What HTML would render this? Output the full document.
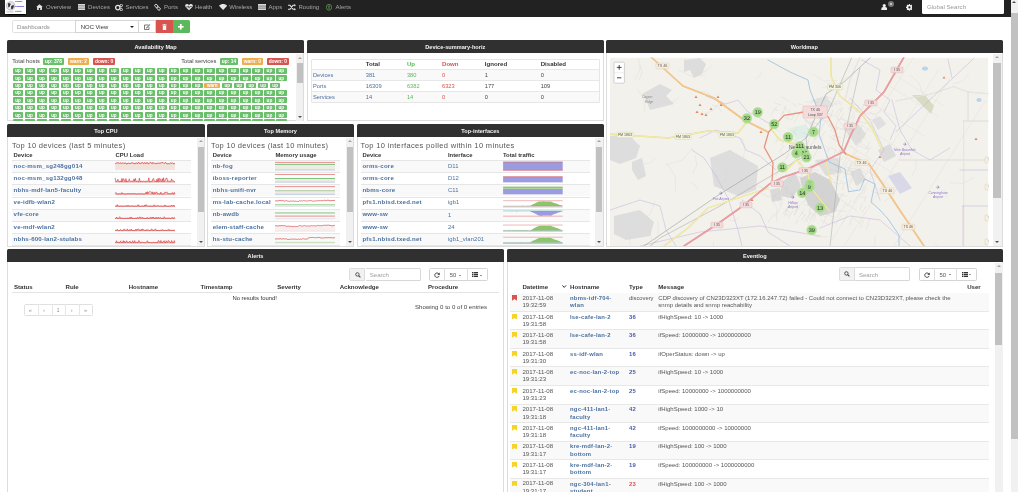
<!DOCTYPE html>
<html><head><meta charset="utf-8">
<style>
*{box-sizing:border-box;margin:0;padding:0}
html,body{width:1024px;height:499px;overflow:hidden;background:#fff;font-family:"Liberation Sans",sans-serif;color:#333}
.a{position:absolute}
.t{position:absolute;line-height:0;white-space:nowrap}
#nav{left:0;top:0;width:1010.5px;height:17px;background:#222}
.nv{position:absolute;top:3.6px;font-size:6px;color:#a8a8a8;white-space:nowrap;line-height:7px}
.ph{position:absolute;background:#303030;border-radius:1.5px 1.5px 0 0}
.pb{position:absolute;background:#fff;border:1px solid #dcdcdc;border-top:none;overflow:hidden}
.sb{position:absolute;background:#f1f1f1}
.sbt{position:absolute;background:#c1c1c1}
.arr{position:absolute;width:0;height:0;border-left:2px solid transparent;border-right:2px solid transparent}
.bd{position:absolute;color:#fff;font-weight:bold;text-align:center;border-radius:1px;white-space:nowrap}
.tl{position:absolute;height:5.6px;border-radius:0.8px}
.tt{position:absolute;line-height:0;color:#fff;font-weight:bold;font-size:4.6px;white-space:nowrap}
</style></head><body><div class="a" style="left:0;top:0;width:1024px;height:499px;will-change:transform">
<!-- NAV -->
<div id="nav" class="a">
<div class="a" style="left:5px;top:0;width:20.7px;height:13.8px;background:#fdfdfd;box-shadow:0 0.6px 1px #000"></div>
<svg class="a" style="left:5px;top:0" width="21" height="14" viewBox="0 0 21 14">
<circle cx="5.65" cy="5.8" r="4.1" fill="#e8e8ea" stroke="#8ea0c8" stroke-width="0.6"/>
<path d="M3 3.5 C4 2.6 5 3 5.6 4 L4.6 6.8 L3.4 7.6 Z" fill="#2a2a2a"/>
<path d="M6.2 6 L8.6 4.8 L8.8 7 L7.2 9.4 L6 8.6 Z" fill="#333"/>
<path d="M4.3 4.4 L5.6 3.8 L5.8 4.6 Z" fill="#d05040"/>
<path d="M3.6 3.2 L4.6 2.8 L4.4 4.4 Z" fill="#5080b0"/>
<rect x="1.5" y="10.8" width="7" height="1.8" fill="#d8d8d8"/>
<rect x="10" y="1.1" width="1.3" height="0.8" fill="#e06060"/><rect x="11.3" y="1.1" width="5.9" height="0.8" fill="#7070d0"/>
<rect x="10" y="6.0" width="1.3" height="0.9" fill="#e06060"/><rect x="11.3" y="6.0" width="7.8" height="0.9" fill="#7878d8"/>
<rect x="10" y="10.9" width="1.3" height="0.8" fill="#e06060"/><rect x="11.3" y="10.9" width="5.2" height="0.8" fill="#7070d0"/>
</svg>
<!-- home -->
<svg class="a" style="left:36px;top:4.2px" width="7" height="6" viewBox="0 0 7 6"><path d="M0.2 3.1 L3.5 0.2 L6.8 3.1 L5.9 3.1 L5.9 5.9 L4.2 5.9 L4.2 4 L2.8 4 L2.8 5.9 L1.1 5.9 L1.1 3.1 Z" fill="#e6e6e6"/></svg>
<div class="nv" style="left:46px">Overview</div>
<!-- devices -->
<svg class="a" style="left:77.6px;top:4.2px" width="7.5" height="6" viewBox="0 0 7.5 6"><rect x="0" y="0" width="7.5" height="1.7" fill="#d8d8d8"/><rect x="0" y="2.15" width="7.5" height="1.7" fill="#d8d8d8"/><rect x="0" y="4.3" width="7.5" height="1.7" fill="#d8d8d8"/></svg>
<div class="nv" style="left:88px;letter-spacing:0.1px">Devices</div>
<!-- services -->
<svg class="a" style="left:115px;top:3.8px" width="8" height="7" viewBox="0 0 8 7"><circle cx="2.8" cy="3.6" r="2.2" fill="none" stroke="#e6e6e6" stroke-width="1.3"/><circle cx="6.3" cy="1.5" r="1.2" fill="none" stroke="#e6e6e6" stroke-width="0.9"/><circle cx="6.3" cy="5.6" r="1.2" fill="none" stroke="#e6e6e6" stroke-width="0.9"/></svg>
<div class="nv" style="left:125.4px">Services</div>
<!-- ports -->
<svg class="a" style="left:154.4px;top:4px" width="7" height="6.5" viewBox="0 0 7 6.5"><rect x="0.6" y="0.6" width="3.4" height="2.6" rx="1.3" transform="rotate(40 2.3 1.9)" fill="none" stroke="#e6e6e6" stroke-width="0.9"/><rect x="3" y="3.3" width="3.4" height="2.6" rx="1.3" transform="rotate(40 4.7 4.6)" fill="none" stroke="#e6e6e6" stroke-width="0.9"/></svg>
<div class="nv" style="left:164px">Ports</div>
<!-- health -->
<svg class="a" style="left:185px;top:4px" width="8" height="6.5" viewBox="0 0 8 6.5"><path d="M4 6.3 L0.6 3 C-0.4 1.8 0.4 0.1 2 0.1 C3 0.1 3.6 0.7 4 1.3 C4.4 0.7 5 0.1 6 0.1 C7.6 0.1 8.4 1.8 7.4 3 Z" fill="#e6e6e6"/><path d="M0.8 3 L2.6 3 L3.2 1.9 L4 4.2 L4.7 2.6 L7.2 2.6" stroke="#222" stroke-width="0.6" fill="none"/></svg>
<div class="nv" style="left:195px">Health</div>
<!-- wireless -->
<svg class="a" style="left:218.8px;top:4px" width="8.2" height="6" viewBox="0 0 8.2 6"><path d="M0 1.8 C2.4 -0.5 5.8 -0.5 8.2 1.8 L4.1 6 Z" fill="#e6e6e6"/></svg>
<div class="nv" style="left:229.2px">Wireless</div>
<!-- apps -->
<svg class="a" style="left:258px;top:4.2px" width="8" height="6" viewBox="0 0 8 6"><rect x="0" y="0" width="8" height="6" fill="#d8d8d8"/><rect x="0" y="1.8" width="8" height="0.5" fill="#222"/><rect x="0" y="3.8" width="8" height="0.5" fill="#222"/></svg>
<div class="nv" style="left:268.6px">Apps</div>
<!-- routing -->
<svg class="a" style="left:288.2px;top:4px" width="8" height="6.5" viewBox="0 0 8 6.5"><path d="M0 1.2 L2 1.2 L5 5.3 L6.8 5.3 M0 5.3 L2 5.3 L5 1.2 L6.8 1.2" stroke="#e6e6e6" stroke-width="1.1" fill="none"/><path d="M6.3 0 L8 1.2 L6.3 2.4 Z M6.3 4.1 L8 5.3 L6.3 6.5 Z" fill="#e6e6e6"/></svg>
<div class="nv" style="left:298.5px">Routing</div>
<!-- alerts -->
<svg class="a" style="left:326.2px;top:4px" width="6" height="6.5" viewBox="0 0 6 6.5"><ellipse cx="3" cy="3.25" rx="2.6" ry="3" fill="none" stroke="#5d8c4a" stroke-width="0.9"/><rect x="2.6" y="1.5" width="0.8" height="2.3" fill="#8bc87a"/><rect x="2.6" y="4.3" width="0.8" height="0.8" fill="#8bc87a"/></svg>
<div class="nv" style="left:335.6px">Alerts</div>
<!-- right -->
<svg class="a" style="left:880.5px;top:3.6px" width="6.5" height="6.4" viewBox="0 0 6.5 6.4"><circle cx="3.25" cy="1.6" r="1.6" fill="#eee"/><path d="M0.2 6.4 L0.5 4 C0.8 3.3 1.8 3.1 3.25 3.1 C4.7 3.1 5.7 3.3 6 4 L6.3 6.4 Z" fill="#eee"/></svg>
<div class="a" style="left:888px;top:0.8px;width:6.4px;height:6.2px;border-radius:50%;background:#777"></div>
<div class="a" style="left:890.2px;top:2.9px;width:2px;height:2px;border-radius:50%;background:#ddd"></div>
<svg class="a" style="left:905.6px;top:4.2px" width="6.8" height="6.8" viewBox="0 0 6.8 6.8"><circle cx="3.4" cy="3.4" r="2.7" fill="#f2f2f2"/><path d="M3.4 0 L3.4 6.8 M0 3.4 L6.8 3.4 M1 1 L5.8 5.8 M5.8 1 L1 5.8" stroke="#f2f2f2" stroke-width="1.1"/><circle cx="3.4" cy="3.4" r="1.1" fill="#222"/></svg>
<div class="a" style="left:921.7px;top:0;width:82.3px;height:13.7px;background:#fff;border-radius:0 0 1.5px 1.5px"></div>
<div class="nv" style="left:926.9px;top:2.7px;color:#9a9a9a;font-size:6.2px">Global Search</div>
</div>
<!-- browser scrollbar -->

<div class="sb" style="left:1010.5px;top:0;width:7.7px;height:492px"></div>
<div class="sbt" style="left:1010.8px;top:13.2px;width:7.2px;height:426px"></div>
<div class="arr" style="left:1012.2px;top:0.9px;border-bottom:2.2px solid #505050;border-left-width:2.3px;border-right-width:2.3px"></div>
<div class="a" style="left:11.60px;top:20.30px;width:64.00px;height:13.20px;background:#fff;border:0.8px solid #e0e0e0;border-radius:1.5px 0 0 1.5px"></div>
<div class="t" style="left:17.00px;top:26.99px;font-size:6.10px;color:#8c8c8c">Dashboards</div>
<div class="a" style="left:75.30px;top:20.30px;width:63.40px;height:13.20px;background:#fff;border:0.8px solid #d4d4d4"></div>
<div class="t" style="left:80.80px;top:27.06px;font-size:5.90px;color:#3a3034">NOC View</div>
<div class="arr" style="left:129.9px;top:26.0px;border-top:2.6px solid #222;border-left-width:2.1px;border-right-width:2.1px"></div>
<div class="a" style="left:138.50px;top:20.30px;width:17.30px;height:13.20px;background:#fff;border:0.8px solid #d4d4d4;border-left:none"></div>
<svg class="a" style="left:144px;top:23.8px" width="6.5" height="6" viewBox="0 0 6.5 6"><path d="M4.6 1 L0.5 1 L0.5 5.5 L5 5.5 L5 3" fill="none" stroke="#444" stroke-width="0.7"/><path d="M2.2 3.8 L5.8 0.3 L6.3 0.8 L2.7 4.3 L1.9 4.5 Z" fill="#444"/></svg>
<div class="a" style="left:155.70px;top:20.30px;width:16.90px;height:13.20px;background:#d9534f;"></div>
<svg class="a" style="left:161.9px;top:23.9px" width="5" height="6.2" viewBox="0 0 5 6.2"><rect x="0.3" y="0.6" width="4.4" height="0.8" fill="#fff"/><rect x="1.8" y="0" width="1.4" height="0.8" fill="#fff"/><rect x="0.8" y="1.7" width="3.4" height="4.5" fill="#fff"/></svg>
<div class="a" style="left:172.50px;top:20.30px;width:17.50px;height:13.20px;background:#5cb85c;border-radius:0 1.5px 1.5px 0"></div>
<svg class="a" style="left:178.3px;top:24px" width="5.6" height="5.6" viewBox="0 0 6 6"><rect x="2.1" y="0" width="1.8" height="6" fill="#fff"/><rect x="0" y="2.1" width="6" height="1.8" fill="#fff"/></svg>
<div class="ph" style="left:7.10px;top:39.90px;width:296.90px;height:13.10px"></div>
<div class="pb" style="left:7.10px;top:53.00px;width:296.90px;height:68.20px;"></div>
<div class="t" style="left:155.55px;top:47.06px;font-size:5.60px;color:#f2f2f2;font-weight:bold;transform:translateX(-50%)">Availability Map</div>
<div class="ph" style="left:306.50px;top:39.90px;width:297.50px;height:13.10px"></div>
<div class="pb" style="left:306.50px;top:53.00px;width:297.50px;height:68.20px;"></div>
<div class="t" style="left:455.25px;top:47.06px;font-size:5.60px;color:#f2f2f2;font-weight:bold;transform:translateX(-50%)">Device-summary-horiz</div>
<div class="ph" style="left:606.00px;top:39.90px;width:396.50px;height:13.10px"></div>
<div class="pb" style="left:606.00px;top:53.00px;width:396.50px;height:193.60px;"></div>
<div class="t" style="left:804.25px;top:47.06px;font-size:5.60px;color:#f2f2f2;font-weight:bold;transform:translateX(-50%)">Worldmap</div>
<div class="ph" style="left:7.10px;top:124.00px;width:197.70px;height:12.80px"></div>
<div class="pb" style="left:7.10px;top:136.80px;width:197.70px;height:109.80px;"></div>
<div class="t" style="left:105.95px;top:131.16px;font-size:5.60px;color:#f2f2f2;font-weight:bold;transform:translateX(-50%)">Top CPU</div>
<div class="ph" style="left:207.00px;top:124.00px;width:147.00px;height:12.80px"></div>
<div class="pb" style="left:207.00px;top:136.80px;width:147.00px;height:109.80px;"></div>
<div class="t" style="left:280.50px;top:131.16px;font-size:5.60px;color:#f2f2f2;font-weight:bold;transform:translateX(-50%)">Top Memory</div>
<div class="ph" style="left:356.60px;top:124.00px;width:247.40px;height:12.80px"></div>
<div class="pb" style="left:356.60px;top:136.80px;width:247.40px;height:109.80px;"></div>
<div class="t" style="left:480.30px;top:131.16px;font-size:5.60px;color:#f2f2f2;font-weight:bold;transform:translateX(-50%)">Top-interfaces</div>
<div class="ph" style="left:7.10px;top:248.90px;width:496.90px;height:13.40px"></div>
<div class="pb" style="left:7.10px;top:262.30px;width:496.90px;height:229.50px;border-bottom:none"></div>
<div class="t" style="left:255.55px;top:256.06px;font-size:5.60px;color:#f2f2f2;font-weight:bold;transform:translateX(-50%)">Alerts</div>
<div class="ph" style="left:506.50px;top:248.90px;width:496.50px;height:13.40px"></div>
<div class="pb" style="left:506.50px;top:262.30px;width:496.50px;height:229.70px;border-bottom:none"></div>
<div class="t" style="left:754.75px;top:256.06px;font-size:5.60px;color:#f2f2f2;font-weight:bold;transform:translateX(-50%)">Eventlog</div>
<div class="t" style="left:12.20px;top:60.59px;font-size:5.80px;color:#444">Total hosts</div>
<div class="a" style="left:43.00px;top:58.20px;width:21.00px;height:6.70px;background:#6abf6b;border-radius:1px"></div>
<div class="t" style="left:53.50px;top:61.60px;font-size:4.90px;color:#fff;font-weight:bold;transform:translateX(-50%)">up: 378</div>
<div class="a" style="left:68.00px;top:58.20px;width:21.00px;height:6.70px;background:#f0ad4e;border-radius:1px"></div>
<div class="t" style="left:78.50px;top:61.60px;font-size:4.90px;color:#fff;font-weight:bold;transform:translateX(-50%)">warn: 2</div>
<div class="a" style="left:93.10px;top:58.20px;width:21.90px;height:6.70px;background:#d9534f;border-radius:1px"></div>
<div class="t" style="left:104.05px;top:61.64px;font-size:4.80px;color:#fff;font-weight:bold;transform:translateX(-50%)">down: 0</div>
<div class="t" style="left:181.20px;top:60.59px;font-size:5.80px;color:#444">Total services</div>
<div class="a" style="left:220.00px;top:58.20px;width:18.00px;height:6.70px;background:#6abf6b;border-radius:1px"></div>
<div class="t" style="left:229.00px;top:61.60px;font-size:4.90px;color:#fff;font-weight:bold;transform:translateX(-50%)">up: 14</div>
<div class="a" style="left:241.70px;top:58.20px;width:21.30px;height:6.70px;background:#f0ad4e;border-radius:1px"></div>
<div class="t" style="left:252.35px;top:61.60px;font-size:4.90px;color:#fff;font-weight:bold;transform:translateX(-50%)">warn: 0</div>
<div class="a" style="left:266.70px;top:58.20px;width:22.10px;height:6.70px;background:#d9534f;border-radius:1px"></div>
<div class="t" style="left:277.75px;top:61.64px;font-size:4.80px;color:#fff;font-weight:bold;transform:translateX(-50%)">down: 0</div>
<div class="a" style="left:8px;top:54px;width:288px;height:67px;overflow:hidden"><div class="a" style="left:-8px;top:-54px;width:1024px;height:499px">
<div class="tl" style="left:12.90px;top:68.00px;width:10.30px;background:#6abf6b"></div>
<div class="tt" style="left:18.05px;top:71.41px;transform:translateX(-50%)">up</div>
<div class="tl" style="left:24.87px;top:68.00px;width:10.30px;background:#6abf6b"></div>
<div class="tt" style="left:30.02px;top:71.41px;transform:translateX(-50%)">up</div>
<div class="tl" style="left:36.84px;top:68.00px;width:10.30px;background:#6abf6b"></div>
<div class="tt" style="left:41.99px;top:71.41px;transform:translateX(-50%)">up</div>
<div class="tl" style="left:48.81px;top:68.00px;width:10.30px;background:#6abf6b"></div>
<div class="tt" style="left:53.96px;top:71.41px;transform:translateX(-50%)">up</div>
<div class="tl" style="left:60.78px;top:68.00px;width:10.30px;background:#6abf6b"></div>
<div class="tt" style="left:65.93px;top:71.41px;transform:translateX(-50%)">up</div>
<div class="tl" style="left:72.75px;top:68.00px;width:10.30px;background:#6abf6b"></div>
<div class="tt" style="left:77.90px;top:71.41px;transform:translateX(-50%)">up</div>
<div class="tl" style="left:84.72px;top:68.00px;width:10.30px;background:#6abf6b"></div>
<div class="tt" style="left:89.87px;top:71.41px;transform:translateX(-50%)">up</div>
<div class="tl" style="left:96.69px;top:68.00px;width:10.30px;background:#6abf6b"></div>
<div class="tt" style="left:101.84px;top:71.41px;transform:translateX(-50%)">up</div>
<div class="tl" style="left:108.66px;top:68.00px;width:10.30px;background:#6abf6b"></div>
<div class="tt" style="left:113.81px;top:71.41px;transform:translateX(-50%)">up</div>
<div class="tl" style="left:120.63px;top:68.00px;width:10.30px;background:#6abf6b"></div>
<div class="tt" style="left:125.78px;top:71.41px;transform:translateX(-50%)">up</div>
<div class="tl" style="left:132.60px;top:68.00px;width:10.30px;background:#6abf6b"></div>
<div class="tt" style="left:137.75px;top:71.41px;transform:translateX(-50%)">up</div>
<div class="tl" style="left:144.57px;top:68.00px;width:10.30px;background:#6abf6b"></div>
<div class="tt" style="left:149.72px;top:71.41px;transform:translateX(-50%)">up</div>
<div class="tl" style="left:156.54px;top:68.00px;width:10.30px;background:#6abf6b"></div>
<div class="tt" style="left:161.69px;top:71.41px;transform:translateX(-50%)">up</div>
<div class="tl" style="left:168.51px;top:68.00px;width:10.30px;background:#6abf6b"></div>
<div class="tt" style="left:173.66px;top:71.41px;transform:translateX(-50%)">up</div>
<div class="tl" style="left:180.48px;top:68.00px;width:10.30px;background:#6abf6b"></div>
<div class="tt" style="left:185.63px;top:71.41px;transform:translateX(-50%)">up</div>
<div class="tl" style="left:192.45px;top:68.00px;width:10.30px;background:#6abf6b"></div>
<div class="tt" style="left:197.60px;top:71.41px;transform:translateX(-50%)">up</div>
<div class="tl" style="left:204.42px;top:68.00px;width:10.30px;background:#6abf6b"></div>
<div class="tt" style="left:209.57px;top:71.41px;transform:translateX(-50%)">up</div>
<div class="tl" style="left:216.39px;top:68.00px;width:10.30px;background:#6abf6b"></div>
<div class="tt" style="left:221.54px;top:71.41px;transform:translateX(-50%)">up</div>
<div class="tl" style="left:228.36px;top:68.00px;width:10.30px;background:#6abf6b"></div>
<div class="tt" style="left:233.51px;top:71.41px;transform:translateX(-50%)">up</div>
<div class="tl" style="left:240.33px;top:68.00px;width:10.30px;background:#6abf6b"></div>
<div class="tt" style="left:245.48px;top:71.41px;transform:translateX(-50%)">up</div>
<div class="tl" style="left:252.30px;top:68.00px;width:10.30px;background:#6abf6b"></div>
<div class="tt" style="left:257.45px;top:71.41px;transform:translateX(-50%)">up</div>
<div class="tl" style="left:264.27px;top:68.00px;width:10.30px;background:#6abf6b"></div>
<div class="tt" style="left:269.42px;top:71.41px;transform:translateX(-50%)">up</div>
<div class="tl" style="left:276.24px;top:68.00px;width:10.30px;background:#6abf6b"></div>
<div class="tt" style="left:281.39px;top:71.41px;transform:translateX(-50%)">up</div>
<div class="tl" style="left:12.90px;top:75.35px;width:10.30px;background:#6abf6b"></div>
<div class="tt" style="left:18.05px;top:78.76px;transform:translateX(-50%)">up</div>
<div class="tl" style="left:24.87px;top:75.35px;width:10.30px;background:#6abf6b"></div>
<div class="tt" style="left:30.02px;top:78.76px;transform:translateX(-50%)">up</div>
<div class="tl" style="left:36.84px;top:75.35px;width:10.30px;background:#6abf6b"></div>
<div class="tt" style="left:41.99px;top:78.76px;transform:translateX(-50%)">up</div>
<div class="tl" style="left:48.81px;top:75.35px;width:10.30px;background:#6abf6b"></div>
<div class="tt" style="left:53.96px;top:78.76px;transform:translateX(-50%)">up</div>
<div class="tl" style="left:60.78px;top:75.35px;width:10.30px;background:#6abf6b"></div>
<div class="tt" style="left:65.93px;top:78.76px;transform:translateX(-50%)">up</div>
<div class="tl" style="left:72.75px;top:75.35px;width:10.30px;background:#6abf6b"></div>
<div class="tt" style="left:77.90px;top:78.76px;transform:translateX(-50%)">up</div>
<div class="tl" style="left:84.72px;top:75.35px;width:10.30px;background:#6abf6b"></div>
<div class="tt" style="left:89.87px;top:78.76px;transform:translateX(-50%)">up</div>
<div class="tl" style="left:96.69px;top:75.35px;width:10.30px;background:#6abf6b"></div>
<div class="tt" style="left:101.84px;top:78.76px;transform:translateX(-50%)">up</div>
<div class="tl" style="left:108.66px;top:75.35px;width:10.30px;background:#6abf6b"></div>
<div class="tt" style="left:113.81px;top:78.76px;transform:translateX(-50%)">up</div>
<div class="tl" style="left:120.63px;top:75.35px;width:10.30px;background:#6abf6b"></div>
<div class="tt" style="left:125.78px;top:78.76px;transform:translateX(-50%)">up</div>
<div class="tl" style="left:132.60px;top:75.35px;width:10.30px;background:#6abf6b"></div>
<div class="tt" style="left:137.75px;top:78.76px;transform:translateX(-50%)">up</div>
<div class="tl" style="left:144.57px;top:75.35px;width:10.30px;background:#6abf6b"></div>
<div class="tt" style="left:149.72px;top:78.76px;transform:translateX(-50%)">up</div>
<div class="tl" style="left:156.54px;top:75.35px;width:10.30px;background:#6abf6b"></div>
<div class="tt" style="left:161.69px;top:78.76px;transform:translateX(-50%)">up</div>
<div class="tl" style="left:168.51px;top:75.35px;width:10.30px;background:#6abf6b"></div>
<div class="tt" style="left:173.66px;top:78.76px;transform:translateX(-50%)">up</div>
<div class="tl" style="left:180.48px;top:75.35px;width:10.30px;background:#6abf6b"></div>
<div class="tt" style="left:185.63px;top:78.76px;transform:translateX(-50%)">up</div>
<div class="tl" style="left:192.45px;top:75.35px;width:10.30px;background:#6abf6b"></div>
<div class="tt" style="left:197.60px;top:78.76px;transform:translateX(-50%)">up</div>
<div class="tl" style="left:204.42px;top:75.35px;width:10.30px;background:#6abf6b"></div>
<div class="tt" style="left:209.57px;top:78.76px;transform:translateX(-50%)">up</div>
<div class="tl" style="left:216.39px;top:75.35px;width:10.30px;background:#6abf6b"></div>
<div class="tt" style="left:221.54px;top:78.76px;transform:translateX(-50%)">up</div>
<div class="tl" style="left:228.36px;top:75.35px;width:10.30px;background:#6abf6b"></div>
<div class="tt" style="left:233.51px;top:78.76px;transform:translateX(-50%)">up</div>
<div class="tl" style="left:240.33px;top:75.35px;width:10.30px;background:#6abf6b"></div>
<div class="tt" style="left:245.48px;top:78.76px;transform:translateX(-50%)">up</div>
<div class="tl" style="left:252.30px;top:75.35px;width:10.30px;background:#6abf6b"></div>
<div class="tt" style="left:257.45px;top:78.76px;transform:translateX(-50%)">up</div>
<div class="tl" style="left:264.27px;top:75.35px;width:10.30px;background:#6abf6b"></div>
<div class="tt" style="left:269.42px;top:78.76px;transform:translateX(-50%)">up</div>
<div class="tl" style="left:276.24px;top:75.35px;width:10.30px;background:#6abf6b"></div>
<div class="tt" style="left:281.39px;top:78.76px;transform:translateX(-50%)">up</div>
<div class="tl" style="left:12.90px;top:82.70px;width:10.30px;background:#6abf6b"></div>
<div class="tt" style="left:18.05px;top:86.11px;transform:translateX(-50%)">up</div>
<div class="tl" style="left:24.87px;top:82.70px;width:10.30px;background:#6abf6b"></div>
<div class="tt" style="left:30.02px;top:86.11px;transform:translateX(-50%)">up</div>
<div class="tl" style="left:36.84px;top:82.70px;width:10.30px;background:#6abf6b"></div>
<div class="tt" style="left:41.99px;top:86.11px;transform:translateX(-50%)">up</div>
<div class="tl" style="left:48.81px;top:82.70px;width:10.30px;background:#6abf6b"></div>
<div class="tt" style="left:53.96px;top:86.11px;transform:translateX(-50%)">up</div>
<div class="tl" style="left:60.78px;top:82.70px;width:10.30px;background:#6abf6b"></div>
<div class="tt" style="left:65.93px;top:86.11px;transform:translateX(-50%)">up</div>
<div class="tl" style="left:72.75px;top:82.70px;width:10.30px;background:#6abf6b"></div>
<div class="tt" style="left:77.90px;top:86.11px;transform:translateX(-50%)">up</div>
<div class="tl" style="left:84.72px;top:82.70px;width:10.30px;background:#6abf6b"></div>
<div class="tt" style="left:89.87px;top:86.11px;transform:translateX(-50%)">up</div>
<div class="tl" style="left:96.69px;top:82.70px;width:10.30px;background:#6abf6b"></div>
<div class="tt" style="left:101.84px;top:86.11px;transform:translateX(-50%)">up</div>
<div class="tl" style="left:108.66px;top:82.70px;width:10.30px;background:#6abf6b"></div>
<div class="tt" style="left:113.81px;top:86.11px;transform:translateX(-50%)">up</div>
<div class="tl" style="left:120.63px;top:82.70px;width:10.30px;background:#6abf6b"></div>
<div class="tt" style="left:125.78px;top:86.11px;transform:translateX(-50%)">up</div>
<div class="tl" style="left:132.60px;top:82.70px;width:10.30px;background:#6abf6b"></div>
<div class="tt" style="left:137.75px;top:86.11px;transform:translateX(-50%)">up</div>
<div class="tl" style="left:144.57px;top:82.70px;width:10.30px;background:#6abf6b"></div>
<div class="tt" style="left:149.72px;top:86.11px;transform:translateX(-50%)">up</div>
<div class="tl" style="left:156.54px;top:82.70px;width:10.30px;background:#6abf6b"></div>
<div class="tt" style="left:161.69px;top:86.11px;transform:translateX(-50%)">up</div>
<div class="tl" style="left:168.51px;top:82.70px;width:10.30px;background:#6abf6b"></div>
<div class="tt" style="left:173.66px;top:86.11px;transform:translateX(-50%)">up</div>
<div class="tl" style="left:180.48px;top:82.70px;width:10.30px;background:#6abf6b"></div>
<div class="tt" style="left:185.63px;top:86.11px;transform:translateX(-50%)">up</div>
<div class="tl" style="left:192.45px;top:82.70px;width:10.30px;background:#6abf6b"></div>
<div class="tt" style="left:197.60px;top:86.11px;transform:translateX(-50%)">up</div>
<div class="tl" style="left:204.42px;top:82.70px;width:15.70px;background:#f0ad4e"></div>
<div class="tt" style="left:212.27px;top:86.11px;transform:translateX(-50%)">warn</div>
<div class="tl" style="left:222.12px;top:82.70px;width:10.30px;background:#6abf6b"></div>
<div class="tt" style="left:227.27px;top:86.11px;transform:translateX(-50%)">up</div>
<div class="tl" style="left:234.09px;top:82.70px;width:10.30px;background:#6abf6b"></div>
<div class="tt" style="left:239.24px;top:86.11px;transform:translateX(-50%)">up</div>
<div class="tl" style="left:246.06px;top:82.70px;width:10.30px;background:#6abf6b"></div>
<div class="tt" style="left:251.21px;top:86.11px;transform:translateX(-50%)">up</div>
<div class="tl" style="left:258.03px;top:82.70px;width:10.30px;background:#6abf6b"></div>
<div class="tt" style="left:263.18px;top:86.11px;transform:translateX(-50%)">up</div>
<div class="tl" style="left:270.00px;top:82.70px;width:10.30px;background:#6abf6b"></div>
<div class="tt" style="left:275.15px;top:86.11px;transform:translateX(-50%)">up</div>
<div class="tl" style="left:12.90px;top:90.05px;width:10.30px;background:#6abf6b"></div>
<div class="tt" style="left:18.05px;top:93.46px;transform:translateX(-50%)">up</div>
<div class="tl" style="left:24.87px;top:90.05px;width:10.30px;background:#6abf6b"></div>
<div class="tt" style="left:30.02px;top:93.46px;transform:translateX(-50%)">up</div>
<div class="tl" style="left:36.84px;top:90.05px;width:10.30px;background:#6abf6b"></div>
<div class="tt" style="left:41.99px;top:93.46px;transform:translateX(-50%)">up</div>
<div class="tl" style="left:48.81px;top:90.05px;width:10.30px;background:#6abf6b"></div>
<div class="tt" style="left:53.96px;top:93.46px;transform:translateX(-50%)">up</div>
<div class="tl" style="left:60.78px;top:90.05px;width:10.30px;background:#6abf6b"></div>
<div class="tt" style="left:65.93px;top:93.46px;transform:translateX(-50%)">up</div>
<div class="tl" style="left:72.75px;top:90.05px;width:10.30px;background:#6abf6b"></div>
<div class="tt" style="left:77.90px;top:93.46px;transform:translateX(-50%)">up</div>
<div class="tl" style="left:84.72px;top:90.05px;width:10.30px;background:#6abf6b"></div>
<div class="tt" style="left:89.87px;top:93.46px;transform:translateX(-50%)">up</div>
<div class="tl" style="left:96.69px;top:90.05px;width:10.30px;background:#6abf6b"></div>
<div class="tt" style="left:101.84px;top:93.46px;transform:translateX(-50%)">up</div>
<div class="tl" style="left:108.66px;top:90.05px;width:10.30px;background:#6abf6b"></div>
<div class="tt" style="left:113.81px;top:93.46px;transform:translateX(-50%)">up</div>
<div class="tl" style="left:120.63px;top:90.05px;width:10.30px;background:#6abf6b"></div>
<div class="tt" style="left:125.78px;top:93.46px;transform:translateX(-50%)">up</div>
<div class="tl" style="left:132.60px;top:90.05px;width:10.30px;background:#6abf6b"></div>
<div class="tt" style="left:137.75px;top:93.46px;transform:translateX(-50%)">up</div>
<div class="tl" style="left:144.57px;top:90.05px;width:10.30px;background:#6abf6b"></div>
<div class="tt" style="left:149.72px;top:93.46px;transform:translateX(-50%)">up</div>
<div class="tl" style="left:156.54px;top:90.05px;width:10.30px;background:#6abf6b"></div>
<div class="tt" style="left:161.69px;top:93.46px;transform:translateX(-50%)">up</div>
<div class="tl" style="left:168.51px;top:90.05px;width:10.30px;background:#6abf6b"></div>
<div class="tt" style="left:173.66px;top:93.46px;transform:translateX(-50%)">up</div>
<div class="tl" style="left:180.48px;top:90.05px;width:10.30px;background:#6abf6b"></div>
<div class="tt" style="left:185.63px;top:93.46px;transform:translateX(-50%)">up</div>
<div class="tl" style="left:192.45px;top:90.05px;width:10.30px;background:#6abf6b"></div>
<div class="tt" style="left:197.60px;top:93.46px;transform:translateX(-50%)">up</div>
<div class="tl" style="left:204.42px;top:90.05px;width:10.30px;background:#6abf6b"></div>
<div class="tt" style="left:209.57px;top:93.46px;transform:translateX(-50%)">up</div>
<div class="tl" style="left:216.39px;top:90.05px;width:10.30px;background:#6abf6b"></div>
<div class="tt" style="left:221.54px;top:93.46px;transform:translateX(-50%)">up</div>
<div class="tl" style="left:228.36px;top:90.05px;width:10.30px;background:#6abf6b"></div>
<div class="tt" style="left:233.51px;top:93.46px;transform:translateX(-50%)">up</div>
<div class="tl" style="left:240.33px;top:90.05px;width:10.30px;background:#6abf6b"></div>
<div class="tt" style="left:245.48px;top:93.46px;transform:translateX(-50%)">up</div>
<div class="tl" style="left:252.30px;top:90.05px;width:10.30px;background:#6abf6b"></div>
<div class="tt" style="left:257.45px;top:93.46px;transform:translateX(-50%)">up</div>
<div class="tl" style="left:264.27px;top:90.05px;width:10.30px;background:#6abf6b"></div>
<div class="tt" style="left:269.42px;top:93.46px;transform:translateX(-50%)">up</div>
<div class="tl" style="left:276.24px;top:90.05px;width:10.30px;background:#6abf6b"></div>
<div class="tt" style="left:281.39px;top:93.46px;transform:translateX(-50%)">up</div>
<div class="tl" style="left:12.90px;top:97.40px;width:10.30px;background:#6abf6b"></div>
<div class="tt" style="left:18.05px;top:100.81px;transform:translateX(-50%)">up</div>
<div class="tl" style="left:24.87px;top:97.40px;width:10.30px;background:#6abf6b"></div>
<div class="tt" style="left:30.02px;top:100.81px;transform:translateX(-50%)">up</div>
<div class="tl" style="left:36.84px;top:97.40px;width:10.30px;background:#6abf6b"></div>
<div class="tt" style="left:41.99px;top:100.81px;transform:translateX(-50%)">up</div>
<div class="tl" style="left:48.81px;top:97.40px;width:10.30px;background:#6abf6b"></div>
<div class="tt" style="left:53.96px;top:100.81px;transform:translateX(-50%)">up</div>
<div class="tl" style="left:60.78px;top:97.40px;width:10.30px;background:#6abf6b"></div>
<div class="tt" style="left:65.93px;top:100.81px;transform:translateX(-50%)">up</div>
<div class="tl" style="left:72.75px;top:97.40px;width:10.30px;background:#6abf6b"></div>
<div class="tt" style="left:77.90px;top:100.81px;transform:translateX(-50%)">up</div>
<div class="tl" style="left:84.72px;top:97.40px;width:10.30px;background:#6abf6b"></div>
<div class="tt" style="left:89.87px;top:100.81px;transform:translateX(-50%)">up</div>
<div class="tl" style="left:96.69px;top:97.40px;width:10.30px;background:#6abf6b"></div>
<div class="tt" style="left:101.84px;top:100.81px;transform:translateX(-50%)">up</div>
<div class="tl" style="left:108.66px;top:97.40px;width:10.30px;background:#6abf6b"></div>
<div class="tt" style="left:113.81px;top:100.81px;transform:translateX(-50%)">up</div>
<div class="tl" style="left:120.63px;top:97.40px;width:10.30px;background:#6abf6b"></div>
<div class="tt" style="left:125.78px;top:100.81px;transform:translateX(-50%)">up</div>
<div class="tl" style="left:132.60px;top:97.40px;width:10.30px;background:#6abf6b"></div>
<div class="tt" style="left:137.75px;top:100.81px;transform:translateX(-50%)">up</div>
<div class="tl" style="left:144.57px;top:97.40px;width:10.30px;background:#6abf6b"></div>
<div class="tt" style="left:149.72px;top:100.81px;transform:translateX(-50%)">up</div>
<div class="tl" style="left:156.54px;top:97.40px;width:10.30px;background:#6abf6b"></div>
<div class="tt" style="left:161.69px;top:100.81px;transform:translateX(-50%)">up</div>
<div class="tl" style="left:168.51px;top:97.40px;width:10.30px;background:#6abf6b"></div>
<div class="tt" style="left:173.66px;top:100.81px;transform:translateX(-50%)">up</div>
<div class="tl" style="left:180.48px;top:97.40px;width:10.30px;background:#6abf6b"></div>
<div class="tt" style="left:185.63px;top:100.81px;transform:translateX(-50%)">up</div>
<div class="tl" style="left:192.45px;top:97.40px;width:10.30px;background:#6abf6b"></div>
<div class="tt" style="left:197.60px;top:100.81px;transform:translateX(-50%)">up</div>
<div class="tl" style="left:204.42px;top:97.40px;width:10.30px;background:#6abf6b"></div>
<div class="tt" style="left:209.57px;top:100.81px;transform:translateX(-50%)">up</div>
<div class="tl" style="left:216.39px;top:97.40px;width:10.30px;background:#6abf6b"></div>
<div class="tt" style="left:221.54px;top:100.81px;transform:translateX(-50%)">up</div>
<div class="tl" style="left:228.36px;top:97.40px;width:10.30px;background:#6abf6b"></div>
<div class="tt" style="left:233.51px;top:100.81px;transform:translateX(-50%)">up</div>
<div class="tl" style="left:240.33px;top:97.40px;width:10.30px;background:#6abf6b"></div>
<div class="tt" style="left:245.48px;top:100.81px;transform:translateX(-50%)">up</div>
<div class="tl" style="left:252.30px;top:97.40px;width:10.30px;background:#6abf6b"></div>
<div class="tt" style="left:257.45px;top:100.81px;transform:translateX(-50%)">up</div>
<div class="tl" style="left:264.27px;top:97.40px;width:10.30px;background:#6abf6b"></div>
<div class="tt" style="left:269.42px;top:100.81px;transform:translateX(-50%)">up</div>
<div class="tl" style="left:276.24px;top:97.40px;width:10.30px;background:#6abf6b"></div>
<div class="tt" style="left:281.39px;top:100.81px;transform:translateX(-50%)">up</div>
<div class="tl" style="left:12.90px;top:104.75px;width:10.30px;background:#6abf6b"></div>
<div class="tt" style="left:18.05px;top:108.16px;transform:translateX(-50%)">up</div>
<div class="tl" style="left:24.87px;top:104.75px;width:10.30px;background:#6abf6b"></div>
<div class="tt" style="left:30.02px;top:108.16px;transform:translateX(-50%)">up</div>
<div class="tl" style="left:36.84px;top:104.75px;width:10.30px;background:#6abf6b"></div>
<div class="tt" style="left:41.99px;top:108.16px;transform:translateX(-50%)">up</div>
<div class="tl" style="left:48.81px;top:104.75px;width:10.30px;background:#6abf6b"></div>
<div class="tt" style="left:53.96px;top:108.16px;transform:translateX(-50%)">up</div>
<div class="tl" style="left:60.78px;top:104.75px;width:10.30px;background:#6abf6b"></div>
<div class="tt" style="left:65.93px;top:108.16px;transform:translateX(-50%)">up</div>
<div class="tl" style="left:72.75px;top:104.75px;width:10.30px;background:#6abf6b"></div>
<div class="tt" style="left:77.90px;top:108.16px;transform:translateX(-50%)">up</div>
<div class="tl" style="left:84.72px;top:104.75px;width:10.30px;background:#6abf6b"></div>
<div class="tt" style="left:89.87px;top:108.16px;transform:translateX(-50%)">up</div>
<div class="tl" style="left:96.69px;top:104.75px;width:10.30px;background:#6abf6b"></div>
<div class="tt" style="left:101.84px;top:108.16px;transform:translateX(-50%)">up</div>
<div class="tl" style="left:108.66px;top:104.75px;width:10.30px;background:#6abf6b"></div>
<div class="tt" style="left:113.81px;top:108.16px;transform:translateX(-50%)">up</div>
<div class="tl" style="left:120.63px;top:104.75px;width:10.30px;background:#6abf6b"></div>
<div class="tt" style="left:125.78px;top:108.16px;transform:translateX(-50%)">up</div>
<div class="tl" style="left:132.60px;top:104.75px;width:10.30px;background:#6abf6b"></div>
<div class="tt" style="left:137.75px;top:108.16px;transform:translateX(-50%)">up</div>
<div class="tl" style="left:144.57px;top:104.75px;width:10.30px;background:#6abf6b"></div>
<div class="tt" style="left:149.72px;top:108.16px;transform:translateX(-50%)">up</div>
<div class="tl" style="left:156.54px;top:104.75px;width:10.30px;background:#6abf6b"></div>
<div class="tt" style="left:161.69px;top:108.16px;transform:translateX(-50%)">up</div>
<div class="tl" style="left:168.51px;top:104.75px;width:10.30px;background:#6abf6b"></div>
<div class="tt" style="left:173.66px;top:108.16px;transform:translateX(-50%)">up</div>
<div class="tl" style="left:180.48px;top:104.75px;width:10.30px;background:#6abf6b"></div>
<div class="tt" style="left:185.63px;top:108.16px;transform:translateX(-50%)">up</div>
<div class="tl" style="left:192.45px;top:104.75px;width:10.30px;background:#6abf6b"></div>
<div class="tt" style="left:197.60px;top:108.16px;transform:translateX(-50%)">up</div>
<div class="tl" style="left:204.42px;top:104.75px;width:10.30px;background:#6abf6b"></div>
<div class="tt" style="left:209.57px;top:108.16px;transform:translateX(-50%)">up</div>
<div class="tl" style="left:216.39px;top:104.75px;width:10.30px;background:#6abf6b"></div>
<div class="tt" style="left:221.54px;top:108.16px;transform:translateX(-50%)">up</div>
<div class="tl" style="left:228.36px;top:104.75px;width:10.30px;background:#6abf6b"></div>
<div class="tt" style="left:233.51px;top:108.16px;transform:translateX(-50%)">up</div>
<div class="tl" style="left:240.33px;top:104.75px;width:10.30px;background:#6abf6b"></div>
<div class="tt" style="left:245.48px;top:108.16px;transform:translateX(-50%)">up</div>
<div class="tl" style="left:252.30px;top:104.75px;width:10.30px;background:#6abf6b"></div>
<div class="tt" style="left:257.45px;top:108.16px;transform:translateX(-50%)">up</div>
<div class="tl" style="left:264.27px;top:104.75px;width:10.30px;background:#6abf6b"></div>
<div class="tt" style="left:269.42px;top:108.16px;transform:translateX(-50%)">up</div>
<div class="tl" style="left:276.24px;top:104.75px;width:10.30px;background:#6abf6b"></div>
<div class="tt" style="left:281.39px;top:108.16px;transform:translateX(-50%)">up</div>
<div class="tl" style="left:12.90px;top:112.10px;width:10.30px;background:#6abf6b"></div>
<div class="tt" style="left:18.05px;top:115.51px;transform:translateX(-50%)">up</div>
<div class="tl" style="left:24.87px;top:112.10px;width:10.30px;background:#6abf6b"></div>
<div class="tt" style="left:30.02px;top:115.51px;transform:translateX(-50%)">up</div>
<div class="tl" style="left:36.84px;top:112.10px;width:10.30px;background:#6abf6b"></div>
<div class="tt" style="left:41.99px;top:115.51px;transform:translateX(-50%)">up</div>
<div class="tl" style="left:48.81px;top:112.10px;width:10.30px;background:#6abf6b"></div>
<div class="tt" style="left:53.96px;top:115.51px;transform:translateX(-50%)">up</div>
<div class="tl" style="left:60.78px;top:112.10px;width:10.30px;background:#6abf6b"></div>
<div class="tt" style="left:65.93px;top:115.51px;transform:translateX(-50%)">up</div>
<div class="tl" style="left:72.75px;top:112.10px;width:10.30px;background:#6abf6b"></div>
<div class="tt" style="left:77.90px;top:115.51px;transform:translateX(-50%)">up</div>
<div class="tl" style="left:84.72px;top:112.10px;width:10.30px;background:#6abf6b"></div>
<div class="tt" style="left:89.87px;top:115.51px;transform:translateX(-50%)">up</div>
<div class="tl" style="left:96.69px;top:112.10px;width:10.30px;background:#6abf6b"></div>
<div class="tt" style="left:101.84px;top:115.51px;transform:translateX(-50%)">up</div>
<div class="tl" style="left:108.66px;top:112.10px;width:10.30px;background:#6abf6b"></div>
<div class="tt" style="left:113.81px;top:115.51px;transform:translateX(-50%)">up</div>
<div class="tl" style="left:120.63px;top:112.10px;width:10.30px;background:#6abf6b"></div>
<div class="tt" style="left:125.78px;top:115.51px;transform:translateX(-50%)">up</div>
<div class="tl" style="left:132.60px;top:112.10px;width:10.30px;background:#6abf6b"></div>
<div class="tt" style="left:137.75px;top:115.51px;transform:translateX(-50%)">up</div>
<div class="tl" style="left:144.57px;top:112.10px;width:10.30px;background:#6abf6b"></div>
<div class="tt" style="left:149.72px;top:115.51px;transform:translateX(-50%)">up</div>
<div class="tl" style="left:156.54px;top:112.10px;width:10.30px;background:#6abf6b"></div>
<div class="tt" style="left:161.69px;top:115.51px;transform:translateX(-50%)">up</div>
<div class="tl" style="left:168.51px;top:112.10px;width:10.30px;background:#6abf6b"></div>
<div class="tt" style="left:173.66px;top:115.51px;transform:translateX(-50%)">up</div>
<div class="tl" style="left:180.48px;top:112.10px;width:10.30px;background:#6abf6b"></div>
<div class="tt" style="left:185.63px;top:115.51px;transform:translateX(-50%)">up</div>
<div class="tl" style="left:192.45px;top:112.10px;width:10.30px;background:#6abf6b"></div>
<div class="tt" style="left:197.60px;top:115.51px;transform:translateX(-50%)">up</div>
<div class="tl" style="left:204.42px;top:112.10px;width:10.30px;background:#6abf6b"></div>
<div class="tt" style="left:209.57px;top:115.51px;transform:translateX(-50%)">up</div>
<div class="tl" style="left:216.39px;top:112.10px;width:10.30px;background:#6abf6b"></div>
<div class="tt" style="left:221.54px;top:115.51px;transform:translateX(-50%)">up</div>
<div class="tl" style="left:228.36px;top:112.10px;width:10.30px;background:#6abf6b"></div>
<div class="tt" style="left:233.51px;top:115.51px;transform:translateX(-50%)">up</div>
<div class="tl" style="left:240.33px;top:112.10px;width:10.30px;background:#6abf6b"></div>
<div class="tt" style="left:245.48px;top:115.51px;transform:translateX(-50%)">up</div>
<div class="tl" style="left:252.30px;top:112.10px;width:10.30px;background:#6abf6b"></div>
<div class="tt" style="left:257.45px;top:115.51px;transform:translateX(-50%)">up</div>
<div class="tl" style="left:264.27px;top:112.10px;width:10.30px;background:#6abf6b"></div>
<div class="tt" style="left:269.42px;top:115.51px;transform:translateX(-50%)">up</div>
<div class="tl" style="left:276.24px;top:112.10px;width:10.30px;background:#6abf6b"></div>
<div class="tt" style="left:281.39px;top:115.51px;transform:translateX(-50%)">up</div>
<div class="tl" style="left:12.90px;top:119.45px;width:10.30px;background:#6abf6b"></div>
<div class="tt" style="left:18.05px;top:122.86px;transform:translateX(-50%)">up</div>
<div class="tl" style="left:24.87px;top:119.45px;width:10.30px;background:#6abf6b"></div>
<div class="tt" style="left:30.02px;top:122.86px;transform:translateX(-50%)">up</div>
<div class="tl" style="left:36.84px;top:119.45px;width:10.30px;background:#6abf6b"></div>
<div class="tt" style="left:41.99px;top:122.86px;transform:translateX(-50%)">up</div>
<div class="tl" style="left:48.81px;top:119.45px;width:10.30px;background:#6abf6b"></div>
<div class="tt" style="left:53.96px;top:122.86px;transform:translateX(-50%)">up</div>
<div class="tl" style="left:60.78px;top:119.45px;width:10.30px;background:#6abf6b"></div>
<div class="tt" style="left:65.93px;top:122.86px;transform:translateX(-50%)">up</div>
<div class="tl" style="left:72.75px;top:119.45px;width:10.30px;background:#6abf6b"></div>
<div class="tt" style="left:77.90px;top:122.86px;transform:translateX(-50%)">up</div>
<div class="tl" style="left:84.72px;top:119.45px;width:10.30px;background:#6abf6b"></div>
<div class="tt" style="left:89.87px;top:122.86px;transform:translateX(-50%)">up</div>
<div class="tl" style="left:96.69px;top:119.45px;width:10.30px;background:#6abf6b"></div>
<div class="tt" style="left:101.84px;top:122.86px;transform:translateX(-50%)">up</div>
<div class="tl" style="left:108.66px;top:119.45px;width:10.30px;background:#6abf6b"></div>
<div class="tt" style="left:113.81px;top:122.86px;transform:translateX(-50%)">up</div>
<div class="tl" style="left:120.63px;top:119.45px;width:10.30px;background:#6abf6b"></div>
<div class="tt" style="left:125.78px;top:122.86px;transform:translateX(-50%)">up</div>
<div class="tl" style="left:132.60px;top:119.45px;width:10.30px;background:#6abf6b"></div>
<div class="tt" style="left:137.75px;top:122.86px;transform:translateX(-50%)">up</div>
<div class="tl" style="left:144.57px;top:119.45px;width:10.30px;background:#6abf6b"></div>
<div class="tt" style="left:149.72px;top:122.86px;transform:translateX(-50%)">up</div>
<div class="tl" style="left:156.54px;top:119.45px;width:10.30px;background:#6abf6b"></div>
<div class="tt" style="left:161.69px;top:122.86px;transform:translateX(-50%)">up</div>
<div class="tl" style="left:168.51px;top:119.45px;width:10.30px;background:#6abf6b"></div>
<div class="tt" style="left:173.66px;top:122.86px;transform:translateX(-50%)">up</div>
<div class="tl" style="left:180.48px;top:119.45px;width:10.30px;background:#6abf6b"></div>
<div class="tt" style="left:185.63px;top:122.86px;transform:translateX(-50%)">up</div>
<div class="tl" style="left:192.45px;top:119.45px;width:10.30px;background:#6abf6b"></div>
<div class="tt" style="left:197.60px;top:122.86px;transform:translateX(-50%)">up</div>
<div class="tl" style="left:204.42px;top:119.45px;width:10.30px;background:#6abf6b"></div>
<div class="tt" style="left:209.57px;top:122.86px;transform:translateX(-50%)">up</div>
<div class="tl" style="left:216.39px;top:119.45px;width:10.30px;background:#6abf6b"></div>
<div class="tt" style="left:221.54px;top:122.86px;transform:translateX(-50%)">up</div>
<div class="tl" style="left:228.36px;top:119.45px;width:10.30px;background:#6abf6b"></div>
<div class="tt" style="left:233.51px;top:122.86px;transform:translateX(-50%)">up</div>
<div class="tl" style="left:240.33px;top:119.45px;width:10.30px;background:#6abf6b"></div>
<div class="tt" style="left:245.48px;top:122.86px;transform:translateX(-50%)">up</div>
<div class="tl" style="left:252.30px;top:119.45px;width:10.30px;background:#6abf6b"></div>
<div class="tt" style="left:257.45px;top:122.86px;transform:translateX(-50%)">up</div>
<div class="tl" style="left:264.27px;top:119.45px;width:10.30px;background:#6abf6b"></div>
<div class="tt" style="left:269.42px;top:122.86px;transform:translateX(-50%)">up</div>
<div class="tl" style="left:276.24px;top:119.45px;width:10.30px;background:#6abf6b"></div>
<div class="tt" style="left:281.39px;top:122.86px;transform:translateX(-50%)">up</div>
</div></div>
<div class="a" style="left:296.00px;top:54.30px;width:7.40px;height:66.30px;background:#f1f1f1;"></div>
<div class="a" style="left:296.50px;top:62.80px;width:6.40px;height:20.50px;background:#c1c1c1;"></div>
<div class="arr" style="left:297.70px;top:56.70px;border-bottom:2.2px solid #a3a3a3;border-left-width:2px;border-right-width:2px"></div>
<div class="arr" style="left:297.70px;top:115.60px;border-top:2.2px solid #505050;border-left-width:2px;border-right-width:2px"></div>
<div class="a" style="left:311.00px;top:58.80px;width:288.70px;height:43.80px;background:#fff;border:0.8px solid #e6e6e6;border-radius:1px"></div>
<div class="a" style="left:311.80px;top:69.20px;width:287.10px;height:11.00px;background:#f9f9f9;"></div>
<div class="a" style="left:311.80px;top:91.30px;width:287.10px;height:10.90px;background:#f9f9f9;"></div>
<div class="a" style="left:311.80px;top:69.20px;width:287.10px;height:0.70px;background:#e8e8e8;"></div>
<div class="a" style="left:311.80px;top:80.20px;width:287.10px;height:0.70px;background:#e8e8e8;"></div>
<div class="a" style="left:311.80px;top:91.30px;width:287.10px;height:0.70px;background:#e8e8e8;"></div>
<div class="t" style="left:365.80px;top:63.99px;font-size:6.10px;color:#333;font-weight:bold">Total</div>
<div class="t" style="left:406.90px;top:63.99px;font-size:6.10px;color:#5cb85c;font-weight:bold">Up</div>
<div class="t" style="left:442.00px;top:63.99px;font-size:6.10px;color:#d9534f;font-weight:bold">Down</div>
<div class="t" style="left:484.80px;top:63.99px;font-size:6.10px;color:#333;font-weight:bold">Ignored</div>
<div class="t" style="left:540.70px;top:63.99px;font-size:6.10px;color:#333;font-weight:bold">Disabled</div>
<div class="t" style="left:313.00px;top:75.12px;font-size:5.70px;color:#4a70a0">Devices</div>
<div class="t" style="left:365.80px;top:75.12px;font-size:5.70px;color:#4a70a0">381</div>
<div class="t" style="left:406.90px;top:75.12px;font-size:5.70px;color:#5cb85c">380</div>
<div class="t" style="left:442.00px;top:75.12px;font-size:5.70px;color:#d9534f">0</div>
<div class="t" style="left:484.80px;top:75.12px;font-size:5.70px;color:#444">1</div>
<div class="t" style="left:540.70px;top:75.12px;font-size:5.70px;color:#444">0</div>
<div class="t" style="left:313.00px;top:86.17px;font-size:5.70px;color:#4a70a0">Ports</div>
<div class="t" style="left:365.80px;top:86.17px;font-size:5.70px;color:#4a70a0">16309</div>
<div class="t" style="left:406.90px;top:86.17px;font-size:5.70px;color:#5cb85c">6382</div>
<div class="t" style="left:442.00px;top:86.17px;font-size:5.70px;color:#d9534f">6323</div>
<div class="t" style="left:484.80px;top:86.17px;font-size:5.70px;color:#444">177</div>
<div class="t" style="left:540.70px;top:86.17px;font-size:5.70px;color:#444">109</div>
<div class="t" style="left:313.00px;top:97.22px;font-size:5.70px;color:#4a70a0">Services</div>
<div class="t" style="left:365.80px;top:97.22px;font-size:5.70px;color:#4a70a0">14</div>
<div class="t" style="left:406.90px;top:97.22px;font-size:5.70px;color:#5cb85c">14</div>
<div class="t" style="left:442.00px;top:97.22px;font-size:5.70px;color:#d9534f">0</div>
<div class="t" style="left:484.80px;top:97.22px;font-size:5.70px;color:#444">0</div>
<div class="t" style="left:540.70px;top:97.22px;font-size:5.70px;color:#444">0</div>
<div class="t" style="left:11.90px;top:146.20px;font-size:7.50px;color:#555;letter-spacing:0.33px">Top 10 devices (last 5 minutes)</div>
<div class="t" style="left:13.60px;top:154.66px;font-size:5.90px;color:#333;font-weight:bold">Device</div>
<div class="t" style="left:115.60px;top:154.66px;font-size:5.90px;color:#333;font-weight:bold">CPU Load</div>
<div class="a" style="left:11.50px;top:160.00px;width:179.50px;height:12.17px;background:#f9f9f9;"></div>
<div class="a" style="left:11.50px;top:160.00px;width:179.50px;height:0.70px;background:#e6e6e6;"></div>
<div class="a" style="left:11.50px;top:172.17px;width:179.50px;height:0.70px;background:#e6e6e6;"></div>
<div class="a" style="left:11.50px;top:184.34px;width:179.50px;height:12.17px;background:#f9f9f9;"></div>
<div class="a" style="left:11.50px;top:184.34px;width:179.50px;height:0.70px;background:#e6e6e6;"></div>
<div class="a" style="left:11.50px;top:196.51px;width:179.50px;height:0.70px;background:#e6e6e6;"></div>
<div class="a" style="left:11.50px;top:208.68px;width:179.50px;height:12.17px;background:#f9f9f9;"></div>
<div class="a" style="left:11.50px;top:208.68px;width:179.50px;height:0.70px;background:#e6e6e6;"></div>
<div class="a" style="left:11.50px;top:220.85px;width:179.50px;height:0.70px;background:#e6e6e6;"></div>
<div class="a" style="left:11.50px;top:233.02px;width:179.50px;height:12.17px;background:#f9f9f9;"></div>
<div class="a" style="left:11.50px;top:233.02px;width:179.50px;height:0.70px;background:#e6e6e6;"></div>
<div class="a" style="left:11.50px;top:245.19px;width:179.50px;height:0.70px;background:#e6e6e6;"></div>
<div class="t" style="left:13.60px;top:165.79px;font-size:6.10px;color:#4a70a0;letter-spacing:0.20px;font-weight:600">noc-msm_sg248gg014</div>
<div class="t" style="left:13.60px;top:177.96px;font-size:6.10px;color:#4a70a0;letter-spacing:0.20px;font-weight:600">noc-msm_sg132gg048</div>
<div class="t" style="left:13.60px;top:190.13px;font-size:6.10px;color:#4a70a0;letter-spacing:0.20px;font-weight:600">nbhs-mdf-lan5-faculty</div>
<div class="t" style="left:13.60px;top:202.30px;font-size:6.10px;color:#4a70a0;letter-spacing:0.20px;font-weight:600">ve-idfb-wlan2</div>
<div class="t" style="left:13.60px;top:214.47px;font-size:6.10px;color:#4a70a0;letter-spacing:0.20px;font-weight:600">vfe-core</div>
<div class="t" style="left:13.60px;top:226.64px;font-size:6.10px;color:#4a70a0;letter-spacing:0.20px;font-weight:600">ve-mdf-wlan2</div>
<div class="t" style="left:13.60px;top:238.81px;font-size:6.10px;color:#4a70a0;letter-spacing:0.20px;font-weight:600">nbhs-600-lan2-stulabs</div>
<svg class="a" style="left:0;top:0" width="1024" height="499"><path d="M115.20 163.65 L115.87 163.51 L116.54 162.97 L117.22 162.71 L117.89 163.12 L118.56 162.95 L119.23 163.55 L119.90 162.79 L120.58 163.06 L121.25 163.23 L121.92 163.75 L122.59 163.11 L123.26 162.75 L123.93 163.51 L124.61 163.29 L125.28 162.70 L125.95 163.76 L126.62 163.87 L127.29 163.60 L127.97 163.74 L128.64 162.80 L129.31 163.47 L129.98 163.74 L130.65 163.39 L131.33 163.06 L132.00 162.46 L132.67 162.99 L133.34 163.28 L134.01 163.76 L134.69 163.85 L135.36 163.06 L136.03 163.68 L136.70 162.72 L137.37 163.59 L138.04 163.18 L138.72 162.32 L139.39 163.45 L140.06 162.94 L140.73 163.62 L141.40 163.37 L142.08 162.30 L142.75 163.09 L143.42 163.69 L144.09 162.69 L144.76 162.82 L145.44 163.69 L146.11 162.61 L146.78 163.21 L147.45 162.68 L148.12 163.85 L148.80 163.59 L149.47 163.02 L150.14 162.43 L150.81 162.81 L151.48 163.11 L152.16 163.79 L152.83 162.47 L153.50 163.18 L154.17 163.43 L154.84 163.18 L155.51 163.60 L156.19 163.16 L156.86 163.84 L157.53 163.27 L158.20 163.24 L158.87 163.01 L159.55 163.25 L160.22 162.92 L160.89 163.22 L161.56 162.76 L162.23 162.60 L162.91 162.60 L163.58 163.28 L164.25 163.35 L164.92 163.06 L165.59 162.44 L166.27 163.51 L166.94 163.70 L167.61 163.78 L168.28 163.65 L168.95 163.74 L169.62 163.78 L170.30 163.16 L170.97 162.93 L171.64 163.43 L172.31 162.74 L172.98 163.60 L173.66 163.66 L174.33 163.73 L175.00 163.24 L175.00 170.10 L115.20 170.10 Z" fill="#f2e2dc"/><path d="M115.20 163.65 L115.87 163.51 L116.54 162.97 L117.22 162.71 L117.89 163.12 L118.56 162.95 L119.23 163.55 L119.90 162.79 L120.58 163.06 L121.25 163.23 L121.92 163.75 L122.59 163.11 L123.26 162.75 L123.93 163.51 L124.61 163.29 L125.28 162.70 L125.95 163.76 L126.62 163.87 L127.29 163.60 L127.97 163.74 L128.64 162.80 L129.31 163.47 L129.98 163.74 L130.65 163.39 L131.33 163.06 L132.00 162.46 L132.67 162.99 L133.34 163.28 L134.01 163.76 L134.69 163.85 L135.36 163.06 L136.03 163.68 L136.70 162.72 L137.37 163.59 L138.04 163.18 L138.72 162.32 L139.39 163.45 L140.06 162.94 L140.73 163.62 L141.40 163.37 L142.08 162.30 L142.75 163.09 L143.42 163.69 L144.09 162.69 L144.76 162.82 L145.44 163.69 L146.11 162.61 L146.78 163.21 L147.45 162.68 L148.12 163.85 L148.80 163.59 L149.47 163.02 L150.14 162.43 L150.81 162.81 L151.48 163.11 L152.16 163.79 L152.83 162.47 L153.50 163.18 L154.17 163.43 L154.84 163.18 L155.51 163.60 L156.19 163.16 L156.86 163.84 L157.53 163.27 L158.20 163.24 L158.87 163.01 L159.55 163.25 L160.22 162.92 L160.89 163.22 L161.56 162.76 L162.23 162.60 L162.91 162.60 L163.58 163.28 L164.25 163.35 L164.92 163.06 L165.59 162.44 L166.27 163.51 L166.94 163.70 L167.61 163.78 L168.28 163.65 L168.95 163.74 L169.62 163.78 L170.30 163.16 L170.97 162.93 L171.64 163.43 L172.31 162.74 L172.98 163.60 L173.66 163.66 L174.33 163.73 L175.00 163.24" stroke="#d63030" stroke-width="0.8" fill="none"/><path d="M115.20 177.84 L115.87 181.69 L116.54 181.48 L117.22 181.10 L117.89 179.28 L118.56 181.49 L119.23 181.97 L119.90 181.18 L120.58 180.93 L121.25 181.94 L121.92 178.38 L122.59 181.55 L123.26 178.59 L123.93 178.94 L124.61 181.42 L125.28 181.72 L125.95 178.52 L126.62 181.95 L127.29 181.36 L127.97 181.77 L128.64 181.02 L129.31 178.74 L129.98 181.19 L130.65 181.51 L131.33 181.23 L132.00 181.32 L132.67 181.04 L133.34 181.32 L134.01 178.90 L134.69 181.51 L135.36 178.36 L136.03 181.23 L136.70 181.49 L137.37 181.11 L138.04 181.54 L138.72 181.94 L139.39 178.09 L140.06 181.32 L140.73 181.78 L141.40 180.89 L142.08 181.38 L142.75 181.71 L143.42 180.92 L144.09 181.46 L144.76 181.37 L145.44 181.96 L146.11 181.07 L146.78 181.16 L147.45 181.40 L148.12 181.50 L148.80 177.80 L149.47 181.75 L150.14 181.44 L150.81 181.59 L151.48 181.28 L152.16 181.47 L152.83 178.93 L153.50 178.30 L154.17 181.09 L154.84 181.07 L155.51 181.04 L156.19 181.88 L156.86 179.30 L157.53 181.70 L158.20 178.23 L158.87 181.89 L159.55 178.40 L160.22 178.85 L160.89 181.47 L161.56 181.45 L162.23 178.65 L162.91 181.76 L163.58 177.75 L164.25 181.74 L164.92 181.07 L165.59 179.30 L166.27 178.06 L166.94 178.09 L167.61 181.37 L168.28 180.90 L168.95 181.40 L169.62 181.26 L170.30 181.34 L170.97 181.28 L171.64 178.80 L172.31 181.01 L172.98 181.03 L173.66 180.94 L174.33 181.51 L175.00 181.96 L175.00 181.97 L115.20 181.97 Z" fill="#f5e4e0"/><path d="M115.20 177.84 L115.87 181.69 L116.54 181.48 L117.22 181.10 L117.89 179.28 L118.56 181.49 L119.23 181.97 L119.90 181.18 L120.58 180.93 L121.25 181.94 L121.92 178.38 L122.59 181.55 L123.26 178.59 L123.93 178.94 L124.61 181.42 L125.28 181.72 L125.95 178.52 L126.62 181.95 L127.29 181.36 L127.97 181.77 L128.64 181.02 L129.31 178.74 L129.98 181.19 L130.65 181.51 L131.33 181.23 L132.00 181.32 L132.67 181.04 L133.34 181.32 L134.01 178.90 L134.69 181.51 L135.36 178.36 L136.03 181.23 L136.70 181.49 L137.37 181.11 L138.04 181.54 L138.72 181.94 L139.39 178.09 L140.06 181.32 L140.73 181.78 L141.40 180.89 L142.08 181.38 L142.75 181.71 L143.42 180.92 L144.09 181.46 L144.76 181.37 L145.44 181.96 L146.11 181.07 L146.78 181.16 L147.45 181.40 L148.12 181.50 L148.80 177.80 L149.47 181.75 L150.14 181.44 L150.81 181.59 L151.48 181.28 L152.16 181.47 L152.83 178.93 L153.50 178.30 L154.17 181.09 L154.84 181.07 L155.51 181.04 L156.19 181.88 L156.86 179.30 L157.53 181.70 L158.20 178.23 L158.87 181.89 L159.55 178.40 L160.22 178.85 L160.89 181.47 L161.56 181.45 L162.23 178.65 L162.91 181.76 L163.58 177.75 L164.25 181.74 L164.92 181.07 L165.59 179.30 L166.27 178.06 L166.94 178.09 L167.61 181.37 L168.28 180.90 L168.95 181.40 L169.62 181.26 L170.30 181.34 L170.97 181.28 L171.64 178.80 L172.31 181.01 L172.98 181.03 L173.66 180.94 L174.33 181.51 L175.00 181.96" stroke="#d63030" stroke-width="0.6" fill="none"/><line x1="115.20" y1="181.97" x2="175.00" y2="181.97" stroke="#d63030" stroke-width="0.5"/><path d="M115.20 193.52 L115.87 192.49 L116.54 193.66 L117.22 193.94 L117.89 193.75 L118.56 194.04 L119.23 193.88 L119.90 193.49 L120.58 193.79 L121.25 193.97 L121.92 192.55 L122.59 193.93 L123.26 193.56 L123.93 193.78 L124.61 194.12 L125.28 194.05 L125.95 193.49 L126.62 194.02 L127.29 193.62 L127.97 193.55 L128.64 193.63 L129.31 193.50 L129.98 194.04 L130.65 193.68 L131.33 193.80 L132.00 193.54 L132.67 193.60 L133.34 193.57 L134.01 193.84 L134.69 193.54 L135.36 193.82 L136.03 193.93 L136.70 194.03 L137.37 193.97 L138.04 193.94 L138.72 193.68 L139.39 193.80 L140.06 193.76 L140.73 194.00 L141.40 193.53 L142.08 194.09 L142.75 193.67 L143.42 194.02 L144.09 194.10 L144.76 193.96 L145.44 193.57 L146.11 192.04 L146.78 193.98 L147.45 191.66 L148.12 193.67 L148.80 192.20 L149.47 191.88 L150.14 191.59 L150.81 191.82 L151.48 192.31 L152.16 194.04 L152.83 191.86 L153.50 194.11 L154.17 194.04 L154.84 192.22 L155.51 193.66 L156.19 192.23 L156.86 192.11 L157.53 193.66 L158.20 193.65 L158.87 193.68 L159.55 193.99 L160.22 193.93 L160.89 192.11 L161.56 194.06 L162.23 193.88 L162.91 194.05 L163.58 193.97 L164.25 193.87 L164.92 192.00 L165.59 192.52 L166.27 192.41 L166.94 191.92 L167.61 193.50 L168.28 193.49 L168.95 193.85 L169.62 193.76 L170.30 193.62 L170.97 193.97 L171.64 193.80 L172.31 192.54 L172.98 194.07 L173.66 193.98 L174.33 192.39 L175.00 194.00 L175.00 194.14 L115.20 194.14 Z" fill="#f5e4e0"/><path d="M115.20 193.52 L115.87 192.49 L116.54 193.66 L117.22 193.94 L117.89 193.75 L118.56 194.04 L119.23 193.88 L119.90 193.49 L120.58 193.79 L121.25 193.97 L121.92 192.55 L122.59 193.93 L123.26 193.56 L123.93 193.78 L124.61 194.12 L125.28 194.05 L125.95 193.49 L126.62 194.02 L127.29 193.62 L127.97 193.55 L128.64 193.63 L129.31 193.50 L129.98 194.04 L130.65 193.68 L131.33 193.80 L132.00 193.54 L132.67 193.60 L133.34 193.57 L134.01 193.84 L134.69 193.54 L135.36 193.82 L136.03 193.93 L136.70 194.03 L137.37 193.97 L138.04 193.94 L138.72 193.68 L139.39 193.80 L140.06 193.76 L140.73 194.00 L141.40 193.53 L142.08 194.09 L142.75 193.67 L143.42 194.02 L144.09 194.10 L144.76 193.96 L145.44 193.57 L146.11 192.04 L146.78 193.98 L147.45 191.66 L148.12 193.67 L148.80 192.20 L149.47 191.88 L150.14 191.59 L150.81 191.82 L151.48 192.31 L152.16 194.04 L152.83 191.86 L153.50 194.11 L154.17 194.04 L154.84 192.22 L155.51 193.66 L156.19 192.23 L156.86 192.11 L157.53 193.66 L158.20 193.65 L158.87 193.68 L159.55 193.99 L160.22 193.93 L160.89 192.11 L161.56 194.06 L162.23 193.88 L162.91 194.05 L163.58 193.97 L164.25 193.87 L164.92 192.00 L165.59 192.52 L166.27 192.41 L166.94 191.92 L167.61 193.50 L168.28 193.49 L168.95 193.85 L169.62 193.76 L170.30 193.62 L170.97 193.97 L171.64 193.80 L172.31 192.54 L172.98 194.07 L173.66 193.98 L174.33 192.39 L175.00 194.00" stroke="#d63030" stroke-width="0.6" fill="none"/><line x1="115.20" y1="194.14" x2="175.00" y2="194.14" stroke="#d63030" stroke-width="0.5"/><path d="M115.20 206.07 L115.87 206.04 L116.54 206.28 L117.22 204.63 L117.89 206.20 L118.56 206.10 L119.23 206.10 L119.90 206.24 L120.58 205.92 L121.25 205.98 L121.92 206.28 L122.59 206.04 L123.26 206.30 L123.93 206.10 L124.61 205.91 L125.28 205.90 L125.95 205.95 L126.62 205.89 L127.29 206.27 L127.97 205.07 L128.64 206.11 L129.31 206.17 L129.98 206.14 L130.65 206.05 L131.33 205.90 L132.00 205.89 L132.67 205.86 L133.34 206.24 L134.01 205.88 L134.69 206.05 L135.36 206.21 L136.03 206.05 L136.70 206.28 L137.37 205.86 L138.04 204.65 L138.72 206.24 L139.39 205.96 L140.06 206.29 L140.73 206.29 L141.40 206.16 L142.08 205.87 L142.75 205.86 L143.42 206.28 L144.09 206.30 L144.76 204.94 L145.44 206.24 L146.11 204.61 L146.78 205.88 L147.45 206.14 L148.12 206.08 L148.80 206.04 L149.47 206.03 L150.14 206.08 L150.81 205.99 L151.48 206.17 L152.16 206.08 L152.83 206.30 L153.50 206.05 L154.17 204.79 L154.84 206.28 L155.51 206.10 L156.19 206.15 L156.86 205.98 L157.53 205.19 L158.20 205.88 L158.87 206.10 L159.55 206.17 L160.22 206.17 L160.89 206.04 L161.56 206.14 L162.23 206.30 L162.91 205.98 L163.58 206.21 L164.25 206.20 L164.92 204.92 L165.59 206.26 L166.27 206.16 L166.94 206.11 L167.61 206.23 L168.28 206.02 L168.95 206.11 L169.62 206.26 L170.30 206.22 L170.97 205.93 L171.64 205.03 L172.31 206.02 L172.98 206.15 L173.66 205.02 L174.33 206.19 L175.00 206.12 L175.00 206.31 L115.20 206.31 Z" fill="#f5e4e0"/><path d="M115.20 206.07 L115.87 206.04 L116.54 206.28 L117.22 204.63 L117.89 206.20 L118.56 206.10 L119.23 206.10 L119.90 206.24 L120.58 205.92 L121.25 205.98 L121.92 206.28 L122.59 206.04 L123.26 206.30 L123.93 206.10 L124.61 205.91 L125.28 205.90 L125.95 205.95 L126.62 205.89 L127.29 206.27 L127.97 205.07 L128.64 206.11 L129.31 206.17 L129.98 206.14 L130.65 206.05 L131.33 205.90 L132.00 205.89 L132.67 205.86 L133.34 206.24 L134.01 205.88 L134.69 206.05 L135.36 206.21 L136.03 206.05 L136.70 206.28 L137.37 205.86 L138.04 204.65 L138.72 206.24 L139.39 205.96 L140.06 206.29 L140.73 206.29 L141.40 206.16 L142.08 205.87 L142.75 205.86 L143.42 206.28 L144.09 206.30 L144.76 204.94 L145.44 206.24 L146.11 204.61 L146.78 205.88 L147.45 206.14 L148.12 206.08 L148.80 206.04 L149.47 206.03 L150.14 206.08 L150.81 205.99 L151.48 206.17 L152.16 206.08 L152.83 206.30 L153.50 206.05 L154.17 204.79 L154.84 206.28 L155.51 206.10 L156.19 206.15 L156.86 205.98 L157.53 205.19 L158.20 205.88 L158.87 206.10 L159.55 206.17 L160.22 206.17 L160.89 206.04 L161.56 206.14 L162.23 206.30 L162.91 205.98 L163.58 206.21 L164.25 206.20 L164.92 204.92 L165.59 206.26 L166.27 206.16 L166.94 206.11 L167.61 206.23 L168.28 206.02 L168.95 206.11 L169.62 206.26 L170.30 206.22 L170.97 205.93 L171.64 205.03 L172.31 206.02 L172.98 206.15 L173.66 205.02 L174.33 206.19 L175.00 206.12" stroke="#d63030" stroke-width="0.6" fill="none"/><line x1="115.20" y1="206.31" x2="175.00" y2="206.31" stroke="#d63030" stroke-width="0.5"/><path d="M115.20 218.43 L115.87 218.41 L116.54 217.11 L117.22 218.12 L117.89 218.38 L118.56 218.36 L119.23 217.32 L119.90 216.73 L120.58 218.12 L121.25 218.39 L121.92 218.20 L122.59 218.10 L123.26 218.44 L123.93 218.18 L124.61 218.40 L125.28 218.44 L125.95 218.09 L126.62 218.34 L127.29 218.22 L127.97 218.10 L128.64 218.29 L129.31 218.29 L129.98 217.18 L130.65 218.46 L131.33 216.95 L132.00 218.24 L132.67 218.33 L133.34 218.39 L134.01 218.39 L134.69 218.36 L135.36 218.14 L136.03 218.23 L136.70 218.43 L137.37 217.24 L138.04 218.20 L138.72 218.33 L139.39 217.07 L140.06 216.90 L140.73 218.05 L141.40 218.05 L142.08 217.19 L142.75 218.13 L143.42 218.06 L144.09 218.11 L144.76 218.39 L145.44 218.42 L146.11 218.05 L146.78 218.48 L147.45 217.28 L148.12 218.32 L148.80 218.44 L149.47 218.29 L150.14 217.36 L150.81 217.28 L151.48 218.41 L152.16 217.05 L152.83 218.03 L153.50 217.02 L154.17 218.30 L154.84 218.27 L155.51 218.30 L156.19 217.10 L156.86 218.08 L157.53 218.26 L158.20 217.22 L158.87 218.39 L159.55 218.09 L160.22 217.36 L160.89 218.23 L161.56 218.30 L162.23 218.19 L162.91 218.14 L163.58 218.44 L164.25 216.77 L164.92 218.06 L165.59 218.18 L166.27 218.19 L166.94 218.24 L167.61 218.17 L168.28 218.06 L168.95 218.45 L169.62 218.05 L170.30 218.46 L170.97 218.42 L171.64 218.18 L172.31 217.28 L172.98 218.22 L173.66 218.06 L174.33 217.40 L175.00 218.47 L175.00 218.48 L115.20 218.48 Z" fill="#f5e4e0"/><path d="M115.20 218.43 L115.87 218.41 L116.54 217.11 L117.22 218.12 L117.89 218.38 L118.56 218.36 L119.23 217.32 L119.90 216.73 L120.58 218.12 L121.25 218.39 L121.92 218.20 L122.59 218.10 L123.26 218.44 L123.93 218.18 L124.61 218.40 L125.28 218.44 L125.95 218.09 L126.62 218.34 L127.29 218.22 L127.97 218.10 L128.64 218.29 L129.31 218.29 L129.98 217.18 L130.65 218.46 L131.33 216.95 L132.00 218.24 L132.67 218.33 L133.34 218.39 L134.01 218.39 L134.69 218.36 L135.36 218.14 L136.03 218.23 L136.70 218.43 L137.37 217.24 L138.04 218.20 L138.72 218.33 L139.39 217.07 L140.06 216.90 L140.73 218.05 L141.40 218.05 L142.08 217.19 L142.75 218.13 L143.42 218.06 L144.09 218.11 L144.76 218.39 L145.44 218.42 L146.11 218.05 L146.78 218.48 L147.45 217.28 L148.12 218.32 L148.80 218.44 L149.47 218.29 L150.14 217.36 L150.81 217.28 L151.48 218.41 L152.16 217.05 L152.83 218.03 L153.50 217.02 L154.17 218.30 L154.84 218.27 L155.51 218.30 L156.19 217.10 L156.86 218.08 L157.53 218.26 L158.20 217.22 L158.87 218.39 L159.55 218.09 L160.22 217.36 L160.89 218.23 L161.56 218.30 L162.23 218.19 L162.91 218.14 L163.58 218.44 L164.25 216.77 L164.92 218.06 L165.59 218.18 L166.27 218.19 L166.94 218.24 L167.61 218.17 L168.28 218.06 L168.95 218.45 L169.62 218.05 L170.30 218.46 L170.97 218.42 L171.64 218.18 L172.31 217.28 L172.98 218.22 L173.66 218.06 L174.33 217.40 L175.00 218.47" stroke="#d63030" stroke-width="0.6" fill="none"/><line x1="115.20" y1="218.48" x2="175.00" y2="218.48" stroke="#d63030" stroke-width="0.5"/><path d="M115.20 230.32 L115.87 230.23 L116.54 230.23 L117.22 229.23 L117.89 230.36 L118.56 230.60 L119.23 230.54 L119.90 230.39 L120.58 229.41 L121.25 230.24 L121.92 230.58 L122.59 230.59 L123.26 230.59 L123.93 228.94 L124.61 229.41 L125.28 230.26 L125.95 230.22 L126.62 230.34 L127.29 228.89 L127.97 230.22 L128.64 230.52 L129.31 230.58 L129.98 229.52 L130.65 230.38 L131.33 229.08 L132.00 230.51 L132.67 230.43 L133.34 230.43 L134.01 230.62 L134.69 230.64 L135.36 230.27 L136.03 229.00 L136.70 230.39 L137.37 229.54 L138.04 228.88 L138.72 229.03 L139.39 230.23 L140.06 230.49 L140.73 230.30 L141.40 229.03 L142.08 230.26 L142.75 228.89 L143.42 229.32 L144.09 230.24 L144.76 230.23 L145.44 230.51 L146.11 230.57 L146.78 229.46 L147.45 230.20 L148.12 229.54 L148.80 230.41 L149.47 230.54 L150.14 230.28 L150.81 230.46 L151.48 228.91 L152.16 229.21 L152.83 230.59 L153.50 230.22 L154.17 230.30 L154.84 229.26 L155.51 228.96 L156.19 230.45 L156.86 230.27 L157.53 230.45 L158.20 230.32 L158.87 230.52 L159.55 230.58 L160.22 230.21 L160.89 230.37 L161.56 230.50 L162.23 229.37 L162.91 230.26 L163.58 230.30 L164.25 230.34 L164.92 230.31 L165.59 230.33 L166.27 230.43 L166.94 230.34 L167.61 230.22 L168.28 230.39 L168.95 229.18 L169.62 230.35 L170.30 230.28 L170.97 230.29 L171.64 230.36 L172.31 230.28 L172.98 230.27 L173.66 230.34 L174.33 230.22 L175.00 230.41 L175.00 230.65 L115.20 230.65 Z" fill="#f5e4e0"/><path d="M115.20 230.32 L115.87 230.23 L116.54 230.23 L117.22 229.23 L117.89 230.36 L118.56 230.60 L119.23 230.54 L119.90 230.39 L120.58 229.41 L121.25 230.24 L121.92 230.58 L122.59 230.59 L123.26 230.59 L123.93 228.94 L124.61 229.41 L125.28 230.26 L125.95 230.22 L126.62 230.34 L127.29 228.89 L127.97 230.22 L128.64 230.52 L129.31 230.58 L129.98 229.52 L130.65 230.38 L131.33 229.08 L132.00 230.51 L132.67 230.43 L133.34 230.43 L134.01 230.62 L134.69 230.64 L135.36 230.27 L136.03 229.00 L136.70 230.39 L137.37 229.54 L138.04 228.88 L138.72 229.03 L139.39 230.23 L140.06 230.49 L140.73 230.30 L141.40 229.03 L142.08 230.26 L142.75 228.89 L143.42 229.32 L144.09 230.24 L144.76 230.23 L145.44 230.51 L146.11 230.57 L146.78 229.46 L147.45 230.20 L148.12 229.54 L148.80 230.41 L149.47 230.54 L150.14 230.28 L150.81 230.46 L151.48 228.91 L152.16 229.21 L152.83 230.59 L153.50 230.22 L154.17 230.30 L154.84 229.26 L155.51 228.96 L156.19 230.45 L156.86 230.27 L157.53 230.45 L158.20 230.32 L158.87 230.52 L159.55 230.58 L160.22 230.21 L160.89 230.37 L161.56 230.50 L162.23 229.37 L162.91 230.26 L163.58 230.30 L164.25 230.34 L164.92 230.31 L165.59 230.33 L166.27 230.43 L166.94 230.34 L167.61 230.22 L168.28 230.39 L168.95 229.18 L169.62 230.35 L170.30 230.28 L170.97 230.29 L171.64 230.36 L172.31 230.28 L172.98 230.27 L173.66 230.34 L174.33 230.22 L175.00 230.41" stroke="#d63030" stroke-width="0.6" fill="none"/><line x1="115.20" y1="230.65" x2="175.00" y2="230.65" stroke="#d63030" stroke-width="0.5"/><path d="M115.20 242.33 L115.87 242.66 L116.54 240.74 L117.22 242.36 L117.89 242.36 L118.56 242.34 L119.23 242.57 L119.90 242.41 L120.58 240.85 L121.25 242.66 L121.92 242.41 L122.59 242.62 L123.26 240.61 L123.93 242.55 L124.61 241.19 L125.28 242.65 L125.95 242.47 L126.62 240.75 L127.29 242.26 L127.97 242.51 L128.64 242.40 L129.31 242.23 L129.98 241.03 L130.65 242.64 L131.33 242.77 L132.00 242.50 L132.67 240.74 L133.34 242.70 L134.01 242.74 L134.69 240.55 L135.36 242.81 L136.03 242.81 L136.70 242.28 L137.37 242.64 L138.04 242.59 L138.72 240.42 L139.39 240.97 L140.06 242.58 L140.73 242.67 L141.40 242.28 L142.08 242.29 L142.75 242.32 L143.42 242.51 L144.09 242.40 L144.76 242.77 L145.44 242.66 L146.11 242.35 L146.78 241.36 L147.45 240.81 L148.12 242.67 L148.80 242.26 L149.47 242.57 L150.14 242.45 L150.81 242.54 L151.48 242.73 L152.16 242.64 L152.83 242.63 L153.50 242.24 L154.17 242.59 L154.84 242.63 L155.51 242.53 L156.19 242.26 L156.86 242.82 L157.53 242.79 L158.20 240.64 L158.87 240.69 L159.55 242.26 L160.22 242.78 L160.89 240.47 L161.56 242.57 L162.23 242.33 L162.91 242.54 L163.58 241.03 L164.25 240.78 L164.92 242.73 L165.59 242.76 L166.27 240.76 L166.94 242.28 L167.61 242.40 L168.28 240.58 L168.95 240.79 L169.62 242.28 L170.30 242.55 L170.97 242.35 L171.64 240.47 L172.31 242.56 L172.98 242.55 L173.66 242.39 L174.33 240.61 L175.00 242.65 L175.00 242.82 L115.20 242.82 Z" fill="#f5e4e0"/><path d="M115.20 242.33 L115.87 242.66 L116.54 240.74 L117.22 242.36 L117.89 242.36 L118.56 242.34 L119.23 242.57 L119.90 242.41 L120.58 240.85 L121.25 242.66 L121.92 242.41 L122.59 242.62 L123.26 240.61 L123.93 242.55 L124.61 241.19 L125.28 242.65 L125.95 242.47 L126.62 240.75 L127.29 242.26 L127.97 242.51 L128.64 242.40 L129.31 242.23 L129.98 241.03 L130.65 242.64 L131.33 242.77 L132.00 242.50 L132.67 240.74 L133.34 242.70 L134.01 242.74 L134.69 240.55 L135.36 242.81 L136.03 242.81 L136.70 242.28 L137.37 242.64 L138.04 242.59 L138.72 240.42 L139.39 240.97 L140.06 242.58 L140.73 242.67 L141.40 242.28 L142.08 242.29 L142.75 242.32 L143.42 242.51 L144.09 242.40 L144.76 242.77 L145.44 242.66 L146.11 242.35 L146.78 241.36 L147.45 240.81 L148.12 242.67 L148.80 242.26 L149.47 242.57 L150.14 242.45 L150.81 242.54 L151.48 242.73 L152.16 242.64 L152.83 242.63 L153.50 242.24 L154.17 242.59 L154.84 242.63 L155.51 242.53 L156.19 242.26 L156.86 242.82 L157.53 242.79 L158.20 240.64 L158.87 240.69 L159.55 242.26 L160.22 242.78 L160.89 240.47 L161.56 242.57 L162.23 242.33 L162.91 242.54 L163.58 241.03 L164.25 240.78 L164.92 242.73 L165.59 242.76 L166.27 240.76 L166.94 242.28 L167.61 242.40 L168.28 240.58 L168.95 240.79 L169.62 242.28 L170.30 242.55 L170.97 242.35 L171.64 240.47 L172.31 242.56 L172.98 242.55 L173.66 242.39 L174.33 240.61 L175.00 242.65" stroke="#d63030" stroke-width="0.6" fill="none"/><line x1="115.20" y1="242.82" x2="175.00" y2="242.82" stroke="#d63030" stroke-width="0.5"/></svg>
<div class="a" style="left:197.00px;top:137.50px;width:7.30px;height:108.50px;background:#f1f1f1;"></div>
<div class="a" style="left:197.50px;top:146.60px;width:6.30px;height:65.40px;background:#c1c1c1;"></div>
<div class="arr" style="left:198.65px;top:139.90px;border-bottom:2.2px solid #a3a3a3;border-left-width:2px;border-right-width:2px"></div>
<div class="arr" style="left:198.65px;top:241.00px;border-top:2.2px solid #505050;border-left-width:2px;border-right-width:2px"></div>
<div class="t" style="left:211.10px;top:146.20px;font-size:7.50px;color:#555;letter-spacing:0.30px">Top 10 devices (last 10 minutes)</div>
<div class="t" style="left:212.70px;top:154.66px;font-size:5.90px;color:#333;font-weight:bold">Device</div>
<div class="t" style="left:275.40px;top:154.66px;font-size:5.90px;color:#333;font-weight:bold">Memory usage</div>
<div class="a" style="left:211.00px;top:160.00px;width:129.00px;height:12.17px;background:#f9f9f9;"></div>
<div class="a" style="left:211.00px;top:160.00px;width:129.00px;height:0.70px;background:#e6e6e6;"></div>
<div class="a" style="left:211.00px;top:172.17px;width:129.00px;height:0.70px;background:#e6e6e6;"></div>
<div class="a" style="left:211.00px;top:184.34px;width:129.00px;height:12.17px;background:#f9f9f9;"></div>
<div class="a" style="left:211.00px;top:184.34px;width:129.00px;height:0.70px;background:#e6e6e6;"></div>
<div class="a" style="left:211.00px;top:196.51px;width:129.00px;height:0.70px;background:#e6e6e6;"></div>
<div class="a" style="left:211.00px;top:208.68px;width:129.00px;height:12.17px;background:#f9f9f9;"></div>
<div class="a" style="left:211.00px;top:208.68px;width:129.00px;height:0.70px;background:#e6e6e6;"></div>
<div class="a" style="left:211.00px;top:220.85px;width:129.00px;height:0.70px;background:#e6e6e6;"></div>
<div class="a" style="left:211.00px;top:233.02px;width:129.00px;height:12.17px;background:#f9f9f9;"></div>
<div class="a" style="left:211.00px;top:233.02px;width:129.00px;height:0.70px;background:#e6e6e6;"></div>
<div class="a" style="left:211.00px;top:245.19px;width:129.00px;height:0.70px;background:#e6e6e6;"></div>
<div class="t" style="left:212.70px;top:165.79px;font-size:6.10px;color:#4a70a0;letter-spacing:0.20px;font-weight:600">nb-fog</div>
<div class="t" style="left:212.70px;top:177.96px;font-size:6.10px;color:#4a70a0;letter-spacing:0.20px;font-weight:600">iboss-reporter</div>
<div class="t" style="left:212.70px;top:190.13px;font-size:6.10px;color:#4a70a0;letter-spacing:0.20px;font-weight:600">nbhs-unifi-nvr</div>
<div class="t" style="left:212.70px;top:202.30px;font-size:6.10px;color:#4a70a0;letter-spacing:0.20px;font-weight:600">ms-lab-cache.local</div>
<div class="t" style="left:212.70px;top:214.47px;font-size:6.10px;color:#4a70a0;letter-spacing:0.20px;font-weight:600">nb-awdb</div>
<div class="t" style="left:212.70px;top:226.64px;font-size:6.10px;color:#4a70a0;letter-spacing:0.20px;font-weight:600">elem-staff-cache</div>
<div class="t" style="left:212.70px;top:238.81px;font-size:6.10px;color:#4a70a0;letter-spacing:0.20px;font-weight:600">hs-stu-cache</div>
<svg class="a" style="left:0;top:0" width="1024" height="499"><rect x="275.00" y="164.40" width="60.00" height="5.60" fill="#eeeae6"/><line x1="275.00" y1="162.40" x2="335.00" y2="162.40" stroke="#e06060" stroke-width="0.70" stroke-opacity="1.00"/><line x1="275.00" y1="164.40" x2="335.00" y2="164.40" stroke="#5cb85c" stroke-width="0.80" stroke-opacity="1.00"/><line x1="275.00" y1="170.00" x2="335.00" y2="170.00" stroke="#a9bedb" stroke-width="0.70" stroke-opacity="1.00"/><rect x="275.00" y="178.47" width="60.00" height="3.70" fill="#eeeae6"/><line x1="275.00" y1="174.47" x2="335.00" y2="174.47" stroke="#e06060" stroke-width="0.70" stroke-opacity="1.00"/><line x1="275.00" y1="178.47" x2="335.00" y2="178.47" stroke="#5cb85c" stroke-width="0.80" stroke-opacity="1.00"/><line x1="275.00" y1="182.17" x2="335.00" y2="182.17" stroke="#a9bedb" stroke-width="0.70" stroke-opacity="1.00"/><rect x="275.00" y="190.64" width="60.00" height="3.70" fill="#eeeae6"/><line x1="275.00" y1="186.64" x2="335.00" y2="186.64" stroke="#e06060" stroke-width="0.70" stroke-opacity="1.00"/><line x1="275.00" y1="190.64" x2="335.00" y2="190.64" stroke="#5cb85c" stroke-width="0.80" stroke-opacity="1.00"/><line x1="275.00" y1="194.34" x2="335.00" y2="194.34" stroke="#a9bedb" stroke-width="0.70" stroke-opacity="1.00"/><line x1="275.00" y1="190.34" x2="335.00" y2="190.34" stroke="#f3dede" stroke-width="0.60" stroke-opacity="1.00"/><path d="M275.00 201.15 L276.02 200.78 L277.03 200.96 L278.05 200.97 L279.07 200.61 L280.08 200.51 L281.10 200.88 L282.12 200.55 L283.14 200.73 L284.15 201.08 L285.17 201.07 L286.19 200.54 L287.20 201.02 L288.22 201.12 L289.24 201.54 L290.25 200.98 L291.27 201.12 L292.29 201.04 L293.31 201.05 L294.32 201.33 L295.34 201.09 L296.36 201.25 L297.37 201.47 L298.39 201.47 L299.41 200.75 L300.42 201.01 L301.44 200.86 L302.46 201.04 L303.47 200.63 L304.49 200.72 L305.51 200.87 L306.53 201.12 L307.54 200.89 L308.56 200.79 L309.58 200.64 L310.59 200.66 L311.61 200.61 L312.63 201.15 L313.64 201.08 L314.66 201.09 L315.68 200.83 L316.69 200.96 L317.71 200.67 L318.73 200.80 L319.75 200.56 L320.76 200.75 L321.78 200.64 L322.80 200.53 L323.81 200.70 L324.83 200.13 L325.85 200.63 L326.86 200.55 L327.88 200.12 L328.90 200.40 L329.92 200.76 L330.93 200.75 L331.95 200.45 L332.97 200.60 L333.98 200.56 L335.00 200.26" stroke="#e05050" stroke-width="0.75" fill="none"/><line x1="275.00" y1="204.81" x2="335.00" y2="204.81" stroke="#5cb85c" stroke-width="0.70" stroke-opacity="1.00"/><line x1="275.00" y1="206.31" x2="335.00" y2="206.31" stroke="#cfcfcf" stroke-width="0.60" stroke-opacity="1.00"/><line x1="275.00" y1="212.98" x2="335.00" y2="212.98" stroke="#5cb85c" stroke-width="0.80" stroke-opacity="1.00"/><rect x="275.00" y="215.48" width="60.00" height="1.3" fill="#eaa8a8"/><line x1="275.00" y1="218.68" x2="335.00" y2="218.68" stroke="#d4d4d4" stroke-width="0.60" stroke-opacity="1.00"/><rect x="275.00" y="226.35" width="60.00" height="5" fill="#f7eeee"/><path d="M275.00 226.01 L276.02 225.64 L277.03 225.95 L278.05 226.07 L279.07 225.62 L280.08 225.94 L281.10 225.63 L282.12 225.51 L283.14 225.64 L284.15 225.93 L285.17 225.50 L286.19 226.46 L287.20 226.25 L288.22 226.12 L289.24 226.30 L290.25 226.27 L291.27 226.32 L292.29 226.62 L293.31 226.64 L294.32 226.16 L295.34 226.69 L296.36 226.43 L297.37 226.67 L298.39 225.97 L299.41 225.77 L300.42 225.58 L301.44 226.05 L302.46 226.10 L303.47 225.84 L304.49 225.48 L305.51 225.98 L306.53 225.94 L307.54 226.02 L308.56 226.08 L309.58 226.08 L310.59 225.92 L311.61 225.67 L312.63 225.77 L313.64 225.75 L314.66 225.93 L315.68 225.84 L316.69 225.98 L317.71 225.46 L318.73 225.51 L319.75 225.77 L320.76 225.65 L321.78 225.75 L322.80 225.59 L323.81 225.19 L324.83 225.39 L325.85 225.30 L326.86 225.28 L327.88 225.19 L328.90 225.18 L329.92 225.44 L330.93 225.65 L331.95 225.71 L332.97 225.78 L333.98 225.51 L335.00 225.11" stroke="#e05050" stroke-width="0.75" fill="none"/><line x1="275.00" y1="231.15" x2="335.00" y2="231.15" stroke="#f0d8d8" stroke-width="0.60" stroke-opacity="1.00"/><path d="M275.00 238.97 L276.02 239.10 L277.03 238.48 L278.05 239.13 L279.07 239.04 L280.08 238.51 L281.10 239.03 L282.12 239.03 L283.14 238.60 L284.15 239.15 L285.17 238.72 L286.19 238.79 L287.20 239.43 L288.22 239.45 L289.24 239.49 L290.25 239.16 L291.27 239.31 L292.29 239.07 L293.31 239.16 L294.32 239.31 L295.34 239.02 L296.36 239.21 L297.37 239.54 L298.39 239.10 L299.41 239.27 L300.42 239.00 L301.44 239.49 L302.46 238.74 L303.47 238.80 L304.49 239.19 L305.51 238.98 L306.53 239.06 L307.54 239.10 L308.56 237.72 L309.58 237.67 L310.59 237.48 L311.61 237.47 L312.63 237.51 L313.64 237.54 L314.66 237.59 L315.68 237.99 L316.69 237.52 L317.71 237.46 L318.73 237.56 L319.75 237.46 L320.76 237.95 L321.78 238.04 L322.80 237.91 L323.81 238.04 L324.83 237.75 L325.85 237.69 L326.86 237.64 L327.88 237.83 L328.90 237.54 L329.92 237.74 L330.93 237.64 L331.95 237.84 L332.97 237.98 L333.98 237.83 L335.00 237.47" stroke="#e05050" stroke-width="0.75" fill="none"/><rect x="275.00" y="241.82" width="60.00" height="1.4" fill="#c8e2c0"/></svg>
<div class="a" style="left:346.00px;top:137.50px;width:7.40px;height:108.50px;background:#f1f1f1;"></div>
<div class="a" style="left:346.50px;top:146.60px;width:6.40px;height:65.40px;background:#c1c1c1;"></div>
<div class="arr" style="left:347.70px;top:139.90px;border-bottom:2.2px solid #a3a3a3;border-left-width:2px;border-right-width:2px"></div>
<div class="arr" style="left:347.70px;top:241.00px;border-top:2.2px solid #505050;border-left-width:2px;border-right-width:2px"></div>
<div class="t" style="left:360.60px;top:146.20px;font-size:7.50px;color:#555;letter-spacing:0.35px">Top 10 interfaces polled within 10 minutes</div>
<div class="t" style="left:362.40px;top:154.66px;font-size:5.90px;color:#333;font-weight:bold">Device</div>
<div class="t" style="left:447.90px;top:154.66px;font-size:5.90px;color:#333;font-weight:bold">Interface</div>
<div class="t" style="left:502.90px;top:154.66px;font-size:5.90px;color:#333;font-weight:bold">Total traffic</div>
<div class="a" style="left:360.50px;top:160.00px;width:229.70px;height:12.17px;background:#f9f9f9;"></div>
<div class="a" style="left:360.50px;top:160.00px;width:229.70px;height:0.70px;background:#e6e6e6;"></div>
<div class="a" style="left:360.50px;top:172.17px;width:229.70px;height:0.70px;background:#e6e6e6;"></div>
<div class="a" style="left:360.50px;top:184.34px;width:229.70px;height:12.17px;background:#f9f9f9;"></div>
<div class="a" style="left:360.50px;top:184.34px;width:229.70px;height:0.70px;background:#e6e6e6;"></div>
<div class="a" style="left:360.50px;top:196.51px;width:229.70px;height:0.70px;background:#e6e6e6;"></div>
<div class="a" style="left:360.50px;top:208.68px;width:229.70px;height:12.17px;background:#f9f9f9;"></div>
<div class="a" style="left:360.50px;top:208.68px;width:229.70px;height:0.70px;background:#e6e6e6;"></div>
<div class="a" style="left:360.50px;top:220.85px;width:229.70px;height:0.70px;background:#e6e6e6;"></div>
<div class="a" style="left:360.50px;top:233.02px;width:229.70px;height:12.17px;background:#f9f9f9;"></div>
<div class="a" style="left:360.50px;top:233.02px;width:229.70px;height:0.70px;background:#e6e6e6;"></div>
<div class="a" style="left:360.50px;top:245.19px;width:229.70px;height:0.70px;background:#e6e6e6;"></div>
<div class="t" style="left:362.40px;top:165.79px;font-size:6.10px;color:#4a70a0;letter-spacing:0.20px;font-weight:600">orms-core</div>
<div class="t" style="left:447.90px;top:165.86px;font-size:5.90px;color:#4a70a0;letter-spacing:0.10px">D11</div>
<div class="t" style="left:362.40px;top:177.96px;font-size:6.10px;color:#4a70a0;letter-spacing:0.20px;font-weight:600">orms-core</div>
<div class="t" style="left:447.90px;top:178.03px;font-size:5.90px;color:#4a70a0;letter-spacing:0.10px">D12</div>
<div class="t" style="left:362.40px;top:190.13px;font-size:6.10px;color:#4a70a0;letter-spacing:0.20px;font-weight:600">nbms-core</div>
<div class="t" style="left:447.90px;top:190.20px;font-size:5.90px;color:#4a70a0;letter-spacing:0.10px">C11</div>
<div class="t" style="left:362.40px;top:202.30px;font-size:6.10px;color:#4a70a0;letter-spacing:0.20px;font-weight:600">pfs1.nbisd.txed.net</div>
<div class="t" style="left:447.90px;top:202.37px;font-size:5.90px;color:#4a70a0;letter-spacing:0.10px">igb1</div>
<div class="t" style="left:362.40px;top:214.47px;font-size:6.10px;color:#4a70a0;letter-spacing:0.20px;font-weight:600">www-sw</div>
<div class="t" style="left:447.90px;top:214.54px;font-size:5.90px;color:#4a70a0;letter-spacing:0.10px">1</div>
<div class="t" style="left:362.40px;top:226.64px;font-size:6.10px;color:#4a70a0;letter-spacing:0.20px;font-weight:600">www-sw</div>
<div class="t" style="left:447.90px;top:226.71px;font-size:5.90px;color:#4a70a0;letter-spacing:0.10px">24</div>
<div class="t" style="left:362.40px;top:238.81px;font-size:6.10px;color:#4a70a0;letter-spacing:0.20px;font-weight:600">pfs1.nbisd.txed.net</div>
<div class="t" style="left:447.90px;top:238.88px;font-size:5.90px;color:#4a70a0;letter-spacing:0.10px">igb1_vlan201</div>
<svg class="a" style="left:0;top:0" width="1024" height="499"><rect x="503.10" y="161.90" width="59.60" height="8.4" fill="#9b9be0"/><line x1="503.10" y1="162.00" x2="562.70" y2="162.00" stroke="#e06060" stroke-width="0.6"/><line x1="503.10" y1="170.30" x2="562.70" y2="170.30" stroke="#e06060" stroke-width="0.6"/><rect x="503.10" y="176.67" width="59.60" height="5.7" fill="#9b9be0"/><line x1="503.10" y1="176.67" x2="562.70" y2="176.67" stroke="#e06060" stroke-width="0.6"/><rect x="503.10" y="186.64" width="59.60" height="2" fill="#8cc56a"/><rect x="503.10" y="188.94" width="59.60" height="5.4" fill="#9b9be0"/><path d="M503.10 206.11 L503.10 206.01 L504.59 206.06 L506.08 205.91 L507.57 206.09 L509.06 205.95 L510.55 206.00 L512.04 206.09 L513.53 205.96 L515.02 206.10 L516.51 205.98 L518.00 206.09 L519.49 206.08 L520.98 205.98 L522.47 205.86 L523.96 206.07 L525.45 206.04 L526.94 205.92 L528.43 205.83 L529.92 205.94 L531.41 205.24 L532.90 204.32 L534.39 203.85 L535.88 202.85 L537.37 202.27 L538.86 201.57 L540.35 201.57 L541.84 201.52 L543.33 201.37 L544.82 201.56 L546.31 201.44 L547.80 201.42 L549.29 201.50 L550.78 201.45 L552.27 202.15 L553.76 202.72 L555.25 203.24 L556.74 203.66 L558.23 204.29 L559.72 204.89 L561.21 205.37 L562.70 205.97 L562.70 206.11 Z" fill="#8cc56a"/><line x1="503.10" y1="200.71" x2="562.70" y2="200.71" stroke="#e07070" stroke-width="0.5"/><line x1="503.10" y1="206.91" x2="562.70" y2="206.91" stroke="#e07070" stroke-width="0.5"/><line x1="503.10" y1="206.11" x2="562.70" y2="206.11" stroke="#7a9" stroke-width="0.5"/><path d="M503.10 210.88 L503.10 210.97 L504.59 211.12 L506.08 211.09 L507.57 210.95 L509.06 211.05 L510.55 211.04 L512.04 211.14 L513.53 211.10 L515.02 210.97 L516.51 211.17 L518.00 210.92 L519.49 211.01 L520.98 211.11 L522.47 210.93 L523.96 211.03 L525.45 210.89 L526.94 211.08 L528.43 211.11 L529.92 211.05 L531.41 211.89 L532.90 212.47 L534.39 213.34 L535.88 214.06 L537.37 214.80 L538.86 215.52 L540.35 215.63 L541.84 215.66 L543.33 215.52 L544.82 215.58 L546.31 215.40 L547.80 215.59 L549.29 215.57 L550.78 215.68 L552.27 215.06 L553.76 214.34 L555.25 213.81 L556.74 213.33 L558.23 212.57 L559.72 212.14 L561.21 211.49 L562.70 210.92 L562.70 210.88 Z" fill="#9b9be0"/><line x1="503.10" y1="216.18" x2="562.70" y2="216.18" stroke="#e06060" stroke-width="0.5"/><line x1="503.10" y1="210.88" x2="562.70" y2="210.88" stroke="#5aa" stroke-width="0.5"/><path d="M503.10 230.45 L503.10 230.43 L504.59 230.22 L506.08 230.41 L507.57 230.38 L509.06 230.33 L510.55 230.19 L512.04 230.43 L513.53 230.32 L515.02 230.29 L516.51 230.18 L518.00 230.20 L519.49 230.19 L520.98 230.37 L522.47 230.33 L523.96 230.34 L525.45 230.18 L526.94 230.16 L528.43 230.40 L529.92 230.40 L531.41 229.63 L532.90 228.88 L534.39 228.05 L535.88 227.27 L537.37 226.62 L538.86 225.95 L540.35 225.82 L541.84 225.84 L543.33 225.78 L544.82 225.66 L546.31 225.74 L547.80 225.80 L549.29 225.76 L550.78 225.75 L552.27 226.50 L553.76 226.81 L555.25 227.40 L556.74 227.94 L558.23 228.52 L559.72 229.21 L561.21 229.77 L562.70 230.42 L562.70 230.45 Z" fill="#8cc56a"/><line x1="503.10" y1="225.05" x2="562.70" y2="225.05" stroke="#e07070" stroke-width="0.5"/><line x1="503.10" y1="231.25" x2="562.70" y2="231.25" stroke="#e07070" stroke-width="0.5"/><line x1="503.10" y1="230.45" x2="562.70" y2="230.45" stroke="#7a9" stroke-width="0.5"/><path d="M503.10 242.62 L503.10 242.43 L504.59 242.60 L506.08 242.60 L507.57 242.56 L509.06 242.57 L510.55 242.52 L512.04 242.60 L513.53 242.62 L515.02 242.57 L516.51 242.59 L518.00 242.51 L519.49 242.61 L520.98 242.36 L522.47 242.44 L523.96 242.58 L525.45 242.54 L526.94 242.52 L528.43 242.51 L529.92 242.58 L531.41 241.62 L532.90 240.82 L534.39 240.23 L535.88 239.47 L537.37 238.84 L538.86 238.09 L540.35 238.02 L541.84 238.04 L543.33 237.87 L544.82 238.07 L546.31 238.11 L547.80 237.83 L549.29 237.96 L550.78 238.08 L552.27 238.52 L553.76 239.24 L555.25 239.65 L556.74 240.08 L558.23 240.67 L559.72 241.29 L561.21 241.98 L562.70 242.51 L562.70 242.62 Z" fill="#8cc56a"/><line x1="503.10" y1="237.22" x2="562.70" y2="237.22" stroke="#e07070" stroke-width="0.5"/><line x1="503.10" y1="243.42" x2="562.70" y2="243.42" stroke="#e07070" stroke-width="0.5"/><line x1="503.10" y1="242.62" x2="562.70" y2="242.62" stroke="#7a9" stroke-width="0.5"/></svg>
<div class="a" style="left:595.40px;top:137.50px;width:7.40px;height:108.50px;background:#f1f1f1;"></div>
<div class="a" style="left:595.90px;top:146.60px;width:6.40px;height:65.40px;background:#c1c1c1;"></div>
<div class="arr" style="left:597.10px;top:139.90px;border-bottom:2.2px solid #a3a3a3;border-left-width:2px;border-right-width:2px"></div>
<div class="arr" style="left:597.10px;top:241.00px;border-top:2.2px solid #505050;border-left-width:2px;border-right-width:2px"></div>
<div class="a" style="left:349.40px;top:267.50px;width:16.10px;height:13.30px;background:#f2f2f2;border:0.7px solid #dcdcdc;border-radius:1.5px 0 0 1.5px"></div>
<div class="a" style="left:365.50px;top:267.50px;width:55.30px;height:13.30px;background:#fff;border:0.7px solid #d8d8d8;border-left:none;border-radius:0 1.5px 1.5px 0"></div>
<svg class="a" style="left:354.60px;top:271.50px" width="6" height="6" viewBox="0 0 6 6"><circle cx="2.4" cy="2.4" r="1.7" fill="none" stroke="#444" stroke-width="0.9"/><path d="M3.6 3.6 L5.4 5.4" stroke="#444" stroke-width="1.1"/></svg>
<div class="t" style="left:369.70px;top:274.79px;font-size:6.10px;color:#a0a0a0">Search</div>
<div class="a" style="left:429.00px;top:268.20px;width:58.70px;height:13.30px;background:#fff;border:0.7px solid #d4d4d4;border-radius:1.5px"></div>
<div class="a" style="left:444.40px;top:268.20px;width:0.70px;height:13.30px;background:#ddd;"></div>
<div class="a" style="left:466.60px;top:268.20px;width:0.70px;height:13.30px;background:#ddd;"></div>
<svg class="a" style="left:433.90px;top:271.80px" width="6" height="6" viewBox="0 0 6 6"><path d="M5 2.3 A2.2 2.2 0 1 0 5.1 3.8" fill="none" stroke="#333" stroke-width="0.9"/><path d="M5.6 0.6 L5.6 2.9 L3.4 2.6 Z" fill="#333"/></svg>
<div class="t" style="left:449.80px;top:275.36px;font-size:5.90px;color:#555">50</div>
<div class="arr" style="left:459.00px;top:274.60px;border-top:1.6px solid #333;border-left-width:1.3px;border-right-width:1.3px"></div>
<svg class="a" style="left:472.00px;top:272.40px" width="6" height="5" viewBox="0 0 6 5"><rect x="0" y="0" width="1.4" height="1.3" fill="#333"/><rect x="1.9" y="0" width="4.1" height="1.3" fill="#333"/><rect x="0" y="1.85" width="1.4" height="1.3" fill="#333"/><rect x="1.9" y="1.85" width="4.1" height="1.3" fill="#333"/><rect x="0" y="3.7" width="1.4" height="1.3" fill="#333"/><rect x="1.9" y="3.7" width="4.1" height="1.3" fill="#333"/></svg>
<div class="arr" style="left:479.50px;top:274.60px;border-top:1.6px solid #333;border-left-width:1.3px;border-right-width:1.3px"></div>
<div class="t" style="left:14.00px;top:287.09px;font-size:6.10px;color:#333;font-weight:bold">Status</div>
<div class="t" style="left:65.50px;top:287.09px;font-size:6.10px;color:#333;font-weight:bold">Rule</div>
<div class="t" style="left:128.70px;top:287.09px;font-size:6.10px;color:#333;font-weight:bold">Hostname</div>
<div class="t" style="left:200.50px;top:287.09px;font-size:6.10px;color:#333;font-weight:bold">Timestamp</div>
<div class="t" style="left:277.20px;top:287.09px;font-size:6.10px;color:#333;font-weight:bold">Severity</div>
<div class="t" style="left:339.70px;top:287.09px;font-size:6.10px;color:#333;font-weight:bold">Acknowledge</div>
<div class="t" style="left:428.00px;top:287.09px;font-size:6.10px;color:#333;font-weight:bold">Procedure</div>
<div class="a" style="left:12.00px;top:292.20px;width:487.30px;height:0.70px;background:#e4e4e4;"></div>
<div class="t" style="left:232.40px;top:298.46px;font-size:5.90px;color:#333">No results found!</div>
<div class="a" style="left:24.20px;top:303.50px;width:68.50px;height:12.80px;background:#fff;border:0.7px solid #e0e0e0;border-radius:1.5px"></div>
<div class="a" style="left:37.50px;top:303.50px;width:0.70px;height:12.80px;background:#e6e6e6;"></div>
<div class="a" style="left:51.60px;top:303.50px;width:0.70px;height:12.80px;background:#e6e6e6;"></div>
<div class="a" style="left:65.20px;top:303.50px;width:0.70px;height:12.80px;background:#e6e6e6;"></div>
<div class="a" style="left:79.40px;top:303.50px;width:0.70px;height:12.80px;background:#e6e6e6;"></div>
<div class="t" style="left:30.40px;top:309.86px;font-size:5.60px;color:#999;transform:translateX(-50%)">&#171;</div>
<div class="t" style="left:44.00px;top:309.86px;font-size:5.60px;color:#999;transform:translateX(-50%)">&#8249;</div>
<div class="t" style="left:58.00px;top:309.86px;font-size:5.60px;color:#999;transform:translateX(-50%)">1</div>
<div class="t" style="left:71.80px;top:309.86px;font-size:5.60px;color:#999;transform:translateX(-50%)">&#8250;</div>
<div class="t" style="left:85.60px;top:309.86px;font-size:5.60px;color:#999;transform:translateX(-50%)">&#187;</div>
<div class="t" style="left:415.00px;top:306.79px;font-size:6.10px;color:#444">Showing 0 to 0 of 0 entries</div>
<div class="a" style="left:838.60px;top:267.30px;width:16.10px;height:13.30px;background:#f2f2f2;border:0.7px solid #dcdcdc;border-radius:1.5px 0 0 1.5px"></div>
<div class="a" style="left:854.70px;top:267.30px;width:55.30px;height:13.30px;background:#fff;border:0.7px solid #d8d8d8;border-left:none;border-radius:0 1.5px 1.5px 0"></div>
<svg class="a" style="left:843.80px;top:271.30px" width="6" height="6" viewBox="0 0 6 6"><circle cx="2.4" cy="2.4" r="1.7" fill="none" stroke="#444" stroke-width="0.9"/><path d="M3.6 3.6 L5.4 5.4" stroke="#444" stroke-width="1.1"/></svg>
<div class="t" style="left:858.90px;top:274.59px;font-size:6.10px;color:#a0a0a0">Search</div>
<div class="a" style="left:918.60px;top:268.00px;width:58.70px;height:13.30px;background:#fff;border:0.7px solid #d4d4d4;border-radius:1.5px"></div>
<div class="a" style="left:934.00px;top:268.00px;width:0.70px;height:13.30px;background:#ddd;"></div>
<div class="a" style="left:956.20px;top:268.00px;width:0.70px;height:13.30px;background:#ddd;"></div>
<svg class="a" style="left:923.50px;top:271.60px" width="6" height="6" viewBox="0 0 6 6"><path d="M5 2.3 A2.2 2.2 0 1 0 5.1 3.8" fill="none" stroke="#333" stroke-width="0.9"/><path d="M5.6 0.6 L5.6 2.9 L3.4 2.6 Z" fill="#333"/></svg>
<div class="t" style="left:939.40px;top:275.16px;font-size:5.90px;color:#555">50</div>
<div class="arr" style="left:948.60px;top:274.40px;border-top:1.6px solid #333;border-left-width:1.3px;border-right-width:1.3px"></div>
<svg class="a" style="left:961.60px;top:272.20px" width="6" height="5" viewBox="0 0 6 5"><rect x="0" y="0" width="1.4" height="1.3" fill="#333"/><rect x="1.9" y="0" width="4.1" height="1.3" fill="#333"/><rect x="0" y="1.85" width="1.4" height="1.3" fill="#333"/><rect x="1.9" y="1.85" width="4.1" height="1.3" fill="#333"/><rect x="0" y="3.7" width="1.4" height="1.3" fill="#333"/><rect x="1.9" y="3.7" width="4.1" height="1.3" fill="#333"/></svg>
<div class="arr" style="left:969.10px;top:274.40px;border-top:1.6px solid #333;border-left-width:1.3px;border-right-width:1.3px"></div>
<div class="t" style="left:522.40px;top:286.79px;font-size:6.10px;color:#333;font-weight:bold">Datetime</div>
<div class="t" style="left:570.00px;top:286.79px;font-size:6.10px;color:#333;font-weight:bold">Hostname</div>
<div class="t" style="left:629.10px;top:286.79px;font-size:6.10px;color:#333;font-weight:bold">Type</div>
<div class="t" style="left:658.30px;top:286.79px;font-size:6.10px;color:#333;font-weight:bold">Message</div>
<div class="t" style="left:967.20px;top:286.79px;font-size:6.10px;color:#333;font-weight:bold">User</div>
<svg class="a" style="left:562px;top:285px" width="4.5" height="3" viewBox="0 0 4.5 3"><path d="M0.4 0.4 L2.25 2.4 L4.1 0.4" stroke="#333" stroke-width="1" fill="none"/></svg>
<div class="a" style="left:507.5px;top:263px;width:487px;height:228.8px;overflow:hidden"><div class="a" style="left:-507.5px;top:-263px;width:1024px;height:499px">
<div class="a" style="left:510.40px;top:292.90px;width:478.60px;height:17.85px;background:#f9f9f9;"></div>
<svg class="a" style="left:512px;top:295.10px" width="5" height="5.8" viewBox="0 0 5 5.8"><path d="M0 0 L5 0 L5 5.8 L2.5 4 L0 5.8 Z" fill="#d9534f"/></svg>
<div class="t" style="left:522.40px;top:297.99px;font-size:6.10px;color:#555">2017-11-08</div>
<div class="t" style="left:522.40px;top:305.29px;font-size:6.10px;color:#555">19:32:59</div>
<div class="t" style="left:570.00px;top:298.06px;font-size:5.90px;color:#4a70a0;font-weight:bold;letter-spacing:0.22px">nbms-idf-704-</div>
<div class="t" style="left:570.00px;top:305.36px;font-size:5.90px;color:#4a70a0;font-weight:bold;letter-spacing:0.22px">wlan</div>
<div class="t" style="left:629.00px;top:298.09px;font-size:5.80px;color:#555">discovery</div>
<div class="t" style="left:658.30px;top:298.02px;font-size:6.00px;color:#555">CDP discovery of CN23D323XT (172.16.247.72) failed - Could not connect to CN23D323XT, please check the</div>
<div class="t" style="left:658.30px;top:305.32px;font-size:6.00px;color:#555">snmp details and snmp reachability</div>
<div class="a" style="left:510.40px;top:310.75px;width:478.60px;height:0.70px;background:#e8e8e8;"></div>
<svg class="a" style="left:512px;top:313.65px" width="5" height="5.8" viewBox="0 0 5 5.8"><path d="M0 0 L5 0 L5 5.8 L2.5 4 L0 5.8 Z" fill="#f5d327"/></svg>
<div class="t" style="left:522.40px;top:316.54px;font-size:6.10px;color:#555">2017-11-08</div>
<div class="t" style="left:522.40px;top:323.84px;font-size:6.10px;color:#555">19:31:58</div>
<div class="t" style="left:570.00px;top:316.61px;font-size:5.90px;color:#4a70a0;font-weight:bold;letter-spacing:0.22px">lse-cafe-lan-2</div>
<div class="t" style="left:629.10px;top:316.61px;font-size:5.90px;color:#4a59a8;font-weight:bold;letter-spacing:0.20px">36</div>
<div class="t" style="left:658.30px;top:316.57px;font-size:6.00px;color:#555">ifHighSpeed: 10 -&gt; 1000</div>
<div class="a" style="left:510.40px;top:330.00px;width:478.60px;height:17.85px;background:#f9f9f9;"></div>
<div class="a" style="left:510.40px;top:329.30px;width:478.60px;height:0.70px;background:#e8e8e8;"></div>
<svg class="a" style="left:512px;top:332.20px" width="5" height="5.8" viewBox="0 0 5 5.8"><path d="M0 0 L5 0 L5 5.8 L2.5 4 L0 5.8 Z" fill="#f5d327"/></svg>
<div class="t" style="left:522.40px;top:335.09px;font-size:6.10px;color:#555">2017-11-08</div>
<div class="t" style="left:522.40px;top:342.39px;font-size:6.10px;color:#555">19:31:58</div>
<div class="t" style="left:570.00px;top:335.16px;font-size:5.90px;color:#4a70a0;font-weight:bold;letter-spacing:0.22px">lse-cafe-lan-2</div>
<div class="t" style="left:629.10px;top:335.16px;font-size:5.90px;color:#4a59a8;font-weight:bold;letter-spacing:0.20px">36</div>
<div class="t" style="left:658.30px;top:335.12px;font-size:6.00px;color:#555">ifSpeed: 10000000 -&gt; 1000000000</div>
<div class="a" style="left:510.40px;top:347.85px;width:478.60px;height:0.70px;background:#e8e8e8;"></div>
<svg class="a" style="left:512px;top:350.75px" width="5" height="5.8" viewBox="0 0 5 5.8"><path d="M0 0 L5 0 L5 5.8 L2.5 4 L0 5.8 Z" fill="#f5d327"/></svg>
<div class="t" style="left:522.40px;top:353.64px;font-size:6.10px;color:#555">2017-11-08</div>
<div class="t" style="left:522.40px;top:360.94px;font-size:6.10px;color:#555">19:31:30</div>
<div class="t" style="left:570.00px;top:353.71px;font-size:5.90px;color:#4a70a0;font-weight:bold;letter-spacing:0.22px">ss-idf-wlan</div>
<div class="t" style="left:629.10px;top:353.71px;font-size:5.90px;color:#4a59a8;font-weight:bold;letter-spacing:0.20px">16</div>
<div class="t" style="left:658.30px;top:353.67px;font-size:6.00px;color:#555">ifOperStatus: down -&gt; up</div>
<div class="a" style="left:510.40px;top:367.10px;width:478.60px;height:17.85px;background:#f9f9f9;"></div>
<div class="a" style="left:510.40px;top:366.40px;width:478.60px;height:0.70px;background:#e8e8e8;"></div>
<svg class="a" style="left:512px;top:369.30px" width="5" height="5.8" viewBox="0 0 5 5.8"><path d="M0 0 L5 0 L5 5.8 L2.5 4 L0 5.8 Z" fill="#f5d327"/></svg>
<div class="t" style="left:522.40px;top:372.19px;font-size:6.10px;color:#555">2017-11-08</div>
<div class="t" style="left:522.40px;top:379.49px;font-size:6.10px;color:#555">19:31:23</div>
<div class="t" style="left:570.00px;top:372.26px;font-size:5.90px;color:#4a70a0;font-weight:bold;letter-spacing:0.22px">ec-noc-lan-2-top</div>
<div class="t" style="left:629.10px;top:372.26px;font-size:5.90px;color:#4a59a8;font-weight:bold;letter-spacing:0.20px">25</div>
<div class="t" style="left:658.30px;top:372.22px;font-size:6.00px;color:#555">ifHighSpeed: 10 -&gt; 1000</div>
<div class="a" style="left:510.40px;top:384.95px;width:478.60px;height:0.70px;background:#e8e8e8;"></div>
<svg class="a" style="left:512px;top:387.85px" width="5" height="5.8" viewBox="0 0 5 5.8"><path d="M0 0 L5 0 L5 5.8 L2.5 4 L0 5.8 Z" fill="#f5d327"/></svg>
<div class="t" style="left:522.40px;top:390.74px;font-size:6.10px;color:#555">2017-11-08</div>
<div class="t" style="left:522.40px;top:398.04px;font-size:6.10px;color:#555">19:31:23</div>
<div class="t" style="left:570.00px;top:390.81px;font-size:5.90px;color:#4a70a0;font-weight:bold;letter-spacing:0.22px">ec-noc-lan-2-top</div>
<div class="t" style="left:629.10px;top:390.81px;font-size:5.90px;color:#4a59a8;font-weight:bold;letter-spacing:0.20px">25</div>
<div class="t" style="left:658.30px;top:390.77px;font-size:6.00px;color:#555">ifSpeed: 10000000 -&gt; 1000000000</div>
<div class="a" style="left:510.40px;top:404.20px;width:478.60px;height:17.85px;background:#f9f9f9;"></div>
<div class="a" style="left:510.40px;top:403.50px;width:478.60px;height:0.70px;background:#e8e8e8;"></div>
<svg class="a" style="left:512px;top:406.40px" width="5" height="5.8" viewBox="0 0 5 5.8"><path d="M0 0 L5 0 L5 5.8 L2.5 4 L0 5.8 Z" fill="#f5d327"/></svg>
<div class="t" style="left:522.40px;top:409.29px;font-size:6.10px;color:#555">2017-11-08</div>
<div class="t" style="left:522.40px;top:416.59px;font-size:6.10px;color:#555">19:31:18</div>
<div class="t" style="left:570.00px;top:409.36px;font-size:5.90px;color:#4a70a0;font-weight:bold;letter-spacing:0.22px">ngc-411-lan1-</div>
<div class="t" style="left:570.00px;top:416.66px;font-size:5.90px;color:#4a70a0;font-weight:bold;letter-spacing:0.22px">faculty</div>
<div class="t" style="left:629.10px;top:409.36px;font-size:5.90px;color:#4a59a8;font-weight:bold;letter-spacing:0.20px">42</div>
<div class="t" style="left:658.30px;top:409.32px;font-size:6.00px;color:#555">ifHighSpeed: 1000 -&gt; 10</div>
<div class="a" style="left:510.40px;top:422.05px;width:478.60px;height:0.70px;background:#e8e8e8;"></div>
<svg class="a" style="left:512px;top:424.95px" width="5" height="5.8" viewBox="0 0 5 5.8"><path d="M0 0 L5 0 L5 5.8 L2.5 4 L0 5.8 Z" fill="#f5d327"/></svg>
<div class="t" style="left:522.40px;top:427.84px;font-size:6.10px;color:#555">2017-11-08</div>
<div class="t" style="left:522.40px;top:435.14px;font-size:6.10px;color:#555">19:31:18</div>
<div class="t" style="left:570.00px;top:427.91px;font-size:5.90px;color:#4a70a0;font-weight:bold;letter-spacing:0.22px">ngc-411-lan1-</div>
<div class="t" style="left:570.00px;top:435.21px;font-size:5.90px;color:#4a70a0;font-weight:bold;letter-spacing:0.22px">faculty</div>
<div class="t" style="left:629.10px;top:427.91px;font-size:5.90px;color:#4a59a8;font-weight:bold;letter-spacing:0.20px">42</div>
<div class="t" style="left:658.30px;top:427.87px;font-size:6.00px;color:#555">ifSpeed: 1000000000 -&gt; 10000000</div>
<div class="a" style="left:510.40px;top:441.30px;width:478.60px;height:17.85px;background:#f9f9f9;"></div>
<div class="a" style="left:510.40px;top:440.60px;width:478.60px;height:0.70px;background:#e8e8e8;"></div>
<svg class="a" style="left:512px;top:443.50px" width="5" height="5.8" viewBox="0 0 5 5.8"><path d="M0 0 L5 0 L5 5.8 L2.5 4 L0 5.8 Z" fill="#f5d327"/></svg>
<div class="t" style="left:522.40px;top:446.39px;font-size:6.10px;color:#555">2017-11-08</div>
<div class="t" style="left:522.40px;top:453.69px;font-size:6.10px;color:#555">19:31:17</div>
<div class="t" style="left:570.00px;top:446.46px;font-size:5.90px;color:#4a70a0;font-weight:bold;letter-spacing:0.22px">kre-mdf-lan-2-</div>
<div class="t" style="left:570.00px;top:453.76px;font-size:5.90px;color:#4a70a0;font-weight:bold;letter-spacing:0.22px">bottom</div>
<div class="t" style="left:629.10px;top:446.46px;font-size:5.90px;color:#4a59a8;font-weight:bold;letter-spacing:0.20px">19</div>
<div class="t" style="left:658.30px;top:446.42px;font-size:6.00px;color:#555">ifHighSpeed: 100 -&gt; 1000</div>
<div class="a" style="left:510.40px;top:459.15px;width:478.60px;height:0.70px;background:#e8e8e8;"></div>
<svg class="a" style="left:512px;top:462.05px" width="5" height="5.8" viewBox="0 0 5 5.8"><path d="M0 0 L5 0 L5 5.8 L2.5 4 L0 5.8 Z" fill="#f5d327"/></svg>
<div class="t" style="left:522.40px;top:464.94px;font-size:6.10px;color:#555">2017-11-08</div>
<div class="t" style="left:522.40px;top:472.24px;font-size:6.10px;color:#555">19:31:17</div>
<div class="t" style="left:570.00px;top:465.01px;font-size:5.90px;color:#4a70a0;font-weight:bold;letter-spacing:0.22px">kre-mdf-lan-2-</div>
<div class="t" style="left:570.00px;top:472.31px;font-size:5.90px;color:#4a70a0;font-weight:bold;letter-spacing:0.22px">bottom</div>
<div class="t" style="left:629.10px;top:465.01px;font-size:5.90px;color:#4a59a8;font-weight:bold;letter-spacing:0.20px">19</div>
<div class="t" style="left:658.30px;top:464.97px;font-size:6.00px;color:#555">ifSpeed: 100000000 -&gt; 1000000000</div>
<div class="a" style="left:510.40px;top:478.40px;width:478.60px;height:17.85px;background:#f9f9f9;"></div>
<div class="a" style="left:510.40px;top:477.70px;width:478.60px;height:0.70px;background:#e8e8e8;"></div>
<svg class="a" style="left:512px;top:480.60px" width="5" height="5.8" viewBox="0 0 5 5.8"><path d="M0 0 L5 0 L5 5.8 L2.5 4 L0 5.8 Z" fill="#f5d327"/></svg>
<div class="t" style="left:522.40px;top:483.49px;font-size:6.10px;color:#555">2017-11-08</div>
<div class="t" style="left:522.40px;top:490.79px;font-size:6.10px;color:#555">19:31:17</div>
<div class="t" style="left:570.00px;top:483.56px;font-size:5.90px;color:#4a70a0;font-weight:bold;letter-spacing:0.22px">ngc-304-lan1-</div>
<div class="t" style="left:570.00px;top:490.86px;font-size:5.90px;color:#4a70a0;font-weight:bold;letter-spacing:0.22px">student</div>
<div class="t" style="left:629.10px;top:483.56px;font-size:5.90px;color:#d9534f;font-weight:bold;letter-spacing:0.20px">23</div>
<div class="t" style="left:658.30px;top:483.52px;font-size:6.00px;color:#555">ifHighSpeed: 100 -&gt; 1000</div>
</div></div>
<div class="a" style="left:994.50px;top:263.00px;width:8.00px;height:229.00px;background:#f1f1f1;"></div>
<div class="a" style="left:995.00px;top:272.60px;width:7.00px;height:72.20px;background:#c1c1c1;"></div>
<div class="arr" style="left:996.50px;top:265.40px;border-bottom:2.2px solid #a3a3a3;border-left-width:2px;border-right-width:2px"></div>
<svg class="a" style="left:0;top:0" width="1024" height="499"><defs><clipPath id="mc"><rect x="610" y="57.6" width="378.4" height="188.4"/></clipPath></defs><g clip-path="url(#mc)"><rect x="610" y="57.6" width="378.4" height="188.4" fill="#f3f1ec"/><path d="M684.0 60.0 L700.0 58.0 L706.0 64.0 L702.0 74.0 L694.0 78.0 L690.0 70.0 L684.0 72.0 Z" fill="#dddddd" /><path d="M642.0 94.0 L660.0 84.0 L672.0 90.0 L666.0 96.0 L674.0 104.0 L650.0 110.0 L646.0 100.0 Z" fill="#dddddd" /><path d="M610.0 136.0 L628.0 134.0 L640.0 146.0 L636.0 158.0 L620.0 164.0 L610.0 160.0 Z" fill="#dddddd" /><path d="M632.0 162.0 L642.0 158.0 L646.0 176.0 L638.0 180.0 L632.0 170.0 Z" fill="#dddddd" /><path d="M614.0 216.0 L640.0 210.0 L654.0 222.0 L650.0 236.0 L626.0 240.0 L614.0 234.0 Z" fill="#dddddd" /><path d="M710.0 158.0 L730.0 150.0 L758.0 166.0 L756.0 190.0 L738.0 196.0 L714.0 186.0 Z" fill="#dddddd" /><path d="M782.0 182.0 L795.0 172.0 L801.0 186.0 L792.0 198.0 L780.0 196.0 Z" fill="#d9d9d9" /><path d="M800.0 178.0 L815.0 172.0 L830.0 180.0 L840.0 200.0 L835.0 212.0 L820.0 216.0 L808.0 205.0 L803.0 192.0 Z" fill="#d3d3d3" /><path d="M815.0 160.0 L838.0 158.0 L842.0 172.0 L826.0 176.0 Z" fill="#dedede" /><path d="M770.0 190.0 L780.0 188.0 L782.0 200.0 L772.0 202.0 Z" fill="#d9d9d9" /><path d="M845.0 130.0 L858.0 124.0 L866.0 134.0 L856.0 146.0 Z" fill="#dedede" /><path d="M872.0 120.0 L880.0 116.0 L886.0 124.0 L878.0 130.0 Z" fill="#e0e0e0" /><path d="M878.0 150.0 L890.0 144.0 L896.0 156.0 L884.0 162.0 Z" fill="#dcdcdc" /><path d="M850.0 172.0 L860.0 168.0 L866.0 180.0 L856.0 186.0 Z" fill="#dcdcdc" /><path d="M790.0 128.0 L806.0 124.0 L812.0 136.0 L796.0 140.0 Z" fill="#dfeee6" /><path d="M812.0 100.0 L826.0 96.0 L834.0 106.0 L820.0 110.0 Z" fill="#e2e2e2" /><path d="M812.4 120.8 L809.7 124.8" fill="none" stroke="#cfcbc4" stroke-width="0.3" stroke-linejoin="round" stroke-linecap="round" /><path d="M785.3 106.7 L783.0 113.6" fill="none" stroke="#cfcbc4" stroke-width="0.3" stroke-linejoin="round" stroke-linecap="round" /><path d="M842.0 107.1 L840.6 111.5" fill="none" stroke="#cfcbc4" stroke-width="0.3" stroke-linejoin="round" stroke-linecap="round" /><path d="M844.2 169.0 L853.4 171.8" fill="none" stroke="#cfcbc4" stroke-width="0.3" stroke-linejoin="round" stroke-linecap="round" /><path d="M858.1 122.4 L855.5 130.2" fill="none" stroke="#cfcbc4" stroke-width="0.3" stroke-linejoin="round" stroke-linecap="round" /><path d="M857.0 138.0 L862.6 141.8" fill="none" stroke="#cfcbc4" stroke-width="0.3" stroke-linejoin="round" stroke-linecap="round" /><path d="M812.3 129.4 L817.5 133.0" fill="none" stroke="#cfcbc4" stroke-width="0.3" stroke-linejoin="round" stroke-linecap="round" /><path d="M808.3 211.7 L813.8 215.5" fill="none" stroke="#cfcbc4" stroke-width="0.3" stroke-linejoin="round" stroke-linecap="round" /><path d="M862.0 171.1 L866.9 174.4" fill="none" stroke="#cfcbc4" stroke-width="0.3" stroke-linejoin="round" stroke-linecap="round" /><path d="M793.6 210.2 L788.5 217.6" fill="none" stroke="#cfcbc4" stroke-width="0.3" stroke-linejoin="round" stroke-linecap="round" /><path d="M816.2 210.7 L810.2 219.4" fill="none" stroke="#cfcbc4" stroke-width="0.3" stroke-linejoin="round" stroke-linecap="round" /><path d="M838.0 100.6 L841.6 103.1" fill="none" stroke="#cfcbc4" stroke-width="0.3" stroke-linejoin="round" stroke-linecap="round" /><path d="M840.4 148.0 L837.8 155.6" fill="none" stroke="#cfcbc4" stroke-width="0.3" stroke-linejoin="round" stroke-linecap="round" /><path d="M786.3 172.6 L784.5 177.9" fill="none" stroke="#cfcbc4" stroke-width="0.3" stroke-linejoin="round" stroke-linecap="round" /><path d="M824.3 120.9 L831.0 125.5" fill="none" stroke="#cfcbc4" stroke-width="0.3" stroke-linejoin="round" stroke-linecap="round" /><path d="M816.3 163.6 L813.0 168.5" fill="none" stroke="#cfcbc4" stroke-width="0.3" stroke-linejoin="round" stroke-linecap="round" /><path d="M841.5 210.4 L836.5 217.7" fill="none" stroke="#cfcbc4" stroke-width="0.3" stroke-linejoin="round" stroke-linecap="round" /><path d="M843.8 192.6 L839.4 199.1" fill="none" stroke="#cfcbc4" stroke-width="0.3" stroke-linejoin="round" stroke-linecap="round" /><path d="M812.8 108.0 L809.8 112.4" fill="none" stroke="#cfcbc4" stroke-width="0.3" stroke-linejoin="round" stroke-linecap="round" /><path d="M871.1 146.8 L865.4 155.1" fill="none" stroke="#cfcbc4" stroke-width="0.3" stroke-linejoin="round" stroke-linecap="round" /><path d="M803.9 157.9 L798.4 166.0" fill="none" stroke="#cfcbc4" stroke-width="0.3" stroke-linejoin="round" stroke-linecap="round" /><path d="M783.7 198.0 L779.0 204.9" fill="none" stroke="#cfcbc4" stroke-width="0.3" stroke-linejoin="round" stroke-linecap="round" /><path d="M822.1 97.4 L826.8 100.6" fill="none" stroke="#cfcbc4" stroke-width="0.3" stroke-linejoin="round" stroke-linecap="round" /><path d="M809.7 137.8 L807.7 143.5" fill="none" stroke="#cfcbc4" stroke-width="0.3" stroke-linejoin="round" stroke-linecap="round" /><path d="M853.4 162.3 L847.7 170.5" fill="none" stroke="#cfcbc4" stroke-width="0.3" stroke-linejoin="round" stroke-linecap="round" /><path d="M864.3 185.5 L861.3 194.2" fill="none" stroke="#cfcbc4" stroke-width="0.3" stroke-linejoin="round" stroke-linecap="round" /><path d="M795.0 201.8 L790.4 208.6" fill="none" stroke="#cfcbc4" stroke-width="0.3" stroke-linejoin="round" stroke-linecap="round" /><path d="M803.1 204.4 L807.6 205.8" fill="none" stroke="#cfcbc4" stroke-width="0.3" stroke-linejoin="round" stroke-linecap="round" /><path d="M852.9 179.6 L849.5 184.6" fill="none" stroke="#cfcbc4" stroke-width="0.3" stroke-linejoin="round" stroke-linecap="round" /><path d="M815.8 214.9 L813.8 221.0" fill="none" stroke="#cfcbc4" stroke-width="0.3" stroke-linejoin="round" stroke-linecap="round" /><path d="M862.8 104.6 L872.6 107.7" fill="none" stroke="#cfcbc4" stroke-width="0.3" stroke-linejoin="round" stroke-linecap="round" /><path d="M859.5 193.7 L853.6 202.4" fill="none" stroke="#cfcbc4" stroke-width="0.3" stroke-linejoin="round" stroke-linecap="round" /><path d="M797.7 205.3 L794.2 215.5" fill="none" stroke="#cfcbc4" stroke-width="0.3" stroke-linejoin="round" stroke-linecap="round" /><path d="M854.6 115.8 L851.9 123.7" fill="none" stroke="#cfcbc4" stroke-width="0.3" stroke-linejoin="round" stroke-linecap="round" /><path d="M832.4 218.4 L831.0 222.7" fill="none" stroke="#cfcbc4" stroke-width="0.3" stroke-linejoin="round" stroke-linecap="round" /><path d="M805.7 120.5 L812.6 125.2" fill="none" stroke="#cfcbc4" stroke-width="0.3" stroke-linejoin="round" stroke-linecap="round" /><path d="M841.4 215.6 L835.7 224.0" fill="none" stroke="#cfcbc4" stroke-width="0.3" stroke-linejoin="round" stroke-linecap="round" /><path d="M838.8 193.9 L846.7 196.3" fill="none" stroke="#cfcbc4" stroke-width="0.3" stroke-linejoin="round" stroke-linecap="round" /><path d="M846.3 203.4 L842.8 208.6" fill="none" stroke="#cfcbc4" stroke-width="0.3" stroke-linejoin="round" stroke-linecap="round" /><path d="M858.2 177.4 L861.4 179.6" fill="none" stroke="#cfcbc4" stroke-width="0.3" stroke-linejoin="round" stroke-linecap="round" /><path d="M825.2 96.2 L835.3 99.3" fill="none" stroke="#cfcbc4" stroke-width="0.3" stroke-linejoin="round" stroke-linecap="round" /><path d="M869.8 218.8 L866.4 228.7" fill="none" stroke="#cfcbc4" stroke-width="0.3" stroke-linejoin="round" stroke-linecap="round" /><path d="M798.4 201.6 L796.2 208.0" fill="none" stroke="#cfcbc4" stroke-width="0.3" stroke-linejoin="round" stroke-linecap="round" /><path d="M825.1 172.9 L829.5 174.2" fill="none" stroke="#cfcbc4" stroke-width="0.3" stroke-linejoin="round" stroke-linecap="round" /><path d="M774.1 109.0 L777.5 110.1" fill="none" stroke="#cfcbc4" stroke-width="0.3" stroke-linejoin="round" stroke-linecap="round" /><path d="M775.2 103.2 L780.9 105.0" fill="none" stroke="#cfcbc4" stroke-width="0.3" stroke-linejoin="round" stroke-linecap="round" /><path d="M827.7 213.6 L832.1 214.9" fill="none" stroke="#cfcbc4" stroke-width="0.3" stroke-linejoin="round" stroke-linecap="round" /><path d="M782.0 203.1 L780.0 209.0" fill="none" stroke="#cfcbc4" stroke-width="0.3" stroke-linejoin="round" stroke-linecap="round" /><path d="M789.2 153.1 L783.6 161.4" fill="none" stroke="#cfcbc4" stroke-width="0.3" stroke-linejoin="round" stroke-linecap="round" /><path d="M862.2 203.6 L860.1 209.6" fill="none" stroke="#cfcbc4" stroke-width="0.3" stroke-linejoin="round" stroke-linecap="round" /><path d="M867.4 118.2 L871.9 119.6" fill="none" stroke="#cfcbc4" stroke-width="0.3" stroke-linejoin="round" stroke-linecap="round" /><path d="M818.3 200.7 L816.9 204.9" fill="none" stroke="#cfcbc4" stroke-width="0.3" stroke-linejoin="round" stroke-linecap="round" /><path d="M863.3 219.8 L860.6 227.6" fill="none" stroke="#cfcbc4" stroke-width="0.3" stroke-linejoin="round" stroke-linecap="round" /><path d="M870.0 161.9 L867.7 168.7" fill="none" stroke="#cfcbc4" stroke-width="0.3" stroke-linejoin="round" stroke-linecap="round" /><path d="M783.5 194.7 L788.2 197.9" fill="none" stroke="#cfcbc4" stroke-width="0.3" stroke-linejoin="round" stroke-linecap="round" /><path d="M845.4 166.6 L853.1 169.0" fill="none" stroke="#cfcbc4" stroke-width="0.3" stroke-linejoin="round" stroke-linecap="round" /><path d="M830.3 147.3 L828.0 150.7" fill="none" stroke="#cfcbc4" stroke-width="0.3" stroke-linejoin="round" stroke-linecap="round" /><path d="M864.0 145.3 L868.7 148.5" fill="none" stroke="#cfcbc4" stroke-width="0.3" stroke-linejoin="round" stroke-linecap="round" /><path d="M795.0 189.7 L789.5 197.7" fill="none" stroke="#cfcbc4" stroke-width="0.3" stroke-linejoin="round" stroke-linecap="round" /><path d="M777.8 192.1 L772.4 199.9" fill="none" stroke="#cfcbc4" stroke-width="0.3" stroke-linejoin="round" stroke-linecap="round" /><path d="M783.7 117.3 L791.6 119.7" fill="none" stroke="#cfcbc4" stroke-width="0.3" stroke-linejoin="round" stroke-linecap="round" /><path d="M779.1 209.9 L774.2 217.0" fill="none" stroke="#cfcbc4" stroke-width="0.3" stroke-linejoin="round" stroke-linecap="round" /><path d="M837.3 197.1 L844.6 202.1" fill="none" stroke="#cfcbc4" stroke-width="0.3" stroke-linejoin="round" stroke-linecap="round" /><path d="M783.4 111.6 L781.0 115.1" fill="none" stroke="#cfcbc4" stroke-width="0.3" stroke-linejoin="round" stroke-linecap="round" /><path d="M780.7 190.1 L779.3 194.2" fill="none" stroke="#cfcbc4" stroke-width="0.3" stroke-linejoin="round" stroke-linecap="round" /><path d="M859.1 184.9 L855.9 189.6" fill="none" stroke="#cfcbc4" stroke-width="0.3" stroke-linejoin="round" stroke-linecap="round" /><path d="M777.3 138.5 L775.8 142.7" fill="none" stroke="#cfcbc4" stroke-width="0.3" stroke-linejoin="round" stroke-linecap="round" /><path d="M790.0 109.8 L787.3 117.5" fill="none" stroke="#cfcbc4" stroke-width="0.3" stroke-linejoin="round" stroke-linecap="round" /><path d="M824.1 211.3 L820.7 216.3" fill="none" stroke="#cfcbc4" stroke-width="0.3" stroke-linejoin="round" stroke-linecap="round" /><path d="M840.2 108.0 L836.0 114.2" fill="none" stroke="#cfcbc4" stroke-width="0.3" stroke-linejoin="round" stroke-linecap="round" /><path d="M845.3 170.7 L853.6 176.4" fill="none" stroke="#cfcbc4" stroke-width="0.3" stroke-linejoin="round" stroke-linecap="round" /><path d="M788.1 206.4 L783.0 214.0" fill="none" stroke="#cfcbc4" stroke-width="0.3" stroke-linejoin="round" stroke-linecap="round" /><path d="M809.3 134.9 L815.6 139.2" fill="none" stroke="#cfcbc4" stroke-width="0.3" stroke-linejoin="round" stroke-linecap="round" /><path d="M774.0 213.6 L768.1 222.3" fill="none" stroke="#cfcbc4" stroke-width="0.3" stroke-linejoin="round" stroke-linecap="round" /><path d="M860.1 196.4 L865.2 198.0" fill="none" stroke="#cfcbc4" stroke-width="0.3" stroke-linejoin="round" stroke-linecap="round" /><path d="M821.2 195.4 L826.1 198.7" fill="none" stroke="#cfcbc4" stroke-width="0.3" stroke-linejoin="round" stroke-linecap="round" /><path d="M832.6 135.3 L840.6 137.8" fill="none" stroke="#cfcbc4" stroke-width="0.3" stroke-linejoin="round" stroke-linecap="round" /><path d="M852.5 216.1 L849.5 225.1" fill="none" stroke="#cfcbc4" stroke-width="0.3" stroke-linejoin="round" stroke-linecap="round" /><path d="M833.0 163.9 L840.5 169.1" fill="none" stroke="#cfcbc4" stroke-width="0.3" stroke-linejoin="round" stroke-linecap="round" /><path d="M865.9 187.6 L863.6 194.3" fill="none" stroke="#cfcbc4" stroke-width="0.3" stroke-linejoin="round" stroke-linecap="round" /><path d="M862.1 124.3 L858.6 134.6" fill="none" stroke="#cfcbc4" stroke-width="0.3" stroke-linejoin="round" stroke-linecap="round" /><path d="M793.2 176.3 L787.7 184.4" fill="none" stroke="#cfcbc4" stroke-width="0.3" stroke-linejoin="round" stroke-linecap="round" /><path d="M781.4 96.5 L789.4 102.0" fill="none" stroke="#cfcbc4" stroke-width="0.3" stroke-linejoin="round" stroke-linecap="round" /><path d="M785.2 214.2 L788.5 215.2" fill="none" stroke="#cfcbc4" stroke-width="0.3" stroke-linejoin="round" stroke-linecap="round" /><path d="M860.0 118.7 L858.7 122.7" fill="none" stroke="#cfcbc4" stroke-width="0.3" stroke-linejoin="round" stroke-linecap="round" /><path d="M865.3 100.4 L861.9 110.3" fill="none" stroke="#cfcbc4" stroke-width="0.3" stroke-linejoin="round" stroke-linecap="round" /><path d="M869.7 105.2 L866.4 109.9" fill="none" stroke="#cfcbc4" stroke-width="0.3" stroke-linejoin="round" stroke-linecap="round" /><path d="M785.2 209.7 L790.1 213.1" fill="none" stroke="#cfcbc4" stroke-width="0.3" stroke-linejoin="round" stroke-linecap="round" /><path d="M788.0 187.0 L786.5 191.4" fill="none" stroke="#cfcbc4" stroke-width="0.3" stroke-linejoin="round" stroke-linecap="round" /><path d="M857.5 150.1 L851.7 158.6" fill="none" stroke="#cfcbc4" stroke-width="0.3" stroke-linejoin="round" stroke-linecap="round" /><path d="M789.4 155.0 L786.9 158.6" fill="none" stroke="#cfcbc4" stroke-width="0.3" stroke-linejoin="round" stroke-linecap="round" /><path d="M840.7 116.8 L844.7 119.6" fill="none" stroke="#cfcbc4" stroke-width="0.3" stroke-linejoin="round" stroke-linecap="round" /><path d="M824.4 181.2 L822.5 187.0" fill="none" stroke="#cfcbc4" stroke-width="0.3" stroke-linejoin="round" stroke-linecap="round" /><path d="M828.1 126.0 L836.9 128.7" fill="none" stroke="#cfcbc4" stroke-width="0.3" stroke-linejoin="round" stroke-linecap="round" /><path d="M805.4 119.4 L814.1 125.4" fill="none" stroke="#cfcbc4" stroke-width="0.3" stroke-linejoin="round" stroke-linecap="round" /><path d="M815.7 135.1 L822.5 139.8" fill="none" stroke="#cfcbc4" stroke-width="0.3" stroke-linejoin="round" stroke-linecap="round" /><path d="M790.5 207.6 L793.5 208.5" fill="none" stroke="#cfcbc4" stroke-width="0.3" stroke-linejoin="round" stroke-linecap="round" /><path d="M825.0 120.3 L828.8 121.5" fill="none" stroke="#cfcbc4" stroke-width="0.3" stroke-linejoin="round" stroke-linecap="round" /><path d="M806.5 113.6 L813.4 115.8" fill="none" stroke="#cfcbc4" stroke-width="0.3" stroke-linejoin="round" stroke-linecap="round" /><path d="M791.8 102.9 L796.6 106.2" fill="none" stroke="#cfcbc4" stroke-width="0.3" stroke-linejoin="round" stroke-linecap="round" /><path d="M786.1 105.7 L785.1 108.7" fill="none" stroke="#cfcbc4" stroke-width="0.3" stroke-linejoin="round" stroke-linecap="round" /><path d="M866.1 206.3 L862.0 212.4" fill="none" stroke="#cfcbc4" stroke-width="0.3" stroke-linejoin="round" stroke-linecap="round" /><path d="M850.0 98.7 L847.3 102.5" fill="none" stroke="#cfcbc4" stroke-width="0.3" stroke-linejoin="round" stroke-linecap="round" /><path d="M806.4 127.7 L813.1 132.3" fill="none" stroke="#cfcbc4" stroke-width="0.3" stroke-linejoin="round" stroke-linecap="round" /><path d="M815.4 177.5 L822.4 182.3" fill="none" stroke="#cfcbc4" stroke-width="0.3" stroke-linejoin="round" stroke-linecap="round" /><path d="M869.3 141.9 L866.9 148.9" fill="none" stroke="#cfcbc4" stroke-width="0.3" stroke-linejoin="round" stroke-linecap="round" /><path d="M809.6 165.3 L815.0 167.0" fill="none" stroke="#cfcbc4" stroke-width="0.3" stroke-linejoin="round" stroke-linecap="round" /><path d="M806.5 110.5 L804.5 113.4" fill="none" stroke="#cfcbc4" stroke-width="0.3" stroke-linejoin="round" stroke-linecap="round" /><path d="M775.3 129.1 L779.6 132.0" fill="none" stroke="#cfcbc4" stroke-width="0.3" stroke-linejoin="round" stroke-linecap="round" /><path d="M802.7 173.5 L799.0 178.9" fill="none" stroke="#cfcbc4" stroke-width="0.3" stroke-linejoin="round" stroke-linecap="round" /><path d="M816.5 98.1 L819.9 99.2" fill="none" stroke="#cfcbc4" stroke-width="0.3" stroke-linejoin="round" stroke-linecap="round" /><path d="M810.3 187.5 L817.0 189.5" fill="none" stroke="#cfcbc4" stroke-width="0.3" stroke-linejoin="round" stroke-linecap="round" /><path d="M866.2 196.1 L864.1 202.1" fill="none" stroke="#cfcbc4" stroke-width="0.3" stroke-linejoin="round" stroke-linecap="round" /><path d="M864.9 135.8 L860.5 142.3" fill="none" stroke="#cfcbc4" stroke-width="0.3" stroke-linejoin="round" stroke-linecap="round" /><path d="M825.5 204.1 L834.0 209.9" fill="none" stroke="#cfcbc4" stroke-width="0.3" stroke-linejoin="round" stroke-linecap="round" /><path d="M811.8 121.8 L818.2 123.8" fill="none" stroke="#cfcbc4" stroke-width="0.3" stroke-linejoin="round" stroke-linecap="round" /><path d="M821.0 219.5 L828.1 224.4" fill="none" stroke="#cfcbc4" stroke-width="0.3" stroke-linejoin="round" stroke-linecap="round" /><path d="M776.8 106.4 L771.2 114.5" fill="none" stroke="#cfcbc4" stroke-width="0.3" stroke-linejoin="round" stroke-linecap="round" /><path d="M791.2 205.5 L793.8 207.3" fill="none" stroke="#cfcbc4" stroke-width="0.3" stroke-linejoin="round" stroke-linecap="round" /><path d="M851.9 123.0 L854.5 124.8" fill="none" stroke="#cfcbc4" stroke-width="0.3" stroke-linejoin="round" stroke-linecap="round" /><path d="M815.0 212.4 L819.2 213.7" fill="none" stroke="#cfcbc4" stroke-width="0.3" stroke-linejoin="round" stroke-linecap="round" /><path d="M785.5 192.0 L796.0 195.2" fill="none" stroke="#cfcbc4" stroke-width="0.3" stroke-linejoin="round" stroke-linecap="round" /><path d="M842.6 109.0 L837.5 116.4" fill="none" stroke="#cfcbc4" stroke-width="0.3" stroke-linejoin="round" stroke-linecap="round" /><path d="M810.6 107.9 L820.7 111.1" fill="none" stroke="#cfcbc4" stroke-width="0.3" stroke-linejoin="round" stroke-linecap="round" /><path d="M802.4 201.3 L797.3 208.7" fill="none" stroke="#cfcbc4" stroke-width="0.3" stroke-linejoin="round" stroke-linecap="round" /><path d="M844.8 100.4 L848.9 103.2" fill="none" stroke="#cfcbc4" stroke-width="0.3" stroke-linejoin="round" stroke-linecap="round" /><path d="M811.1 206.2 L809.6 210.7" fill="none" stroke="#cfcbc4" stroke-width="0.3" stroke-linejoin="round" stroke-linecap="round" /><path d="M871.7 191.4 L880.9 194.3" fill="none" stroke="#cfcbc4" stroke-width="0.3" stroke-linejoin="round" stroke-linecap="round" /><path d="M797.2 127.4 L793.5 132.9" fill="none" stroke="#cfcbc4" stroke-width="0.3" stroke-linejoin="round" stroke-linecap="round" /><path d="M786.9 136.8 L781.6 144.6" fill="none" stroke="#cfcbc4" stroke-width="0.3" stroke-linejoin="round" stroke-linecap="round" /><path d="M795.0 140.0 L799.0 142.7" fill="none" stroke="#cfcbc4" stroke-width="0.3" stroke-linejoin="round" stroke-linecap="round" /><path d="M815.5 113.9 L820.2 117.1" fill="none" stroke="#cfcbc4" stroke-width="0.3" stroke-linejoin="round" stroke-linecap="round" /><path d="M850.5 145.5 L853.1 147.3" fill="none" stroke="#cfcbc4" stroke-width="0.3" stroke-linejoin="round" stroke-linecap="round" /><path d="M780.8 152.8 L783.3 154.5" fill="none" stroke="#cfcbc4" stroke-width="0.3" stroke-linejoin="round" stroke-linecap="round" /><path d="M858.9 106.9 L855.9 111.4" fill="none" stroke="#cfcbc4" stroke-width="0.3" stroke-linejoin="round" stroke-linecap="round" /><path d="M783.5 186.7 L787.6 188.0" fill="none" stroke="#cfcbc4" stroke-width="0.3" stroke-linejoin="round" stroke-linecap="round" /><path d="M827.5 175.5 L834.0 180.0" fill="none" stroke="#cfcbc4" stroke-width="0.3" stroke-linejoin="round" stroke-linecap="round" /><path d="M804.4 215.7 L801.3 220.2" fill="none" stroke="#cfcbc4" stroke-width="0.3" stroke-linejoin="round" stroke-linecap="round" /><path d="M805.5 101.3 L812.0 103.3" fill="none" stroke="#cfcbc4" stroke-width="0.3" stroke-linejoin="round" stroke-linecap="round" /><path d="M833.7 123.1 L831.8 125.8" fill="none" stroke="#cfcbc4" stroke-width="0.3" stroke-linejoin="round" stroke-linecap="round" /><path d="M804.5 209.2 L799.0 217.3" fill="none" stroke="#cfcbc4" stroke-width="0.3" stroke-linejoin="round" stroke-linecap="round" /><path d="M853.1 173.9 L850.3 182.2" fill="none" stroke="#cfcbc4" stroke-width="0.3" stroke-linejoin="round" stroke-linecap="round" /><path d="M868.1 170.9 L863.1 178.2" fill="none" stroke="#cfcbc4" stroke-width="0.3" stroke-linejoin="round" stroke-linecap="round" /><path d="M856.5 162.2 L859.1 164.0" fill="none" stroke="#cfcbc4" stroke-width="0.3" stroke-linejoin="round" stroke-linecap="round" /><path d="M831.3 114.9 L830.3 118.1" fill="none" stroke="#cfcbc4" stroke-width="0.3" stroke-linejoin="round" stroke-linecap="round" /><path d="M825.4 214.4 L834.6 217.3" fill="none" stroke="#cfcbc4" stroke-width="0.3" stroke-linejoin="round" stroke-linecap="round" /><path d="M789.3 136.8 L796.6 141.8" fill="none" stroke="#cfcbc4" stroke-width="0.3" stroke-linejoin="round" stroke-linecap="round" /><path d="M801.6 178.8 L807.7 180.7" fill="none" stroke="#cfcbc4" stroke-width="0.3" stroke-linejoin="round" stroke-linecap="round" /><path d="M835.6 101.0 L841.2 104.8" fill="none" stroke="#cfcbc4" stroke-width="0.3" stroke-linejoin="round" stroke-linecap="round" /><path d="M814.9 163.5 L812.9 169.1" fill="none" stroke="#cfcbc4" stroke-width="0.3" stroke-linejoin="round" stroke-linecap="round" /><path d="M836.2 210.4 L839.8 211.5" fill="none" stroke="#cfcbc4" stroke-width="0.3" stroke-linejoin="round" stroke-linecap="round" /><path d="M792.4 192.5 L790.4 195.4" fill="none" stroke="#cfcbc4" stroke-width="0.3" stroke-linejoin="round" stroke-linecap="round" /><path d="M840.1 210.0 L846.0 211.8" fill="none" stroke="#cfcbc4" stroke-width="0.3" stroke-linejoin="round" stroke-linecap="round" /><path d="M831.3 169.6 L841.8 172.8" fill="none" stroke="#cfcbc4" stroke-width="0.3" stroke-linejoin="round" stroke-linecap="round" /><path d="M799.6 207.0 L794.9 213.9" fill="none" stroke="#cfcbc4" stroke-width="0.3" stroke-linejoin="round" stroke-linecap="round" /><path d="M870.2 112.1 L876.3 116.2" fill="none" stroke="#cfcbc4" stroke-width="0.3" stroke-linejoin="round" stroke-linecap="round" /><path d="M825.5 113.7 L823.2 120.5" fill="none" stroke="#cfcbc4" stroke-width="0.3" stroke-linejoin="round" stroke-linecap="round" /><path d="M784.8 133.6 L783.6 137.1" fill="none" stroke="#cfcbc4" stroke-width="0.3" stroke-linejoin="round" stroke-linecap="round" /><path d="M868.5 99.6 L866.9 104.2" fill="none" stroke="#cfcbc4" stroke-width="0.3" stroke-linejoin="round" stroke-linecap="round" /><path d="M837.1 158.0 L841.8 159.4" fill="none" stroke="#cfcbc4" stroke-width="0.3" stroke-linejoin="round" stroke-linecap="round" /><path d="M912.0 95.0 L925.0 95.0 L934.0 106.0 L931.0 114.0 Z" fill="#d9dbc2" /><ellipse cx="925" cy="68.5" rx="3" ry="2" fill="#b9d5ea"/><ellipse cx="979" cy="100" rx="2.6" ry="2" fill="#b9d5ea"/><path d="M888.0 176.0 L900.0 172.0 L912.0 188.0 L900.0 194.0 Z" fill="#d8d8e8" /><path d="M831.2 103.0 L836.4 104.3" fill="none" stroke="#d6d2ca" stroke-width="0.35" stroke-linejoin="round" stroke-linecap="round" /><path d="M788.2 188.9 L791.6 191.6" fill="none" stroke="#d6d2ca" stroke-width="0.35" stroke-linejoin="round" stroke-linecap="round" /><path d="M787.5 127.9 L796.3 134.8" fill="none" stroke="#d6d2ca" stroke-width="0.35" stroke-linejoin="round" stroke-linecap="round" /><path d="M836.1 150.3 L830.9 161.2" fill="none" stroke="#d6d2ca" stroke-width="0.35" stroke-linejoin="round" stroke-linecap="round" /><path d="M780.5 196.7 L778.4 201.8" fill="none" stroke="#d6d2ca" stroke-width="0.35" stroke-linejoin="round" stroke-linecap="round" /><path d="M856.6 140.4 L862.7 144.8" fill="none" stroke="#d6d2ca" stroke-width="0.35" stroke-linejoin="round" stroke-linecap="round" /><path d="M807.5 131.7 L814.7 137.7" fill="none" stroke="#d6d2ca" stroke-width="0.35" stroke-linejoin="round" stroke-linecap="round" /><path d="M857.8 145.4 L867.4 149.1" fill="none" stroke="#d6d2ca" stroke-width="0.35" stroke-linejoin="round" stroke-linecap="round" /><path d="M848.9 169.3 L854.3 172.6" fill="none" stroke="#d6d2ca" stroke-width="0.35" stroke-linejoin="round" stroke-linecap="round" /><path d="M803.2 109.6 L798.0 115.4" fill="none" stroke="#d6d2ca" stroke-width="0.35" stroke-linejoin="round" stroke-linecap="round" /><path d="M816.3 200.1 L812.7 205.0" fill="none" stroke="#d6d2ca" stroke-width="0.35" stroke-linejoin="round" stroke-linecap="round" /><path d="M801.4 212.4 L805.8 216.0" fill="none" stroke="#d6d2ca" stroke-width="0.35" stroke-linejoin="round" stroke-linecap="round" /><path d="M838.3 119.6 L833.4 131.9" fill="none" stroke="#d6d2ca" stroke-width="0.35" stroke-linejoin="round" stroke-linecap="round" /><path d="M835.1 126.4 L846.0 130.6" fill="none" stroke="#d6d2ca" stroke-width="0.35" stroke-linejoin="round" stroke-linecap="round" /><path d="M798.3 103.9 L802.8 105.1" fill="none" stroke="#d6d2ca" stroke-width="0.35" stroke-linejoin="round" stroke-linecap="round" /><path d="M853.1 168.1 L861.8 170.2" fill="none" stroke="#d6d2ca" stroke-width="0.35" stroke-linejoin="round" stroke-linecap="round" /><path d="M850.8 177.1 L847.1 182.5" fill="none" stroke="#d6d2ca" stroke-width="0.35" stroke-linejoin="round" stroke-linecap="round" /><path d="M824.9 131.5 L821.0 138.5" fill="none" stroke="#d6d2ca" stroke-width="0.35" stroke-linejoin="round" stroke-linecap="round" /><path d="M797.5 219.7 L796.0 223.9" fill="none" stroke="#d6d2ca" stroke-width="0.35" stroke-linejoin="round" stroke-linecap="round" /><path d="M788.8 175.3 L785.4 182.4" fill="none" stroke="#d6d2ca" stroke-width="0.35" stroke-linejoin="round" stroke-linecap="round" /><path d="M827.7 156.2 L839.3 161.0" fill="none" stroke="#d6d2ca" stroke-width="0.35" stroke-linejoin="round" stroke-linecap="round" /><path d="M780.9 186.5 L787.9 189.1" fill="none" stroke="#d6d2ca" stroke-width="0.35" stroke-linejoin="round" stroke-linecap="round" /><path d="M803.5 119.0 L812.9 127.6" fill="none" stroke="#d6d2ca" stroke-width="0.35" stroke-linejoin="round" stroke-linecap="round" /><path d="M801.1 160.1 L798.0 164.1" fill="none" stroke="#d6d2ca" stroke-width="0.35" stroke-linejoin="round" stroke-linecap="round" /><path d="M830.0 201.0 L823.7 210.7" fill="none" stroke="#d6d2ca" stroke-width="0.35" stroke-linejoin="round" stroke-linecap="round" /><path d="M823.2 193.4 L830.1 199.0" fill="none" stroke="#d6d2ca" stroke-width="0.35" stroke-linejoin="round" stroke-linecap="round" /><path d="M788.9 143.6 L795.2 145.1" fill="none" stroke="#d6d2ca" stroke-width="0.35" stroke-linejoin="round" stroke-linecap="round" /><path d="M825.4 109.5 L818.9 121.6" fill="none" stroke="#d6d2ca" stroke-width="0.35" stroke-linejoin="round" stroke-linecap="round" /><path d="M822.6 115.1 L819.8 120.0" fill="none" stroke="#d6d2ca" stroke-width="0.35" stroke-linejoin="round" stroke-linecap="round" /><path d="M822.2 172.8 L814.5 181.4" fill="none" stroke="#d6d2ca" stroke-width="0.35" stroke-linejoin="round" stroke-linecap="round" /><path d="M835.2 185.6 L829.9 194.6" fill="none" stroke="#d6d2ca" stroke-width="0.35" stroke-linejoin="round" stroke-linecap="round" /><path d="M815.0 162.1 L818.9 164.7" fill="none" stroke="#d6d2ca" stroke-width="0.35" stroke-linejoin="round" stroke-linecap="round" /><path d="M781.7 166.5 L775.9 175.9" fill="none" stroke="#d6d2ca" stroke-width="0.35" stroke-linejoin="round" stroke-linecap="round" /><path d="M784.7 108.1 L788.2 111.2" fill="none" stroke="#d6d2ca" stroke-width="0.35" stroke-linejoin="round" stroke-linecap="round" /><path d="M799.0 180.3 L792.2 189.2" fill="none" stroke="#d6d2ca" stroke-width="0.35" stroke-linejoin="round" stroke-linecap="round" /><path d="M850.6 169.1 L842.8 178.3" fill="none" stroke="#d6d2ca" stroke-width="0.35" stroke-linejoin="round" stroke-linecap="round" /><path d="M795.2 111.6 L792.1 119.1" fill="none" stroke="#d6d2ca" stroke-width="0.35" stroke-linejoin="round" stroke-linecap="round" /><path d="M849.1 106.5 L858.7 112.5" fill="none" stroke="#d6d2ca" stroke-width="0.35" stroke-linejoin="round" stroke-linecap="round" /><path d="M844.0 113.1 L839.3 120.2" fill="none" stroke="#d6d2ca" stroke-width="0.35" stroke-linejoin="round" stroke-linecap="round" /><path d="M813.8 133.4 L810.6 137.0" fill="none" stroke="#d6d2ca" stroke-width="0.35" stroke-linejoin="round" stroke-linecap="round" /><path d="M844.6 202.7 L856.5 210.2" fill="none" stroke="#d6d2ca" stroke-width="0.35" stroke-linejoin="round" stroke-linecap="round" /><path d="M846.9 216.3 L842.0 223.7" fill="none" stroke="#d6d2ca" stroke-width="0.35" stroke-linejoin="round" stroke-linecap="round" /><path d="M797.1 148.1 L800.5 150.3" fill="none" stroke="#d6d2ca" stroke-width="0.35" stroke-linejoin="round" stroke-linecap="round" /><path d="M811.2 211.2 L807.1 221.3" fill="none" stroke="#d6d2ca" stroke-width="0.35" stroke-linejoin="round" stroke-linecap="round" /><path d="M838.4 194.0 L836.0 200.5" fill="none" stroke="#d6d2ca" stroke-width="0.35" stroke-linejoin="round" stroke-linecap="round" /><path d="M857.5 169.5 L861.0 172.4" fill="none" stroke="#d6d2ca" stroke-width="0.35" stroke-linejoin="round" stroke-linecap="round" /><path d="M826.7 160.3 L821.9 168.0" fill="none" stroke="#d6d2ca" stroke-width="0.35" stroke-linejoin="round" stroke-linecap="round" /><path d="M848.1 108.2 L853.0 112.2" fill="none" stroke="#d6d2ca" stroke-width="0.35" stroke-linejoin="round" stroke-linecap="round" /><path d="M789.6 206.8 L786.9 210.3" fill="none" stroke="#d6d2ca" stroke-width="0.35" stroke-linejoin="round" stroke-linecap="round" /><path d="M786.6 178.9 L792.2 181.2" fill="none" stroke="#d6d2ca" stroke-width="0.35" stroke-linejoin="round" stroke-linecap="round" /><path d="M837.3 128.6 L833.7 138.4" fill="none" stroke="#d6d2ca" stroke-width="0.35" stroke-linejoin="round" stroke-linecap="round" /><path d="M816.6 211.5 L825.3 216.8" fill="none" stroke="#d6d2ca" stroke-width="0.35" stroke-linejoin="round" stroke-linecap="round" /><path d="M825.0 112.0 L821.8 116.2" fill="none" stroke="#d6d2ca" stroke-width="0.35" stroke-linejoin="round" stroke-linecap="round" /><path d="M807.9 108.3 L804.7 112.8" fill="none" stroke="#d6d2ca" stroke-width="0.35" stroke-linejoin="round" stroke-linecap="round" /><path d="M846.7 184.4 L854.1 190.5" fill="none" stroke="#d6d2ca" stroke-width="0.35" stroke-linejoin="round" stroke-linecap="round" /><path d="M854.5 112.4 L847.2 123.1" fill="none" stroke="#d6d2ca" stroke-width="0.35" stroke-linejoin="round" stroke-linecap="round" /><path d="M839.4 118.7 L850.0 122.2" fill="none" stroke="#d6d2ca" stroke-width="0.35" stroke-linejoin="round" stroke-linecap="round" /><path d="M796.3 176.1 L802.5 178.0" fill="none" stroke="#d6d2ca" stroke-width="0.35" stroke-linejoin="round" stroke-linecap="round" /><path d="M852.7 106.1 L850.5 110.0" fill="none" stroke="#d6d2ca" stroke-width="0.35" stroke-linejoin="round" stroke-linecap="round" /><path d="M806.7 115.7 L814.9 117.6" fill="none" stroke="#d6d2ca" stroke-width="0.35" stroke-linejoin="round" stroke-linecap="round" /><path d="M836.5 167.3 L847.3 174.2" fill="none" stroke="#d6d2ca" stroke-width="0.35" stroke-linejoin="round" stroke-linecap="round" /><path d="M852.3 165.5 L857.5 167.2" fill="none" stroke="#d6d2ca" stroke-width="0.35" stroke-linejoin="round" stroke-linecap="round" /><path d="M790.2 137.0 L794.7 141.1" fill="none" stroke="#d6d2ca" stroke-width="0.35" stroke-linejoin="round" stroke-linecap="round" /><path d="M800.0 112.3 L794.2 122.3" fill="none" stroke="#d6d2ca" stroke-width="0.35" stroke-linejoin="round" stroke-linecap="round" /><path d="M854.1 128.4 L845.9 137.3" fill="none" stroke="#d6d2ca" stroke-width="0.35" stroke-linejoin="round" stroke-linecap="round" /><path d="M850.5 103.0 L858.1 105.8" fill="none" stroke="#d6d2ca" stroke-width="0.35" stroke-linejoin="round" stroke-linecap="round" /><path d="M833.6 188.2 L826.9 198.0" fill="none" stroke="#d6d2ca" stroke-width="0.35" stroke-linejoin="round" stroke-linecap="round" /><path d="M788.6 204.7 L784.2 216.0" fill="none" stroke="#d6d2ca" stroke-width="0.35" stroke-linejoin="round" stroke-linecap="round" /><path d="M816.8 136.6 L810.9 145.4" fill="none" stroke="#d6d2ca" stroke-width="0.35" stroke-linejoin="round" stroke-linecap="round" /><path d="M811.9 133.4 L816.9 138.0" fill="none" stroke="#d6d2ca" stroke-width="0.35" stroke-linejoin="round" stroke-linecap="round" /><path d="M831.3 148.0 L836.1 149.9" fill="none" stroke="#d6d2ca" stroke-width="0.35" stroke-linejoin="round" stroke-linecap="round" /><path d="M857.6 121.4 L867.4 123.5" fill="none" stroke="#d6d2ca" stroke-width="0.35" stroke-linejoin="round" stroke-linecap="round" /><path d="M807.7 194.4 L803.7 202.6" fill="none" stroke="#d6d2ca" stroke-width="0.35" stroke-linejoin="round" stroke-linecap="round" /><path d="M810.8 169.2 L819.0 170.9" fill="none" stroke="#d6d2ca" stroke-width="0.35" stroke-linejoin="round" stroke-linecap="round" /><path d="M821.6 196.8 L818.9 200.6" fill="none" stroke="#d6d2ca" stroke-width="0.35" stroke-linejoin="round" stroke-linecap="round" /><path d="M833.1 139.6 L838.1 141.3" fill="none" stroke="#d6d2ca" stroke-width="0.35" stroke-linejoin="round" stroke-linecap="round" /><path d="M852.0 160.9 L847.8 171.0" fill="none" stroke="#d6d2ca" stroke-width="0.35" stroke-linejoin="round" stroke-linecap="round" /><path d="M824.4 123.0 L818.5 134.7" fill="none" stroke="#d6d2ca" stroke-width="0.35" stroke-linejoin="round" stroke-linecap="round" /><path d="M829.2 136.1 L834.2 139.6" fill="none" stroke="#d6d2ca" stroke-width="0.35" stroke-linejoin="round" stroke-linecap="round" /><path d="M842.9 172.8 L850.9 175.2" fill="none" stroke="#d6d2ca" stroke-width="0.35" stroke-linejoin="round" stroke-linecap="round" /><path d="M797.1 156.8 L792.8 162.1" fill="none" stroke="#d6d2ca" stroke-width="0.35" stroke-linejoin="round" stroke-linecap="round" /><path d="M833.1 174.3 L841.8 181.8" fill="none" stroke="#d6d2ca" stroke-width="0.35" stroke-linejoin="round" stroke-linecap="round" /><path d="M833.8 127.0 L831.4 130.7" fill="none" stroke="#d6d2ca" stroke-width="0.35" stroke-linejoin="round" stroke-linecap="round" /><path d="M858.7 173.4 L869.0 181.0" fill="none" stroke="#d6d2ca" stroke-width="0.35" stroke-linejoin="round" stroke-linecap="round" /><path d="M826.1 186.2 L823.4 192.1" fill="none" stroke="#d6d2ca" stroke-width="0.35" stroke-linejoin="round" stroke-linecap="round" /><path d="M832.5 100.7 L837.2 104.7" fill="none" stroke="#d6d2ca" stroke-width="0.35" stroke-linejoin="round" stroke-linecap="round" /><path d="M844.3 183.5 L842.2 189.6" fill="none" stroke="#d6d2ca" stroke-width="0.35" stroke-linejoin="round" stroke-linecap="round" /><path d="M847.9 154.8 L841.7 167.2" fill="none" stroke="#d6d2ca" stroke-width="0.35" stroke-linejoin="round" stroke-linecap="round" /><path d="M827.6 214.0 L822.8 224.1" fill="none" stroke="#d6d2ca" stroke-width="0.35" stroke-linejoin="round" stroke-linecap="round" /><path d="M820.4 199.7 L814.8 209.7" fill="none" stroke="#d6d2ca" stroke-width="0.35" stroke-linejoin="round" stroke-linecap="round" /><path d="M818.0 131.1 L813.5 136.2" fill="none" stroke="#d6d2ca" stroke-width="0.35" stroke-linejoin="round" stroke-linecap="round" /><path d="M842.2 158.2 L839.5 162.1" fill="none" stroke="#d6d2ca" stroke-width="0.35" stroke-linejoin="round" stroke-linecap="round" /><path d="M802.9 132.6 L807.3 134.4" fill="none" stroke="#d6d2ca" stroke-width="0.35" stroke-linejoin="round" stroke-linecap="round" /><path d="M792.1 146.0 L789.1 149.5" fill="none" stroke="#d6d2ca" stroke-width="0.35" stroke-linejoin="round" stroke-linecap="round" /><path d="M812.6 165.1 L808.5 176.7" fill="none" stroke="#d6d2ca" stroke-width="0.35" stroke-linejoin="round" stroke-linecap="round" /><path d="M811.2 192.4 L819.9 200.1" fill="none" stroke="#d6d2ca" stroke-width="0.35" stroke-linejoin="round" stroke-linecap="round" /><path d="M810.4 100.7 L818.1 102.7" fill="none" stroke="#d6d2ca" stroke-width="0.35" stroke-linejoin="round" stroke-linecap="round" /><path d="M851.3 200.3 L847.3 205.7" fill="none" stroke="#d6d2ca" stroke-width="0.35" stroke-linejoin="round" stroke-linecap="round" /><path d="M818.9 146.7 L813.2 157.7" fill="none" stroke="#d6d2ca" stroke-width="0.35" stroke-linejoin="round" stroke-linecap="round" /><path d="M853.6 217.7 L860.9 224.3" fill="none" stroke="#d6d2ca" stroke-width="0.35" stroke-linejoin="round" stroke-linecap="round" /><path d="M833.0 110.1 L830.0 118.1" fill="none" stroke="#d6d2ca" stroke-width="0.35" stroke-linejoin="round" stroke-linecap="round" /><path d="M784.0 145.5 L779.6 151.4" fill="none" stroke="#d6d2ca" stroke-width="0.35" stroke-linejoin="round" stroke-linecap="round" /><path d="M850.4 133.4 L848.6 137.9" fill="none" stroke="#d6d2ca" stroke-width="0.35" stroke-linejoin="round" stroke-linecap="round" /><path d="M781.6 164.7 L786.1 165.9" fill="none" stroke="#d6d2ca" stroke-width="0.35" stroke-linejoin="round" stroke-linecap="round" /><path d="M856.6 104.8 L861.0 108.9" fill="none" stroke="#d6d2ca" stroke-width="0.35" stroke-linejoin="round" stroke-linecap="round" /><path d="M781.6 118.3 L778.5 122.4" fill="none" stroke="#d6d2ca" stroke-width="0.35" stroke-linejoin="round" stroke-linecap="round" /><path d="M855.8 155.8 L861.1 157.8" fill="none" stroke="#d6d2ca" stroke-width="0.35" stroke-linejoin="round" stroke-linecap="round" /><path d="M828.6 189.8 L832.9 193.4" fill="none" stroke="#d6d2ca" stroke-width="0.35" stroke-linejoin="round" stroke-linecap="round" /><path d="M804.9 169.4 L817.3 173.5" fill="none" stroke="#d6d2ca" stroke-width="0.35" stroke-linejoin="round" stroke-linecap="round" /><path d="M810.0 213.0 L804.2 222.2" fill="none" stroke="#d6d2ca" stroke-width="0.35" stroke-linejoin="round" stroke-linecap="round" /><path d="M847.3 76.8 L837.3 85.6 L822.9 87.6" fill="none" stroke="#dad6ce" stroke-width="0.35" stroke-linejoin="round" stroke-linecap="round" /><path d="M837.2 80.4 L824.6 81.1 L812.7 74.2" fill="none" stroke="#dad6ce" stroke-width="0.35" stroke-linejoin="round" stroke-linecap="round" /><path d="M741.4 138.3 L745.2 147.1 L743.4 157.3" fill="none" stroke="#dad6ce" stroke-width="0.35" stroke-linejoin="round" stroke-linecap="round" /><path d="M739.1 217.7 L734.7 220.4 L729.1 220.3" fill="none" stroke="#dad6ce" stroke-width="0.35" stroke-linejoin="round" stroke-linecap="round" /><path d="M973.6 177.3 L963.5 183.4 L950.7 182.9" fill="none" stroke="#dad6ce" stroke-width="0.35" stroke-linejoin="round" stroke-linecap="round" /><path d="M774.8 195.8 L767.9 196.6 L761.1 193.2" fill="none" stroke="#dad6ce" stroke-width="0.35" stroke-linejoin="round" stroke-linecap="round" /><path d="M915.8 159.0 L916.3 167.8 L911.5 176.0" fill="none" stroke="#dad6ce" stroke-width="0.35" stroke-linejoin="round" stroke-linecap="round" /><path d="M886.6 108.2 L874.9 114.1 L860.7 112.5" fill="none" stroke="#dad6ce" stroke-width="0.35" stroke-linejoin="round" stroke-linecap="round" /><path d="M642.8 223.7 L649.4 230.0 L651.6 239.6" fill="none" stroke="#dad6ce" stroke-width="0.35" stroke-linejoin="round" stroke-linecap="round" /><path d="M840.9 129.0 L854.3 130.2 L865.7 139.2" fill="none" stroke="#dad6ce" stroke-width="0.35" stroke-linejoin="round" stroke-linecap="round" /><path d="M678.8 97.6 L672.6 102.2 L664.2 102.7" fill="none" stroke="#dad6ce" stroke-width="0.35" stroke-linejoin="round" stroke-linecap="round" /><path d="M943.1 189.7 L945.8 192.8 L946.3 197.3" fill="none" stroke="#dad6ce" stroke-width="0.35" stroke-linejoin="round" stroke-linecap="round" /><path d="M968.7 73.7 L962.8 81.0 L953.1 84.0" fill="none" stroke="#dad6ce" stroke-width="0.35" stroke-linejoin="round" stroke-linecap="round" /><path d="M896.9 187.7 L892.7 196.1 L884.0 201.4" fill="none" stroke="#dad6ce" stroke-width="0.35" stroke-linejoin="round" stroke-linecap="round" /><path d="M910.0 75.1 L919.0 82.6 L922.7 94.6" fill="none" stroke="#dad6ce" stroke-width="0.35" stroke-linejoin="round" stroke-linecap="round" /><path d="M725.9 167.2 L726.7 177.0 L721.7 186.4" fill="none" stroke="#dad6ce" stroke-width="0.35" stroke-linejoin="round" stroke-linecap="round" /><path d="M771.0 198.1 L777.0 208.2 L776.4 221.0" fill="none" stroke="#dad6ce" stroke-width="0.35" stroke-linejoin="round" stroke-linecap="round" /><path d="M712.5 105.0 L718.2 107.2 L722.0 112.6" fill="none" stroke="#dad6ce" stroke-width="0.35" stroke-linejoin="round" stroke-linecap="round" /><path d="M655.2 158.6 L650.8 162.7 L644.4 163.8" fill="none" stroke="#dad6ce" stroke-width="0.35" stroke-linejoin="round" stroke-linecap="round" /><path d="M691.9 148.8 L682.3 160.1 L667.0 164.6" fill="none" stroke="#dad6ce" stroke-width="0.35" stroke-linejoin="round" stroke-linecap="round" /><path d="M808.5 110.9 L814.4 112.8 L818.5 118.0" fill="none" stroke="#dad6ce" stroke-width="0.35" stroke-linejoin="round" stroke-linecap="round" /><path d="M696.1 91.4 L705.9 91.8 L714.7 98.1" fill="none" stroke="#dad6ce" stroke-width="0.35" stroke-linejoin="round" stroke-linecap="round" /><path d="M713.8 241.2 L711.9 252.7 L703.3 262.0" fill="none" stroke="#dad6ce" stroke-width="0.35" stroke-linejoin="round" stroke-linecap="round" /><path d="M657.8 221.2 L658.2 234.8 L650.5 247.4" fill="none" stroke="#dad6ce" stroke-width="0.35" stroke-linejoin="round" stroke-linecap="round" /><path d="M827.2 146.0 L828.4 152.0 L825.9 158.0" fill="none" stroke="#dad6ce" stroke-width="0.35" stroke-linejoin="round" stroke-linecap="round" /><path d="M629.4 234.9 L630.4 247.9 L623.5 260.3" fill="none" stroke="#dad6ce" stroke-width="0.35" stroke-linejoin="round" stroke-linecap="round" /><path d="M761.6 71.6 L759.8 75.8 L755.7 78.5" fill="none" stroke="#dad6ce" stroke-width="0.35" stroke-linejoin="round" stroke-linecap="round" /><path d="M666.5 163.6 L675.1 175.8 L675.8 192.0" fill="none" stroke="#dad6ce" stroke-width="0.35" stroke-linejoin="round" stroke-linecap="round" /><path d="M654.8 201.6 L650.7 213.6 L639.8 222.1" fill="none" stroke="#dad6ce" stroke-width="0.35" stroke-linejoin="round" stroke-linecap="round" /><path d="M695.4 156.1 L696.8 164.8 L692.9 173.6" fill="none" stroke="#dad6ce" stroke-width="0.35" stroke-linejoin="round" stroke-linecap="round" /><path d="M935.5 244.1 L941.7 253.0 L942.1 264.7" fill="none" stroke="#dad6ce" stroke-width="0.35" stroke-linejoin="round" stroke-linecap="round" /><path d="M840.7 197.0 L834.5 198.1 L828.2 195.4" fill="none" stroke="#dad6ce" stroke-width="0.35" stroke-linejoin="round" stroke-linecap="round" /><path d="M689.9 182.0 L695.1 184.8 L698.1 190.5" fill="none" stroke="#dad6ce" stroke-width="0.35" stroke-linejoin="round" stroke-linecap="round" /><path d="M638.4 58.1 L640.0 68.5 L635.4 79.0" fill="none" stroke="#dad6ce" stroke-width="0.35" stroke-linejoin="round" stroke-linecap="round" /><path d="M720.2 101.2 L713.1 110.6 L701.1 114.9" fill="none" stroke="#dad6ce" stroke-width="0.35" stroke-linejoin="round" stroke-linecap="round" /><path d="M781.8 187.1 L769.5 190.1 L756.5 185.6" fill="none" stroke="#dad6ce" stroke-width="0.35" stroke-linejoin="round" stroke-linecap="round" /><path d="M846.5 182.2 L838.0 184.0 L829.2 180.6" fill="none" stroke="#dad6ce" stroke-width="0.35" stroke-linejoin="round" stroke-linecap="round" /><path d="M816.1 179.6 L803.5 183.3 L789.9 179.3" fill="none" stroke="#dad6ce" stroke-width="0.35" stroke-linejoin="round" stroke-linecap="round" /><path d="M637.0 88.9 L644.0 98.9 L644.4 112.2" fill="none" stroke="#dad6ce" stroke-width="0.35" stroke-linejoin="round" stroke-linecap="round" /><path d="M825.4 112.0 L836.1 116.4 L843.2 126.7" fill="none" stroke="#dad6ce" stroke-width="0.35" stroke-linejoin="round" stroke-linecap="round" /><path d="M874.8 235.2 L874.8 244.6 L869.2 253.2" fill="none" stroke="#dad6ce" stroke-width="0.35" stroke-linejoin="round" stroke-linecap="round" /><path d="M640.4 65.1 L642.0 72.5 L639.1 80.1" fill="none" stroke="#dad6ce" stroke-width="0.35" stroke-linejoin="round" stroke-linecap="round" /><path d="M704.7 74.8 L691.6 76.4 L678.8 70.1" fill="none" stroke="#dad6ce" stroke-width="0.35" stroke-linejoin="round" stroke-linecap="round" /><path d="M827.7 236.7 L816.3 236.8 L805.9 230.1" fill="none" stroke="#dad6ce" stroke-width="0.35" stroke-linejoin="round" stroke-linecap="round" /><path d="M712.0 65.2 L705.4 71.5 L695.6 73.4" fill="none" stroke="#dad6ce" stroke-width="0.35" stroke-linejoin="round" stroke-linecap="round" /><path d="M914.4 55.7 L808.0 225.0" fill="none" stroke="#dedad2" stroke-width="0.35" stroke-linejoin="round" stroke-linecap="round" /><path d="M938.1 70.6 L831.7 239.9" fill="none" stroke="#dedad2" stroke-width="0.35" stroke-linejoin="round" stroke-linecap="round" /><path d="M950.0 78.1 L843.5 247.4" fill="none" stroke="#dedad2" stroke-width="0.35" stroke-linejoin="round" stroke-linecap="round" /><path d="M985.5 100.5 L879.1 269.7" fill="none" stroke="#dedad2" stroke-width="0.35" stroke-linejoin="round" stroke-linecap="round" /><path d="M893.6 74.2 L944.4 106.1" fill="none" stroke="#dedad2" stroke-width="0.35" stroke-linejoin="round" stroke-linecap="round" /><path d="M887.2 84.4 L938.0 116.3" fill="none" stroke="#dedad2" stroke-width="0.35" stroke-linejoin="round" stroke-linecap="round" /><path d="M874.4 104.8 L925.2 136.7" fill="none" stroke="#dedad2" stroke-width="0.35" stroke-linejoin="round" stroke-linecap="round" /><path d="M861.6 125.2 L912.4 157.1" fill="none" stroke="#dedad2" stroke-width="0.35" stroke-linejoin="round" stroke-linecap="round" /><path d="M848.8 145.6 L899.6 177.5" fill="none" stroke="#dedad2" stroke-width="0.35" stroke-linejoin="round" stroke-linecap="round" /><path d="M842.4 155.8 L893.2 187.7" fill="none" stroke="#dedad2" stroke-width="0.35" stroke-linejoin="round" stroke-linecap="round" /><path d="M860.0 57.0 L850.0 80.0 L845.0 100.0" fill="none" stroke="#cfcbc3" stroke-width="0.9" stroke-linejoin="round" stroke-linecap="round" /><path d="M860.0 57.0 L850.0 80.0 L845.0 100.0" fill="none" stroke="#fbfaf7" stroke-width="0.55" stroke-linejoin="round" stroke-linecap="round" /><path d="M900.0 160.0 L988.0 160.0" fill="none" stroke="#cfcbc3" stroke-width="0.9" stroke-linejoin="round" stroke-linecap="round" /><path d="M900.0 160.0 L988.0 160.0" fill="none" stroke="#fbfaf7" stroke-width="0.55" stroke-linejoin="round" stroke-linecap="round" /><path d="M896.0 101.0 L932.0 93.8 L953.7 86.6 L968.0 92.0 L990.0 93.8" fill="none" stroke="#cfcbc3" stroke-width="0.9" stroke-linejoin="round" stroke-linecap="round" /><path d="M896.0 101.0 L932.0 93.8 L953.7 86.6 L968.0 92.0 L990.0 93.8" fill="none" stroke="#fbfaf7" stroke-width="0.55" stroke-linejoin="round" stroke-linecap="round" /><path d="M968.0 92.0 L968.0 121.0" fill="none" stroke="#cfcbc3" stroke-width="0.9" stroke-linejoin="round" stroke-linecap="round" /><path d="M968.0 92.0 L968.0 121.0" fill="none" stroke="#fbfaf7" stroke-width="0.55" stroke-linejoin="round" stroke-linecap="round" /><path d="M963.6 121.0 L990.0 121.0" fill="none" stroke="#cfcbc3" stroke-width="0.9" stroke-linejoin="round" stroke-linecap="round" /><path d="M963.6 121.0 L990.0 121.0" fill="none" stroke="#fbfaf7" stroke-width="0.55" stroke-linejoin="round" stroke-linecap="round" /><path d="M963.6 121.0 L963.6 246.0" fill="none" stroke="#cfcbc3" stroke-width="0.9" stroke-linejoin="round" stroke-linecap="round" /><path d="M963.6 121.0 L963.6 246.0" fill="none" stroke="#fbfaf7" stroke-width="0.55" stroke-linejoin="round" stroke-linecap="round" /><path d="M706.0 96.0 L726.0 104.0 L738.0 100.0 L748.0 112.0 L760.0 118.0 L770.0 124.0" fill="none" stroke="#c3aee0" stroke-width="0.55" stroke-linejoin="round" stroke-linecap="round" stroke-dasharray="1.2 1"/><path d="M700.0 138.0 L716.0 130.0 L740.0 138.0 L746.0 150.0 L760.0 156.0 L776.0 170.0" fill="none" stroke="#c3aee0" stroke-width="0.55" stroke-linejoin="round" stroke-linecap="round" stroke-dasharray="1.2 1"/><path d="M742.0 200.0 L760.0 214.0 L768.0 232.0 L790.0 246.0" fill="none" stroke="#c3aee0" stroke-width="0.55" stroke-linejoin="round" stroke-linecap="round" stroke-dasharray="1.2 1"/><path d="M692.0 150.0 L704.0 158.0 L716.0 176.0 L728.0 198.0 L738.0 230.0 L742.0 246.0" fill="none" stroke="#c3aee0" stroke-width="0.55" stroke-linejoin="round" stroke-linecap="round" stroke-dasharray="1.2 1"/><path d="M610.0 210.0 L640.0 200.0 L660.0 206.0 L666.0 230.0 L676.0 246.0" fill="none" stroke="#c3aee0" stroke-width="0.55" stroke-linejoin="round" stroke-linecap="round" stroke-dasharray="1.2 1"/><path d="M892.0 100.0 L900.0 130.0 L912.0 150.0 L930.0 160.0 L950.0 148.0" fill="none" stroke="#c3aee0" stroke-width="0.55" stroke-linejoin="round" stroke-linecap="round" stroke-dasharray="1.2 1"/><path d="M973.5 58.7 L896.0 131.7" fill="none" stroke="#c3aee0" stroke-width="0.55" stroke-linejoin="round" stroke-linecap="round" stroke-dasharray="1.2 1"/><path d="M948.0 59.6 L952.0 77.6" fill="none" stroke="#c3aee0" stroke-width="0.55" stroke-linejoin="round" stroke-linecap="round" stroke-dasharray="1.2 1"/><path d="M862.0 60.0 L880.0 70.0 L876.0 90.0 L890.0 100.0 L884.0 112.0 L896.0 126.0 L890.0 140.0" fill="none" stroke="#c3aee0" stroke-width="0.55" stroke-linejoin="round" stroke-linecap="round" stroke-dasharray="1.2 1"/><path d="M850.0 98.0 L870.0 120.0 L884.0 150.0 L870.0 170.0 L880.0 200.0" fill="none" stroke="#c3aee0" stroke-width="0.55" stroke-linejoin="round" stroke-linecap="round" stroke-dasharray="1.2 1"/><path d="M820.0 228.0 L850.0 216.0 L880.0 220.0 L910.0 246.0" fill="none" stroke="#c3aee0" stroke-width="0.55" stroke-linejoin="round" stroke-linecap="round" stroke-dasharray="1.2 1"/><path d="M640.0 246.0 L700.0 232.0 L760.0 226.0 L820.0 236.0" fill="none" stroke="#c3aee0" stroke-width="0.55" stroke-linejoin="round" stroke-linecap="round" stroke-dasharray="1.2 1"/><path d="M960.0 170.0 L988.0 170.0" fill="none" stroke="#c3aee0" stroke-width="0.55" stroke-linejoin="round" stroke-linecap="round" stroke-dasharray="1.2 1"/><path d="M963.0 206.0 L963.0 246.0" fill="none" stroke="#c3aee0" stroke-width="0.55" stroke-linejoin="round" stroke-linecap="round" stroke-dasharray="1.2 1"/><path d="M963.0 206.0 L988.0 206.0" fill="none" stroke="#c3aee0" stroke-width="0.55" stroke-linejoin="round" stroke-linecap="round" stroke-dasharray="1.2 1"/><path d="M871.0 57.0 L844.0 82.0 L826.0 94.0 L806.0 138.0 L784.0 154.0 L720.0 194.0 L644.0 246.0" fill="none" stroke="#8f8f8f" stroke-width="0.5" stroke-linejoin="round" stroke-linecap="round" /><path d="M852.0 57.0 L828.0 112.0 L806.0 138.0 L808.0 154.0 L720.0 206.0 L660.0 238.0 L650.0 246.0" fill="none" stroke="#9a9a9a" stroke-width="0.45" stroke-linejoin="round" stroke-linecap="round" /><path d="M860.0 68.0 L840.0 156.0 L830.0 246.0" fill="none" stroke="#a0a0a0" stroke-width="0.45" stroke-linejoin="round" stroke-linecap="round" /><path d="M768.0 60.0 L790.0 72.0 L808.0 80.0 L810.0 90.0 L821.0 118.0 L819.0 134.0 L829.0 162.0 L845.0 169.0 L848.5 191.7 L860.0 190.0 L864.5 179.0 L875.0 184.0 L871.0 202.0 L880.0 210.0 L888.0 219.0 L899.0 235.0 L899.0 246.0" fill="none" stroke="#9ec4e2" stroke-width="0.9" stroke-linejoin="round" stroke-linecap="round" /><path d="M610.0 134.0 L668.0 138.0 L708.0 131.0 L738.0 133.0 L746.0 123.0" fill="none" stroke="#e2d98a" stroke-width="1.3" stroke-linejoin="round" stroke-linecap="round" /><path d="M610.0 134.0 L668.0 138.0 L708.0 131.0 L738.0 133.0 L746.0 123.0" fill="none" stroke="#f6f1a8" stroke-width="0.9" stroke-linejoin="round" stroke-linecap="round" /><path d="M831.0 57.0 L831.0 76.0 L840.0 96.0 L860.0 112.0 L872.0 128.0 L882.0 150.0" fill="none" stroke="#e2d98a" stroke-width="1.3" stroke-linejoin="round" stroke-linecap="round" /><path d="M831.0 57.0 L831.0 76.0 L840.0 96.0 L860.0 112.0 L872.0 128.0 L882.0 150.0" fill="none" stroke="#f6f1a8" stroke-width="0.9" stroke-linejoin="round" stroke-linecap="round" /><path d="M768.0 188.0 L708.0 208.0 L688.0 228.0 L664.0 246.0" fill="none" stroke="#e2d98a" stroke-width="1.3" stroke-linejoin="round" stroke-linecap="round" /><path d="M768.0 188.0 L708.0 208.0 L688.0 228.0 L664.0 246.0" fill="none" stroke="#f6f1a8" stroke-width="0.9" stroke-linejoin="round" stroke-linecap="round" /><path d="M786.0 170.8 L797.0 159.6 L808.5 174.0 L810.0 186.9 L818.0 196.5 L829.3 211.0" fill="none" stroke="#e2d98a" stroke-width="1.3" stroke-linejoin="round" stroke-linecap="round" /><path d="M786.0 170.8 L797.0 159.6 L808.5 174.0 L810.0 186.9 L818.0 196.5 L829.3 211.0" fill="none" stroke="#f6f1a8" stroke-width="0.9" stroke-linejoin="round" stroke-linecap="round" /><path d="M826.0 162.8 L831.0 182.0" fill="none" stroke="#e2d98a" stroke-width="1.3" stroke-linejoin="round" stroke-linecap="round" /><path d="M826.0 162.8 L831.0 182.0" fill="none" stroke="#f6f1a8" stroke-width="0.9" stroke-linejoin="round" stroke-linecap="round" /><path d="M800.0 145.0 L780.0 140.0 L770.0 128.0" fill="none" stroke="#e2d98a" stroke-width="1.3" stroke-linejoin="round" stroke-linecap="round" /><path d="M800.0 145.0 L780.0 140.0 L770.0 128.0" fill="none" stroke="#f6f1a8" stroke-width="0.9" stroke-linejoin="round" stroke-linecap="round" /><path d="M651.0 57.0 L683.0 86.0 L714.0 98.0 L744.0 120.0 L768.0 132.0" fill="none" stroke="#eab77a" stroke-width="1.6" stroke-linejoin="round" stroke-linecap="round" /><path d="M651.0 57.0 L683.0 86.0 L714.0 98.0 L744.0 120.0 L768.0 132.0" fill="none" stroke="#f7c98a" stroke-width="1.2" stroke-linejoin="round" stroke-linecap="round" /><path d="M843.0 152.0 L846.0 154.0 L869.0 164.0 L884.0 186.0 L897.0 206.0 L924.0 246.0" fill="none" stroke="#eab77a" stroke-width="1.6" stroke-linejoin="round" stroke-linecap="round" /><path d="M843.0 152.0 L846.0 154.0 L869.0 164.0 L884.0 186.0 L897.0 206.0 L924.0 246.0" fill="none" stroke="#f7c98a" stroke-width="1.2" stroke-linejoin="round" stroke-linecap="round" /><path d="M768.7 131.9 L764.3 147.3 L773.0 162.8 L772.0 182.6 L774.0 186.0" fill="none" stroke="#e9927e" stroke-width="1.3" stroke-linejoin="round" stroke-linecap="round" /><path d="M768.7 131.9 L784.0 115.4 L804.0 112.0 L828.0 116.5 L834.8 129.7 L839.2 145.0 L845.8 154.0" fill="none" stroke="#e9927e" stroke-width="1.3" stroke-linejoin="round" stroke-linecap="round" /><path d="M904.0 57.0 L884.0 92.0 L860.0 116.0 L850.2 136.3 L843.7 151.6 L826.0 160.4 L806.9 169.2 L782.8 177.2 L770.0 183.7 L740.0 208.0 L716.0 225.0 L684.0 246.0" fill="none" stroke="#dc8a90" stroke-width="1.6" stroke-linejoin="round" stroke-linecap="round" /><path d="M904.0 57.0 L884.0 92.0 L860.0 116.0 L850.2 136.3 L843.7 151.6 L826.0 160.4 L806.9 169.2 L782.8 177.2 L770.0 183.7 L740.0 208.0 L716.0 225.0 L684.0 246.0" fill="none" stroke="#eea0a4" stroke-width="1.2" stroke-linejoin="round" stroke-linecap="round" /><rect x="655.9" y="63.2" width="13.0" height="5.6" rx="0.8" fill="#f8eede" stroke="#d8c8a8" stroke-width="0.4"/><text x="662.4" y="67.3" font-size="3.6" text-anchor="middle" fill="#555" font-family="Liberation Sans">TX 46</text><rect x="617.0" y="132.2" width="16.0" height="5.6" rx="0.8" fill="#f6f6e0" stroke="#d0d0a0" stroke-width="0.4"/><text x="625.0" y="136.3" font-size="3.6" text-anchor="middle" fill="#555" font-family="Liberation Sans">FM 1863</text><rect x="675.0" y="133.8" width="16.0" height="5.6" rx="0.8" fill="#f6f6e0" stroke="#d0d0a0" stroke-width="0.4"/><text x="683.0" y="137.9" font-size="3.6" text-anchor="middle" fill="#555" font-family="Liberation Sans">FM 1863</text><rect x="719.0" y="131.8" width="16.0" height="5.6" rx="0.8" fill="#f6f6e0" stroke="#d0d0a0" stroke-width="0.4"/><text x="727.0" y="135.9" font-size="3.6" text-anchor="middle" fill="#555" font-family="Liberation Sans">FM 1863</text><rect x="827.5" y="84.2" width="15.0" height="5.6" rx="0.8" fill="#f6f6e0" stroke="#d0d0a0" stroke-width="0.4"/><text x="835.0" y="88.3" font-size="3.6" text-anchor="middle" fill="#555" font-family="Liberation Sans">FM 306</text><rect x="803" y="106" width="24.4" height="12" rx="1" fill="#f5dcdc" stroke="#d8a8a8" stroke-width="0.4"/><text x="815.2" y="111" font-size="3.6" text-anchor="middle" fill="#555" font-family="Liberation Sans">TX 46</text><text x="815.2" y="116" font-size="3.6" text-anchor="middle" fill="#555" font-family="Liberation Sans">Loop 337</text><rect x="891.0" y="67.2" width="12.0" height="5.6" rx="0.8" fill="#f5dcdc" stroke="#d8a8a8" stroke-width="0.4"/><text x="897.0" y="71.3" font-size="3.6" text-anchor="middle" fill="#555" font-family="Liberation Sans">I 35</text><rect x="865.0" y="100.2" width="12.0" height="5.6" rx="0.8" fill="#f5dcdc" stroke="#d8a8a8" stroke-width="0.4"/><text x="871.0" y="104.3" font-size="3.6" text-anchor="middle" fill="#555" font-family="Liberation Sans">I 35</text><rect x="844.0" y="123.2" width="12.0" height="5.6" rx="0.8" fill="#f5dcdc" stroke="#d8a8a8" stroke-width="0.4"/><text x="850.0" y="127.3" font-size="3.6" text-anchor="middle" fill="#555" font-family="Liberation Sans">I 35</text><rect x="799.0" y="167.7" width="12.0" height="5.6" rx="0.8" fill="#f5dcdc" stroke="#d8a8a8" stroke-width="0.4"/><text x="805.0" y="171.8" font-size="3.6" text-anchor="middle" fill="#555" font-family="Liberation Sans">I 35</text><rect x="771.0" y="180.8" width="12.0" height="5.6" rx="0.8" fill="#f5dcdc" stroke="#d8a8a8" stroke-width="0.4"/><text x="777.0" y="184.9" font-size="3.6" text-anchor="middle" fill="#555" font-family="Liberation Sans">I 35</text><rect x="740.0" y="202.2" width="12.0" height="5.6" rx="0.8" fill="#f5dcdc" stroke="#d8a8a8" stroke-width="0.4"/><text x="746.0" y="206.3" font-size="3.6" text-anchor="middle" fill="#555" font-family="Liberation Sans">I 35</text><rect x="711.0" y="222.2" width="12.0" height="5.6" rx="0.8" fill="#f5dcdc" stroke="#d8a8a8" stroke-width="0.4"/><text x="717.0" y="226.3" font-size="3.6" text-anchor="middle" fill="#555" font-family="Liberation Sans">I 35</text><rect x="855.1" y="159.9" width="13.0" height="5.6" rx="0.8" fill="#f8eede" stroke="#d8c8a8" stroke-width="0.4"/><text x="861.6" y="164.0" font-size="3.6" text-anchor="middle" fill="#555" font-family="Liberation Sans">TX 46</text><rect x="880.9" y="187.9" width="13.0" height="5.6" rx="0.8" fill="#f8eede" stroke="#d8c8a8" stroke-width="0.4"/><text x="887.4" y="192.0" font-size="3.6" text-anchor="middle" fill="#555" font-family="Liberation Sans">TX 46</text><rect x="901.8" y="224.2" width="13.0" height="5.6" rx="0.8" fill="#f8eede" stroke="#d8c8a8" stroke-width="0.4"/><text x="908.3" y="228.3" font-size="3.6" text-anchor="middle" fill="#555" font-family="Liberation Sans">TX 46</text><rect x="985.0" y="157.2" width="10.0" height="5.6" rx="0.8" fill="#f8eede" stroke="#d8c8a8" stroke-width="0.4"/><text x="990.0" y="161.3" font-size="3.6" text-anchor="middle" fill="#555" font-family="Liberation Sans">TX</text><rect x="985.0" y="184.2" width="10.0" height="5.6" rx="0.8" fill="#f8eede" stroke="#d8c8a8" stroke-width="0.4"/><text x="990.0" y="188.3" font-size="3.6" text-anchor="middle" fill="#555" font-family="Liberation Sans">TX</text><rect x="985.0" y="215.2" width="10.0" height="5.6" rx="0.8" fill="#f8eede" stroke="#d8c8a8" stroke-width="0.4"/><text x="990.0" y="219.3" font-size="3.6" text-anchor="middle" fill="#555" font-family="Liberation Sans">TX</text><rect x="985.0" y="239.2" width="10.0" height="5.6" rx="0.8" fill="#f8eede" stroke="#d8c8a8" stroke-width="0.4"/><text x="990.0" y="243.3" font-size="3.6" text-anchor="middle" fill="#555" font-family="Liberation Sans">TX</text><text x="905.0" y="146.0" font-size="4.5" text-anchor="middle" fill="#8a6fc8" font-family="Liberation Sans">&#9992;</text><text x="905.0" y="151.0" font-size="3.4" font-style="italic" text-anchor="middle" fill="#8f78cc" font-family="Liberation Sans">New Braunfels</text><text x="905.0" y="155.0" font-size="3.4" font-style="italic" text-anchor="middle" fill="#8f78cc" font-family="Liberation Sans">Airport</text><text x="938.0" y="189.0" font-size="4.5" text-anchor="middle" fill="#8a6fc8" font-family="Liberation Sans">&#9992;</text><text x="938.0" y="194.0" font-size="3.4" font-style="italic" text-anchor="middle" fill="#8f78cc" font-family="Liberation Sans">Cunningham</text><text x="938.0" y="198.0" font-size="3.4" font-style="italic" text-anchor="middle" fill="#8f78cc" font-family="Liberation Sans">Airport</text><text x="793.0" y="199.0" font-size="4.5" text-anchor="middle" fill="#8a6fc8" font-family="Liberation Sans">&#9992;</text><text x="793.0" y="204.0" font-size="3.4" font-style="italic" text-anchor="middle" fill="#8f78cc" font-family="Liberation Sans">Hilltop</text><text x="793.0" y="208.0" font-size="3.4" font-style="italic" text-anchor="middle" fill="#8f78cc" font-family="Liberation Sans">Airport</text><text x="721.0" y="195.0" font-size="4.5" text-anchor="middle" fill="#8a6fc8" font-family="Liberation Sans">&#9992;</text><text x="721.0" y="200.0" font-size="3.4" font-style="italic" text-anchor="middle" fill="#8f78cc" font-family="Liberation Sans">Fox Airport</text><text x="789" y="149" font-size="5" fill="#555" font-family="Liberation Sans">New Braunfels</text><text x="642" y="98" font-size="3.2" fill="#888" font-family="Liberation Sans" font-style="italic">Copper</text><text x="645" y="103" font-size="3.2" fill="#888" font-family="Liberation Sans" font-style="italic">Ridge</text><path d="M696.0 95.6 l1.5 2.4 l-3 0 Z" fill="#e3875a"/><path d="M718.0 95.6 l1.5 2.4 l-3 0 Z" fill="#e3875a"/><path d="M700.0 103.6 l1.5 2.4 l-3 0 Z" fill="#e3875a"/><path d="M711.0 107.6 l1.5 2.4 l-3 0 Z" fill="#e3875a"/><path d="M697.0 110.6 l1.5 2.4 l-3 0 Z" fill="#e3875a"/><path d="M702.0 112.6 l1.5 2.4 l-3 0 Z" fill="#e3875a"/><path d="M706.0 113.6 l1.5 2.4 l-3 0 Z" fill="#e3875a"/><path d="M721.0 103.6 l1.5 2.4 l-3 0 Z" fill="#e3875a"/><path d="M761.0 130.6 l1.5 2.4 l-3 0 Z" fill="#e3875a"/><path d="M752.0 198.6 l1.5 2.4 l-3 0 Z" fill="#e3875a"/><path d="M944.0 76.2 l1.5 2.4 l-3 0 Z" fill="#e3875a"/><path d="M976.0 137.5 l1.5 2.4 l-3 0 Z" fill="#e3875a"/><path d="M880.0 155.6 l1.5 2.4 l-3 0 Z" fill="#e3875a"/><circle cx="746.9" cy="118.3" r="5.2" fill="#b3e09a" fill-opacity="0.9"/><circle cx="746.9" cy="118.3" r="4.3" fill="#a2d986"/><text x="746.9" y="120.2" font-size="5.5" text-anchor="middle" fill="#262626" font-family="Liberation Sans" text-rendering="geometricPrecision">32</text><circle cx="757.7" cy="112.2" r="5.2" fill="#b3e09a" fill-opacity="0.9"/><circle cx="757.7" cy="112.2" r="4.3" fill="#a2d986"/><text x="757.7" y="114.2" font-size="5.5" text-anchor="middle" fill="#262626" font-family="Liberation Sans" text-rendering="geometricPrecision">19</text><circle cx="774.2" cy="124.1" r="5.2" fill="#b3e09a" fill-opacity="0.9"/><circle cx="774.2" cy="124.1" r="4.3" fill="#a2d986"/><text x="774.2" y="126.0" font-size="5.5" text-anchor="middle" fill="#262626" font-family="Liberation Sans" text-rendering="geometricPrecision">52</text><circle cx="788.1" cy="137.0" r="5.2" fill="#b3e09a" fill-opacity="0.9"/><circle cx="788.1" cy="137.0" r="4.3" fill="#a2d986"/><text x="788.1" y="138.9" font-size="5.5" text-anchor="middle" fill="#262626" font-family="Liberation Sans" text-rendering="geometricPrecision">11</text><circle cx="813.5" cy="131.8" r="5.2" fill="#b3e09a" fill-opacity="0.9"/><circle cx="813.5" cy="131.8" r="4.3" fill="#a2d986"/><text x="813.5" y="133.8" font-size="5.5" text-anchor="middle" fill="#262626" font-family="Liberation Sans" text-rendering="geometricPrecision">7</text><circle cx="799.8" cy="146.2" r="5.2" fill="#b3e09a" fill-opacity="0.9"/><circle cx="799.8" cy="146.2" r="4.3" fill="#a2d986"/><text x="799.8" y="148.1" font-size="5.5" text-anchor="middle" fill="#262626" font-family="Liberation Sans" text-rendering="geometricPrecision">111</text><circle cx="796.4" cy="153.2" r="5.2" fill="#b3e09a" fill-opacity="0.9"/><circle cx="796.4" cy="153.2" r="4.3" fill="#a2d986"/><text x="796.4" y="155.1" font-size="5.5" text-anchor="middle" fill="#262626" font-family="Liberation Sans" text-rendering="geometricPrecision">4</text><circle cx="804.6" cy="153.4" r="5.2" fill="#b3e09a" fill-opacity="0.9"/><circle cx="804.6" cy="153.4" r="4.3" fill="#a2d986"/><text x="804.6" y="155.3" font-size="5.5" text-anchor="middle" fill="#262626" font-family="Liberation Sans" text-rendering="geometricPrecision">16</text><circle cx="806.5" cy="157.3" r="5.2" fill="#b3e09a" fill-opacity="0.9"/><circle cx="806.5" cy="157.3" r="4.3" fill="#a2d986"/><text x="806.5" y="159.2" font-size="5.5" text-anchor="middle" fill="#262626" font-family="Liberation Sans" text-rendering="geometricPrecision">21</text><circle cx="782.3" cy="167.4" r="5.2" fill="#b3e09a" fill-opacity="0.9"/><circle cx="782.3" cy="167.4" r="4.3" fill="#a2d986"/><text x="782.3" y="169.3" font-size="5.5" text-anchor="middle" fill="#262626" font-family="Liberation Sans" text-rendering="geometricPrecision">11</text><circle cx="809.7" cy="184.5" r="5.2" fill="#b3e09a" fill-opacity="0.9"/><circle cx="809.7" cy="184.5" r="4.3" fill="#a2d986"/><text x="809.7" y="186.4" font-size="5.5" text-anchor="middle" fill="#262626" font-family="Liberation Sans" text-rendering="geometricPrecision">7</text><circle cx="809.3" cy="187.2" r="5.2" fill="#b3e09a" fill-opacity="0.9"/><circle cx="809.3" cy="187.2" r="4.3" fill="#a2d986"/><text x="809.3" y="189.1" font-size="5.5" text-anchor="middle" fill="#262626" font-family="Liberation Sans" text-rendering="geometricPrecision">9</text><circle cx="802.2" cy="192.8" r="5.2" fill="#b3e09a" fill-opacity="0.9"/><circle cx="802.2" cy="192.8" r="4.3" fill="#a2d986"/><text x="802.2" y="194.8" font-size="5.5" text-anchor="middle" fill="#262626" font-family="Liberation Sans" text-rendering="geometricPrecision">14</text><circle cx="820.0" cy="207.7" r="5.2" fill="#b3e09a" fill-opacity="0.9"/><circle cx="820.0" cy="207.7" r="4.3" fill="#a2d986"/><text x="820.0" y="209.6" font-size="5.5" text-anchor="middle" fill="#262626" font-family="Liberation Sans" text-rendering="geometricPrecision">13</text><circle cx="811.7" cy="230.0" r="5.2" fill="#b3e09a" fill-opacity="0.9"/><circle cx="811.7" cy="230.0" r="4.3" fill="#a2d986"/><text x="811.7" y="231.9" font-size="5.5" text-anchor="middle" fill="#262626" font-family="Liberation Sans" text-rendering="geometricPrecision">39</text><rect x="614" y="62.2" width="10.4" height="21" rx="1" fill="#fff" stroke="#c8c8c8" stroke-width="0.8"/><line x1="614.4" y1="72.7" x2="624" y2="72.7" stroke="#ddd" stroke-width="0.5"/><path d="M616.8 67.4 L621.6 67.4 M619.2 65 L619.2 69.8" stroke="#333" stroke-width="0.9"/><path d="M617 77.8 L621.4 77.8" stroke="#333" stroke-width="0.9"/></g></svg>
<div class="a" style="left:992.70px;top:54.00px;width:8.90px;height:192.30px;background:#f1f1f1;"></div>
<div class="a" style="left:993.20px;top:62.80px;width:7.90px;height:135.20px;background:#c1c1c1;"></div>
<div class="arr" style="left:995.15px;top:56.40px;border-bottom:2.2px solid #a3a3a3;border-left-width:2px;border-right-width:2px"></div>
<div class="arr" style="left:995.15px;top:241.30px;border-top:2.2px solid #505050;border-left-width:2px;border-right-width:2px"></div>
</div></body></html>
